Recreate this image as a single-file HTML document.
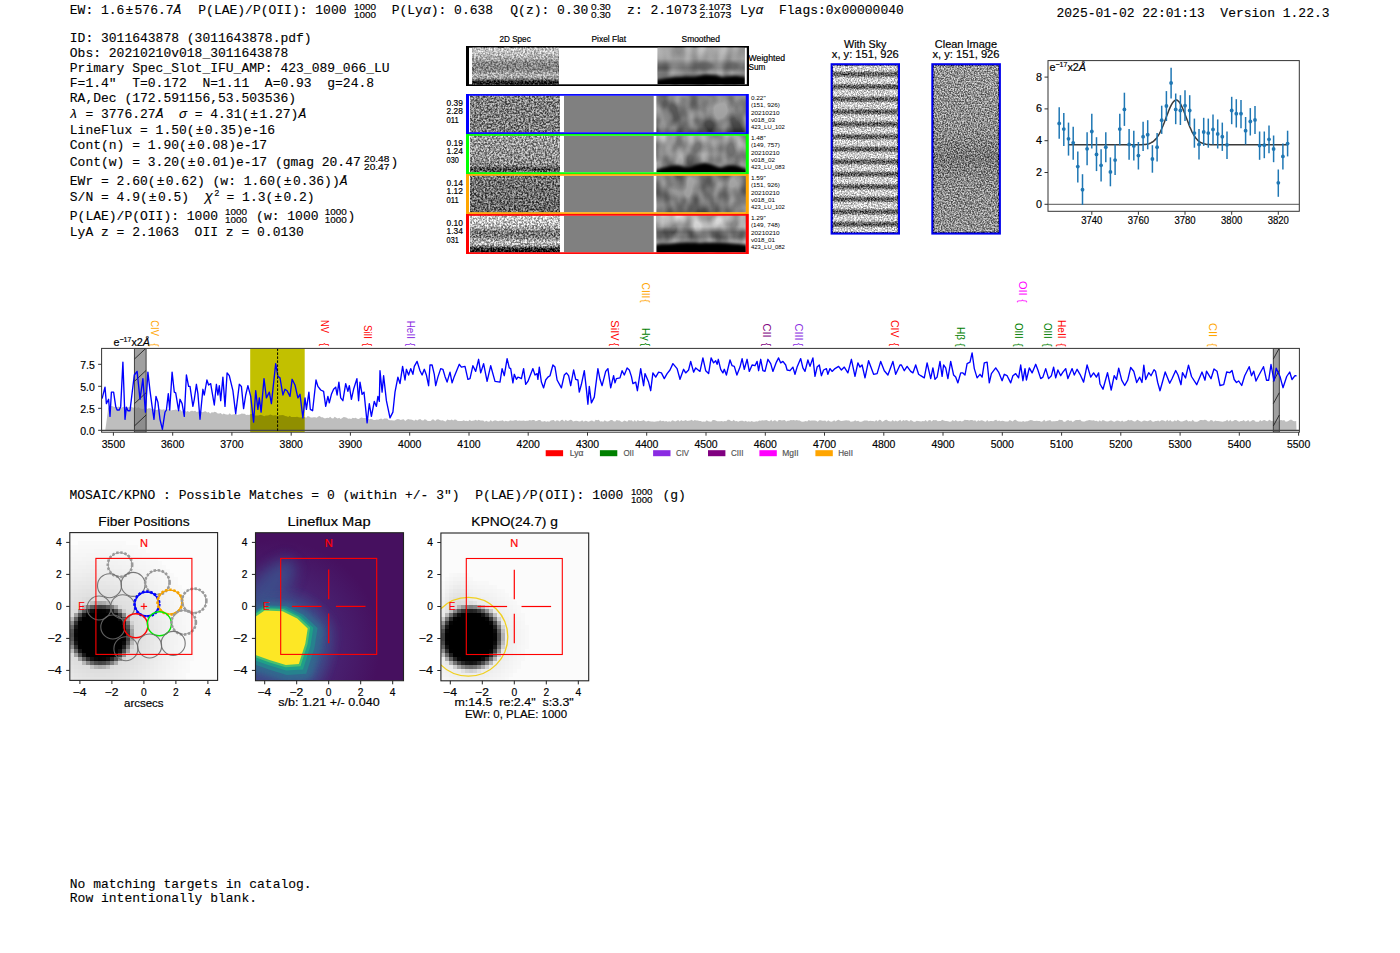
<!DOCTYPE html>
<html><head><meta charset="utf-8"><style>
html,body{margin:0;padding:0;background:#fff;}
body{width:1400px;height:953px;overflow:hidden;position:relative;}
svg{position:absolute;left:0;top:0;}
text{font-family:'Liberation Sans',sans-serif;white-space:pre;}
.m{font-family:'Liberation Mono',monospace;stroke:#000;stroke-width:0.12px;}
</style></head><body>
<svg width="1400" height="953" viewBox="0 0 1400 953">
<text x="69.80" y="14.00" font-size="13" class="m">EW: 1.6<tspan dx="1">±</tspan><tspan dx="1.3">5</tspan>76.7<tspan font-style="italic">Å</tspan></text>
<text x="198.30" y="14.00" font-size="13" class="m">P(LAE)/P(OII): 1000</text>
<text x="354.00" y="9.60" font-size="9.8" stroke="#000" stroke-width="0.18" textLength="22.00" lengthAdjust="spacingAndGlyphs">1000</text>
<text x="354.00" y="17.60" font-size="9.8" stroke="#000" stroke-width="0.18" textLength="22.00" lengthAdjust="spacingAndGlyphs">1000</text>
<text x="391.70" y="14.00" font-size="13" class="m">P(Ly<tspan font-style="italic">α</tspan>): 0.638</text>
<text x="510.30" y="14.00" font-size="13" class="m">Q(z): 0.30</text>
<text x="591.00" y="9.60" font-size="9.8" stroke="#000" stroke-width="0.18" textLength="19.70" lengthAdjust="spacingAndGlyphs">0.30</text>
<text x="591.00" y="17.60" font-size="9.8" stroke="#000" stroke-width="0.18" textLength="19.70" lengthAdjust="spacingAndGlyphs">0.30</text>
<text x="627.10" y="14.00" font-size="13" class="m">z: 2.1073</text>
<text x="699.50" y="9.60" font-size="9.8" stroke="#000" stroke-width="0.18" textLength="31.90" lengthAdjust="spacingAndGlyphs">2.1073</text>
<text x="699.50" y="17.60" font-size="9.8" stroke="#000" stroke-width="0.18" textLength="31.90" lengthAdjust="spacingAndGlyphs">2.1073</text>
<text x="740.00" y="14.00" font-size="13" class="m">Ly<tspan font-style="italic">α</tspan></text>
<text x="779.00" y="14.00" font-size="13" class="m">Flags:0x00000040</text>
<text x="1056.50" y="17.00" font-size="13" class="m">2025-01-02 22:01:13  Version 1.22.3</text>
<text x="69.80" y="42.40" font-size="13" class="m">ID: 3011643878 (3011643878.pdf)</text>
<text x="69.80" y="57.10" font-size="13" class="m">Obs: 20210210v018_3011643878</text>
<text x="69.80" y="72.10" font-size="13" class="m">Primary Spec_Slot_IFU_AMP: 423_089_066_LU</text>
<text x="69.80" y="87.10" font-size="13" class="m">F=1.4"  T=0.172  N=1.11  A=0.93  g=24.8</text>
<text x="69.80" y="102.10" font-size="13" class="m">RA,Dec (172.591156,53.503536)</text>
<text x="69.80" y="133.60" font-size="13" class="m">LineFlux = 1.50(<tspan dx="1">±</tspan><tspan dx="1.3">0</tspan>.35)e-16</text>
<text x="69.80" y="148.60" font-size="13" class="m">Cont(n) = 1.90(<tspan dx="1">±</tspan><tspan dx="1.3">0</tspan>.08)e-17</text>
<text x="69.80" y="184.60" font-size="13" class="m">EWr = 2.60(<tspan dx="1">±</tspan><tspan dx="1.3">0</tspan>.62) (w: 1.60(<tspan dx="1">±</tspan><tspan dx="1.3">0</tspan>.36))<tspan font-style="italic">Å</tspan></text>
<text x="69.80" y="236.40" font-size="13" class="m">LyA z = 2.1063  OII z = 0.0130</text>
<text x="69.80" y="118.30" font-size="13" class="m"><tspan font-style="italic">λ</tspan> = 3776.27<tspan font-style="italic">Å</tspan>  <tspan font-style="italic">σ</tspan> = 4.31(<tspan dx="1">±</tspan><tspan dx="1.3">1</tspan>.27)<tspan font-style="italic">Å</tspan></text>
<text x="69.80" y="166.40" font-size="13" class="m">Cont(w) = 3.20(<tspan dx="1">±</tspan><tspan dx="1.3">0</tspan>.01)e-17 (gmag 20.47</text>
<text x="364.00" y="162.00" font-size="9.8" stroke="#000" stroke-width="0.18" textLength="25.40" lengthAdjust="spacingAndGlyphs">20.48</text>
<text x="364.00" y="170.00" font-size="9.8" stroke="#000" stroke-width="0.18" textLength="25.40" lengthAdjust="spacingAndGlyphs">20.47</text>
<text x="390.50" y="166.40" font-size="13" class="m">)</text>
<text x="69.80" y="201.40" font-size="13" class="m">S/N = 4.9(<tspan dx="1">±</tspan><tspan dx="1.3">0</tspan>.5)</text>
<text x="204.50" y="201.40" font-size="14" class="m"><tspan font-style="italic">χ</tspan></text>
<text x="214.60" y="196.00" font-size="8.5" stroke="#000" stroke-width="0.18">2</text>
<text x="226.50" y="201.40" font-size="13" class="m">= 1.3(<tspan dx="1">±</tspan><tspan dx="1.3">0</tspan>.2)</text>
<text x="69.80" y="219.70" font-size="13" class="m">P(LAE)/P(OII): 1000</text>
<text x="225.00" y="215.30" font-size="9.8" stroke="#000" stroke-width="0.18" textLength="22.00" lengthAdjust="spacingAndGlyphs">1000</text>
<text x="225.00" y="223.30" font-size="9.8" stroke="#000" stroke-width="0.18" textLength="22.00" lengthAdjust="spacingAndGlyphs">1000</text>
<text x="256.10" y="219.70" font-size="13" class="m">(w: 1000</text>
<text x="324.70" y="215.30" font-size="9.8" stroke="#000" stroke-width="0.18" textLength="22.00" lengthAdjust="spacingAndGlyphs">1000</text>
<text x="324.70" y="223.30" font-size="9.8" stroke="#000" stroke-width="0.18" textLength="22.00" lengthAdjust="spacingAndGlyphs">1000</text>
<text x="347.50" y="219.70" font-size="13" class="m">)</text>
<text x="69.50" y="498.90" font-size="13" class="m">MOSAIC/KPNO : Possible Matches = 0 (within +/- 3")  P(LAE)/P(OII): 1000</text>
<text x="631.00" y="494.50" font-size="9.8" stroke="#000" stroke-width="0.18" textLength="21.50" lengthAdjust="spacingAndGlyphs">1000</text>
<text x="631.00" y="502.50" font-size="9.8" stroke="#000" stroke-width="0.18" textLength="21.50" lengthAdjust="spacingAndGlyphs">1000</text>
<text x="662.50" y="498.90" font-size="13" class="m">(g)</text>
<text x="69.80" y="887.80" font-size="13" class="m">No matching targets in catalog.</text>
<text x="69.80" y="902.40" font-size="13" class="m">Row intentionally blank.</text>
<defs><clipPath id="spc"><rect x="101.6" y="348.4" width="1197.8000000000002" height="83.80000000000001"/></clipPath><pattern id="hatch" patternUnits="userSpaceOnUse" width="40" height="22" patternTransform="translate(0,0)"></pattern></defs>
<rect x="101.6" y="348.4" width="1197.8000000000002" height="83.80000000000001" fill="#fff"/>
<g clip-path="url(#spc)">
<rect x="250.2" y="348.4" width="54.5" height="83.80000000000001" fill="#c2c000"/>
<path d="M105.2,430.3 L105.2,430.7 L106.7,419.8 L108.2,407.7 L109.7,406.8 L111.2,405.9 L112.7,406.3 L114.2,407.1 L115.7,406.2 L117.2,407.3 L118.7,406.6 L120.2,407.5 L121.7,407.5 L123.2,406.9 L124.7,406.2 L126.2,407.7 L127.7,407.6 L129.2,406.9 L130.7,406.3 L132.2,407.2 L133.7,407.7 L135.2,406.6 L136.7,408.6 L138.2,407.0 L139.7,408.3 L141.2,408.7 L142.7,408.9 L144.2,408.6 L145.7,407.6 L147.2,409.0 L148.7,408.3 L150.2,408.3 L151.7,408.9 L153.2,408.7 L154.7,409.8 L156.2,409.9 L157.7,409.7 L159.2,408.8 L160.7,409.4 L162.2,409.8 L163.7,409.3 L165.2,409.7 L166.7,410.1 L168.2,409.1 L169.7,409.4 L171.2,410.5 L172.7,409.9 L174.2,410.1 L175.7,409.5 L177.2,409.9 L178.7,410.9 L180.2,409.5 L181.7,411.5 L183.2,410.9 L184.7,410.3 L186.2,411.7 L187.7,411.1 L189.2,412.1 L190.7,410.9 L192.2,410.8 L193.7,411.3 L195.2,410.8 L196.7,412.1 L198.2,411.4 L199.7,411.7 L201.2,411.8 L202.7,412.2 L204.2,411.4 L205.7,411.3 L207.2,412.4 L208.7,412.1 L210.2,413.5 L211.7,412.2 L213.2,412.5 L214.7,411.8 L216.2,412.3 L217.7,413.5 L219.2,413.4 L220.7,412.9 L222.2,414.4 L223.7,413.6 L225.2,414.3 L226.7,414.5 L228.2,414.7 L229.7,413.3 L231.2,414.8 L232.7,414.6 L234.2,414.3 L235.7,413.4 L237.2,415.1 L238.7,414.4 L240.2,414.2 L241.7,413.6 L243.2,413.7 L244.7,413.7 L246.2,415.0 L247.7,414.8 L249.2,414.9 L250.7,413.9 L252.2,413.8 L253.7,415.5 L255.2,415.5 L256.7,415.5 L258.2,415.5 L259.7,415.0 L261.2,414.9 L262.7,415.6 L264.2,416.2 L265.7,415.4 L267.2,415.6 L268.7,415.2 L270.2,414.4 L271.7,415.0 L273.2,415.5 L274.7,415.3 L276.2,415.2 L277.7,416.6 L279.2,414.9 L280.7,415.2 L282.2,415.0 L283.7,415.2 L285.2,416.1 L286.7,416.2 L288.2,416.9 L289.7,415.8 L291.2,417.1 L292.7,417.1 L294.2,416.9 L295.7,417.0 L297.2,416.7 L298.7,417.3 L300.2,417.5 L301.7,417.2 L303.2,417.4 L304.7,416.9 L306.2,417.7 L307.7,415.9 L309.2,416.5 L310.7,417.6 L312.2,417.4 L313.7,417.3 L315.2,417.3 L316.7,417.8 L318.2,416.4 L319.7,416.1 L321.2,417.3 L322.7,417.3 L324.2,418.2 L325.7,418.2 L327.2,417.7 L328.7,418.0 L330.2,416.8 L331.7,418.3 L333.2,418.6 L334.7,416.7 L336.2,417.7 L337.7,418.5 L339.2,417.8 L340.7,418.9 L342.2,417.9 L343.7,417.0 L345.2,417.3 L346.7,417.7 L348.2,418.7 L349.7,418.5 L351.2,419.0 L352.7,417.8 L354.2,418.3 L355.7,417.8 L357.2,418.8 L358.7,419.1 L360.2,417.9 L361.7,417.6 L363.2,418.0 L364.7,418.1 L366.2,418.1 L367.7,418.4 L369.2,419.5 L370.7,418.9 L372.2,419.3 L373.7,420.1 L375.2,420.1 L376.7,419.6 L378.2,419.7 L379.7,418.9 L381.2,418.4 L382.7,419.5 L384.2,418.5 L385.7,418.5 L387.2,418.6 L388.7,419.9 L390.2,420.3 L391.7,420.3 L393.2,420.4 L394.7,420.4 L396.2,419.6 L397.7,419.1 L399.2,419.2 L400.7,420.0 L402.2,419.6 L403.7,419.3 L405.2,420.9 L406.7,419.7 L408.2,419.1 L409.7,419.4 L411.2,419.5 L412.7,420.1 L414.2,420.7 L415.7,419.5 L417.2,420.4 L418.7,419.5 L420.2,419.1 L421.7,420.3 L423.2,420.4 L424.7,419.2 L426.2,419.7 L427.7,420.9 L429.2,421.0 L430.7,420.9 L432.2,419.4 L433.7,419.6 L435.2,421.0 L436.7,419.6 L438.2,419.3 L439.7,420.0 L441.2,420.6 L442.7,420.2 L444.2,421.1 L445.7,421.4 L447.2,419.4 L448.7,420.1 L450.2,420.3 L451.7,419.5 L453.2,420.5 L454.7,419.6 L456.2,419.7 L457.7,421.1 L459.2,421.0 L460.7,420.9 L462.2,421.0 L463.7,420.3 L465.2,421.0 L466.7,420.7 L468.2,421.3 L469.7,419.7 L471.2,420.9 L472.7,420.7 L474.2,420.4 L475.7,419.8 L477.2,420.8 L478.7,419.8 L480.2,420.6 L481.7,420.6 L483.2,420.6 L484.7,421.7 L486.2,420.8 L487.7,421.4 L489.2,421.8 L490.7,420.1 L492.2,421.4 L493.7,420.8 L495.2,420.3 L496.7,420.7 L498.2,421.2 L499.7,420.8 L501.2,420.7 L502.7,420.2 L504.2,421.6 L505.7,420.7 L507.2,421.3 L508.7,421.3 L510.2,420.2 L511.7,420.8 L513.2,420.7 L514.7,420.2 L516.2,419.9 L517.7,420.9 L519.2,420.6 L520.7,420.8 L522.2,420.8 L523.7,420.4 L525.2,420.9 L526.7,420.7 L528.2,420.8 L529.7,419.9 L531.2,420.4 L532.7,420.0 L534.2,419.9 L535.7,421.3 L537.2,420.7 L538.7,419.9 L540.2,420.1 L541.7,421.6 L543.2,421.6 L544.7,420.9 L546.2,421.7 L547.7,421.3 L549.2,421.7 L550.7,420.4 L552.2,420.2 L553.7,420.0 L555.2,421.5 L556.7,420.3 L558.2,420.5 L559.7,421.6 L561.2,420.0 L562.7,419.8 L564.2,421.4 L565.7,419.8 L567.2,421.0 L568.7,420.8 L570.2,419.8 L571.7,420.1 L573.2,421.5 L574.7,420.9 L576.2,420.8 L577.7,421.1 L579.2,421.4 L580.7,421.2 L582.2,420.3 L583.7,421.8 L585.2,420.7 L586.7,420.9 L588.2,421.8 L589.7,421.2 L591.2,420.5 L592.7,420.8 L594.2,421.7 L595.7,419.8 L597.2,420.2 L598.7,419.8 L600.2,421.6 L601.7,421.3 L603.2,421.8 L604.7,420.2 L606.2,421.3 L607.7,421.6 L609.2,421.0 L610.7,419.9 L612.2,420.1 L613.7,421.3 L615.2,421.5 L616.7,419.9 L618.2,420.6 L619.7,420.4 L621.2,421.7 L622.7,421.7 L624.2,420.4 L625.7,421.0 L627.2,421.7 L628.7,419.9 L630.2,420.5 L631.7,420.2 L633.2,421.7 L634.7,420.0 L636.2,421.7 L637.7,420.0 L639.2,420.9 L640.7,421.1 L642.2,420.7 L643.7,419.9 L645.2,421.3 L646.7,421.6 L648.2,420.7 L649.7,421.3 L651.2,421.6 L652.7,421.5 L654.2,421.7 L655.7,421.4 L657.2,421.2 L658.7,421.2 L660.2,420.2 L661.7,421.2 L663.2,420.8 L664.7,421.5 L666.2,421.1 L667.7,421.8 L669.2,421.3 L670.7,421.8 L672.2,420.3 L673.7,420.7 L675.2,421.5 L676.7,420.8 L678.2,419.9 L679.7,421.6 L681.2,420.1 L682.7,420.9 L684.2,420.8 L685.7,420.1 L687.2,421.0 L688.7,420.8 L690.2,420.4 L691.7,419.8 L693.2,421.1 L694.7,420.1 L696.2,420.4 L697.7,420.5 L699.2,421.0 L700.7,421.1 L702.2,421.7 L703.7,421.6 L705.2,421.7 L706.7,420.3 L708.2,421.3 L709.7,421.5 L711.2,421.7 L712.7,420.1 L714.2,420.0 L715.7,420.4 L717.2,421.3 L718.7,421.3 L720.2,421.2 L721.7,420.9 L723.2,421.5 L724.7,420.9 L726.2,421.3 L727.7,419.8 L729.2,419.8 L730.7,420.7 L732.2,421.3 L733.7,419.8 L735.2,421.2 L736.7,421.1 L738.2,421.8 L739.7,421.0 L741.2,420.8 L742.7,420.8 L744.2,421.4 L745.7,420.8 L747.2,421.8 L748.7,421.3 L750.2,421.7 L751.7,421.0 L753.2,421.8 L754.7,421.8 L756.2,421.2 L757.7,421.4 L759.2,420.6 L760.7,420.7 L762.2,420.3 L763.7,420.5 L765.2,420.3 L766.7,420.0 L768.2,421.0 L769.7,421.2 L771.2,419.8 L772.7,421.5 L774.2,420.3 L775.7,420.5 L777.2,421.8 L778.7,420.1 L780.2,420.0 L781.7,420.5 L783.2,420.3 L784.7,420.1 L786.2,421.6 L787.7,420.7 L789.2,420.8 L790.7,420.1 L792.2,420.2 L793.7,420.1 L795.2,420.6 L796.7,420.0 L798.2,420.4 L799.7,420.4 L801.2,421.4 L802.7,421.8 L804.2,421.6 L805.7,421.1 L807.2,421.6 L808.7,420.1 L810.2,420.7 L811.7,420.5 L813.2,420.5 L814.7,420.4 L816.2,420.8 L817.7,421.8 L819.2,420.2 L820.7,420.3 L822.2,420.8 L823.7,420.7 L825.2,420.5 L826.7,421.7 L828.2,420.3 L829.7,421.3 L831.2,421.7 L832.7,421.3 L834.2,420.3 L835.7,421.4 L837.2,420.3 L838.7,419.8 L840.2,420.8 L841.7,421.0 L843.2,420.8 L844.7,420.4 L846.2,420.2 L847.7,420.5 L849.2,420.5 L850.7,421.7 L852.2,421.5 L853.7,421.3 L855.2,420.3 L856.7,421.2 L858.2,420.7 L859.7,421.8 L861.2,421.7 L862.7,421.3 L864.2,420.4 L865.7,420.4 L867.2,420.4 L868.7,421.2 L870.2,420.8 L871.7,420.9 L873.2,420.9 L874.7,421.6 L876.2,420.0 L877.7,421.4 L879.2,419.8 L880.7,419.9 L882.2,421.8 L883.7,420.9 L885.2,420.1 L886.7,419.8 L888.2,420.9 L889.7,421.3 L891.2,421.4 L892.7,419.9 L894.2,421.4 L895.7,420.6 L897.2,421.6 L898.7,420.7 L900.2,419.8 L901.7,421.6 L903.2,420.1 L904.7,420.8 L906.2,420.0 L907.7,420.4 L909.2,421.4 L910.7,420.0 L912.2,420.8 L913.7,421.8 L915.2,421.8 L916.7,420.8 L918.2,420.9 L919.7,421.2 L921.2,421.6 L922.7,421.1 L924.2,421.2 L925.7,420.1 L927.2,421.8 L928.7,420.3 L930.2,420.1 L931.7,421.6 L933.2,419.9 L934.7,420.3 L936.2,419.9 L937.7,421.2 L939.2,421.1 L940.7,421.0 L942.2,419.7 L943.7,420.6 L945.2,421.1 L946.7,420.9 L948.2,421.3 L949.7,421.8 L951.2,421.6 L952.7,420.1 L954.2,421.2 L955.7,419.9 L957.2,421.3 L958.7,421.3 L960.2,420.8 L961.7,421.5 L963.2,421.1 L964.7,419.8 L966.2,420.0 L967.7,420.1 L969.2,420.5 L970.7,419.9 L972.2,419.9 L973.7,420.7 L975.2,420.3 L976.7,421.7 L978.2,420.3 L979.7,420.9 L981.2,420.3 L982.7,420.5 L984.2,421.2 L985.7,421.7 L987.2,419.9 L988.7,421.6 L990.2,420.9 L991.7,421.1 L993.2,421.2 L994.7,420.3 L996.2,419.8 L997.7,421.3 L999.2,420.5 L1000.7,421.2 L1002.2,420.7 L1003.7,421.0 L1005.2,421.5 L1006.7,421.5 L1008.2,421.4 L1009.7,419.9 L1011.2,420.8 L1012.7,421.4 L1014.2,419.9 L1015.7,419.7 L1017.2,420.9 L1018.7,421.6 L1020.2,421.4 L1021.7,421.7 L1023.2,421.1 L1024.7,421.7 L1026.2,421.3 L1027.7,421.3 L1029.2,420.6 L1030.7,420.0 L1032.2,420.3 L1033.7,421.0 L1035.2,421.0 L1036.7,420.7 L1038.2,421.1 L1039.7,421.1 L1041.2,421.7 L1042.7,421.3 L1044.2,419.8 L1045.7,421.6 L1047.2,420.8 L1048.7,420.5 L1050.2,420.0 L1051.7,421.4 L1053.2,421.3 L1054.7,421.3 L1056.2,421.0 L1057.7,420.9 L1059.2,419.8 L1060.7,420.1 L1062.2,420.0 L1063.7,421.8 L1065.2,421.8 L1066.7,420.4 L1068.2,420.0 L1069.7,420.9 L1071.2,420.6 L1072.7,421.9 L1074.2,421.0 L1075.7,419.9 L1077.2,420.1 L1078.7,420.0 L1080.2,419.8 L1081.7,421.3 L1083.2,421.6 L1084.7,421.5 L1086.2,420.7 L1087.7,420.4 L1089.2,419.9 L1090.7,420.3 L1092.2,420.5 L1093.7,420.2 L1095.2,420.9 L1096.7,420.7 L1098.2,421.8 L1099.7,420.2 L1101.2,421.4 L1102.7,419.9 L1104.2,420.5 L1105.7,421.2 L1107.2,421.6 L1108.7,421.3 L1110.2,420.5 L1111.7,420.4 L1113.2,421.6 L1114.7,421.7 L1116.2,420.7 L1117.7,420.6 L1119.2,421.0 L1120.7,421.4 L1122.2,420.6 L1123.7,421.8 L1125.2,421.2 L1126.7,420.9 L1128.2,419.8 L1129.7,420.5 L1131.2,420.0 L1132.7,420.8 L1134.2,421.4 L1135.7,421.3 L1137.2,419.8 L1138.7,420.4 L1140.2,421.2 L1141.7,421.8 L1143.2,420.8 L1144.7,420.4 L1146.2,421.0 L1147.7,421.3 L1149.2,420.4 L1150.7,419.9 L1152.2,421.4 L1153.7,421.8 L1155.2,421.1 L1156.7,421.0 L1158.2,420.4 L1159.7,421.4 L1161.2,420.2 L1162.7,420.3 L1164.2,420.8 L1165.7,421.4 L1167.2,419.8 L1168.7,421.2 L1170.2,420.1 L1171.7,421.4 L1173.2,421.4 L1174.7,420.2 L1176.2,421.2 L1177.7,419.8 L1179.2,420.8 L1180.7,421.5 L1182.2,421.4 L1183.7,421.0 L1185.2,420.4 L1186.7,419.8 L1188.2,421.5 L1189.7,421.0 L1191.2,421.4 L1192.7,419.8 L1194.2,421.6 L1195.7,421.7 L1197.2,421.7 L1198.7,421.0 L1200.2,420.0 L1201.7,420.0 L1203.2,420.3 L1204.7,419.7 L1206.2,419.9 L1207.7,421.2 L1209.2,421.5 L1210.7,419.9 L1212.2,420.3 L1213.7,421.8 L1215.2,420.4 L1216.7,421.1 L1218.2,421.1 L1219.7,421.2 L1221.2,421.5 L1222.7,421.8 L1224.2,421.3 L1225.7,421.1 L1227.2,419.8 L1228.7,421.6 L1230.2,419.8 L1231.7,421.4 L1233.2,421.1 L1234.7,420.1 L1236.2,420.1 L1237.7,420.9 L1239.2,421.7 L1240.7,420.9 L1242.2,421.1 L1243.7,419.9 L1245.2,421.4 L1246.7,421.1 L1248.2,420.0 L1249.7,421.8 L1251.2,421.0 L1252.7,420.1 L1254.2,420.2 L1255.7,421.8 L1257.2,421.8 L1258.7,421.7 L1260.2,419.9 L1261.7,421.3 L1263.2,420.3 L1264.7,420.0 L1266.2,421.1 L1267.7,421.3 L1269.2,419.8 L1270.7,420.5 L1272.2,421.3 L1273.7,420.3 L1275.2,421.2 L1276.7,421.3 L1278.2,421.8 L1279.7,420.3 L1281.2,419.9 L1282.7,420.5 L1284.2,419.9 L1285.7,421.8 L1287.2,421.4 L1288.7,420.8 L1290.2,419.8 L1291.7,419.8 L1293.2,421.0 L1294.7,421.3 L1296.2,420.9 L1296.5,430.3 Z" fill="#000" fill-opacity="0.255"/>
<rect x="134.4" y="348.4" width="11.7" height="83.80000000000001" fill="#777" fill-opacity="0.7" stroke="#333" stroke-width="0.9"/>
<line x1="134.4" y1="336.8" x2="146.1" y2="325.8" stroke="#222" stroke-width="0.9"/>
<line x1="134.4" y1="359.1" x2="146.1" y2="348.1" stroke="#222" stroke-width="0.9"/>
<line x1="134.4" y1="381.4" x2="146.1" y2="370.4" stroke="#222" stroke-width="0.9"/>
<line x1="134.4" y1="403.7" x2="146.1" y2="392.7" stroke="#222" stroke-width="0.9"/>
<line x1="134.4" y1="426.0" x2="146.1" y2="415.0" stroke="#222" stroke-width="0.9"/>
<line x1="134.4" y1="448.3" x2="146.1" y2="437.3" stroke="#222" stroke-width="0.9"/>
<line x1="134.4" y1="470.6" x2="146.1" y2="459.6" stroke="#222" stroke-width="0.9"/>
<line x1="134.4" y1="492.9" x2="146.1" y2="481.9" stroke="#222" stroke-width="0.9"/>
<rect x="1273.3" y="348.4" width="6.0" height="83.80000000000001" fill="#777" fill-opacity="0.7" stroke="#333" stroke-width="0.9"/>
<line x1="1273.3" y1="336.8" x2="1279.3" y2="325.8" stroke="#222" stroke-width="0.9"/>
<line x1="1273.3" y1="359.1" x2="1279.3" y2="348.1" stroke="#222" stroke-width="0.9"/>
<line x1="1273.3" y1="381.4" x2="1279.3" y2="370.4" stroke="#222" stroke-width="0.9"/>
<line x1="1273.3" y1="403.7" x2="1279.3" y2="392.7" stroke="#222" stroke-width="0.9"/>
<line x1="1273.3" y1="426.0" x2="1279.3" y2="415.0" stroke="#222" stroke-width="0.9"/>
<line x1="1273.3" y1="448.3" x2="1279.3" y2="437.3" stroke="#222" stroke-width="0.9"/>
<line x1="1273.3" y1="470.6" x2="1279.3" y2="459.6" stroke="#222" stroke-width="0.9"/>
<line x1="1273.3" y1="492.9" x2="1279.3" y2="481.9" stroke="#222" stroke-width="0.9"/>
<line x1="101.6" y1="430.3" x2="1299.4" y2="430.3" stroke="#444" stroke-width="1.2"/>
<path d="M102.1,398.6 L105.0,387.1 L106.4,403.6 L108.6,399.3 L110.0,416.4 L111.4,392.1 L113.6,392.1 L115.7,406.4 L117.1,410.0 L119.3,410.0 L120.7,406.4 L122.9,362.1 L125.0,419.3 L126.4,407.1 L127.9,410.7 L130.0,410.7 L134.3,375.0 L137.1,371.4 L140.0,399.3 L142.9,378.6 L145.4,412.1 L147.9,372.1 L150.0,390.7 L152.1,406.4 L154.0,419.3 L156.0,396.4 L157.9,402.1 L160.0,419.3 L162.4,429.3 L165.0,412.1 L166.4,410.0 L168.3,393.6 L169.7,410.0 L172.1,372.1 L174.3,392.1 L175.7,392.9 L178.6,410.7 L180.0,399.3 L182.1,403.6 L184.3,416.4 L186.4,375.0 L188.6,386.4 L190.0,386.4 L192.9,406.4 L194.3,399.3 L196.4,384.3 L197.9,393.6 L200.0,419.3 L202.9,389.3 L204.3,395.0 L206.9,380.0 L208.6,385.0 L210.7,383.6 L212.1,392.1 L214.3,405.0 L216.4,384.3 L217.9,395.0 L219.3,385.7 L220.7,400.7 L222.9,377.1 L225.0,406.4 L227.1,372.9 L229.3,375.7 L232.9,390.7 L235.7,413.6 L239.3,384.3 L241.4,386.4 L243.6,408.6 L245.7,395.0 L247.9,385.7 L250.7,396.4 L253.6,422.1 L255.7,390.7 L257.9,409.3 L259.3,397.9 L261.1,412.1 L264.0,378.6 L266.4,397.9 L269.3,392.1 L271.4,403.6 L275.7,363.6 L277.9,376.4 L280.0,377.9 L282.9,395.0 L285.0,389.3 L287.1,390.7 L290.0,396.4 L292.1,379.3 L295.0,385.0 L297.9,397.9 L300.0,394.3 L302.9,417.9 L305.0,397.9 L306.4,409.3 L308.9,392.1 L310.3,409.3 L312.6,410.7 L316.0,380.0 L317.9,386.4 L320.7,390.0 L323.6,391.4 L325.7,406.4 L327.9,396.4 L329.3,402.9 L331.4,394.3 L333.6,389.3 L335.7,387.1 L337.1,395.0 L338.9,382.1 L340.7,397.9 L342.9,400.7 L345.7,383.6 L347.9,391.4 L349.3,385.7 L351.4,399.3 L353.6,389.3 L356.9,378.6 L358.6,400.7 L360.0,382.1 L362.1,394.3 L364.0,392.1 L367.1,422.9 L369.3,403.6 L371.4,416.4 L374.3,401.4 L376.4,406.4 L377.9,396.4 L379.3,401.4 L380.0,370.7 L382.1,392.1 L383.6,375.7 L386.4,400.7 L390.0,417.9 L392.9,412.1 L395.0,392.1 L397.9,377.1 L400.0,383.6 L402.6,366.4 L405.0,380.0 L406.4,369.3 L408.6,375.0 L410.7,368.6 L412.9,374.3 L414.3,366.4 L417.1,361.4 L420.0,370.7 L422.1,375.0 L424.3,369.3 L426.4,375.0 L428.6,385.7 L430.0,365.0 L432.1,365.0 L434.3,374.3 L435.7,385.7 L437.9,377.1 L440.7,368.6 L442.9,369.3 L445.0,376.4 L447.1,382.1 L450.0,372.1 L452.1,382.9 L454.3,376.4 L459.3,364.3 L461.4,367.1 L465.0,366.4 L467.9,379.3 L470.0,378.6 L472.9,365.7 L475.7,371.4 L478.6,359.3 L480.7,372.9 L483.6,363.6 L487.1,381.4 L490.7,365.7 L495.0,381.4 L500.0,382.1 L502.1,368.6 L504.3,375.7 L507.1,358.6 L509.3,367.9 L510.7,368.6 L512.9,382.9 L514.3,374.3 L516.4,379.3 L517.9,377.1 L520.0,377.9 L521.4,378.6 L523.6,368.6 L525.7,384.3 L527.9,381.4 L532.9,368.6 L535.0,375.0 L537.1,373.6 L537.9,379.3 L539.3,367.1 L541.4,382.1 L543.6,387.9 L545.7,380.0 L547.9,377.1 L550.0,375.7 L552.9,365.0 L555.0,367.1 L557.1,380.0 L561.4,387.9 L564.3,375.0 L566.4,372.9 L568.6,375.7 L570.7,385.7 L573.6,370.0 L575.7,379.3 L577.9,380.0 L579.3,392.1 L581.4,384.3 L584.3,370.7 L586.4,389.3 L587.9,404.3 L589.3,386.4 L591.4,402.9 L594.3,397.1 L597.9,368.6 L600.0,379.3 L602.1,385.7 L605.7,371.4 L607.9,368.6 L610.7,387.9 L613.6,375.7 L615.0,382.9 L616.4,378.6 L620.0,377.9 L622.1,370.7 L624.3,375.0 L627.1,367.9 L629.3,370.0 L631.4,376.4 L632.9,383.6 L635.7,382.1 L637.4,390.7 L640.7,368.6 L643.6,385.7 L645.0,373.6 L648.6,382.1 L650.7,390.7 L652.9,372.9 L655.7,377.1 L658.6,372.1 L661.4,372.9 L664.3,378.6 L667.1,373.6 L670.0,370.0 L672.9,363.6 L677.1,368.6 L680.0,379.3 L683.6,369.3 L685.7,372.9 L688.6,370.0 L690.7,361.4 L693.6,372.1 L695.7,367.9 L700.0,371.4 L702.9,357.9 L705.7,370.7 L708.6,373.6 L711.1,357.9 L713.6,362.9 L715.7,360.7 L717.1,364.3 L718.3,359.3 L720.7,369.3 L722.9,372.9 L724.3,369.3 L726.4,375.0 L730.0,360.0 L732.1,365.7 L734.3,366.4 L736.9,375.0 L740.0,367.1 L742.1,358.6 L744.3,369.3 L747.1,359.3 L749.3,371.4 L752.1,365.0 L755.0,365.7 L757.1,361.4 L758.6,370.7 L760.7,359.3 L762.9,370.7 L765.0,371.4 L767.9,359.3 L770.7,363.6 L772.9,371.4 L776.4,362.1 L778.6,357.9 L780.7,362.9 L782.9,361.4 L785.7,365.0 L787.1,370.0 L790.0,370.7 L792.9,367.1 L795.0,374.3 L797.1,367.1 L800.7,358.6 L802.9,367.9 L805.0,371.4 L807.9,360.0 L810.0,366.4 L812.9,357.9 L815.0,376.4 L817.1,367.1 L819.3,365.0 L821.4,375.7 L823.6,370.0 L826.4,368.6 L827.9,374.3 L830.0,368.6 L832.1,371.4 L835.0,368.6 L838.6,366.4 L841.4,370.0 L844.3,367.1 L847.9,372.9 L851.4,359.3 L855.0,376.4 L857.9,362.9 L860.0,367.1 L862.1,365.0 L865.0,377.9 L868.6,360.7 L870.7,366.4 L873.6,374.3 L877.1,373.6 L880.7,361.4 L884.3,370.7 L887.9,375.0 L892.9,361.4 L895.7,374.3 L900.0,365.0 L901.4,365.0 L904.3,370.7 L907.1,366.4 L910.7,371.4 L912.9,372.9 L915.7,365.0 L918.6,374.3 L920.7,375.7 L924.3,377.9 L927.1,362.9 L930.7,378.6 L932.9,367.9 L935.0,379.3 L937.1,377.1 L940.0,361.4 L942.1,376.4 L943.6,365.0 L945.7,367.9 L947.9,378.6 L950.7,361.4 L953.6,375.0 L955.7,377.1 L957.9,382.9 L960.7,372.9 L962.9,372.9 L965.0,375.0 L967.1,363.6 L970.0,362.1 L972.1,352.9 L974.3,368.6 L977.1,377.9 L980.0,374.3 L982.1,377.1 L984.3,362.9 L987.1,362.1 L989.3,382.9 L991.4,373.6 L995.7,367.9 L998.6,372.1 L1002.1,380.7 L1004.3,374.3 L1007.1,375.7 L1010.7,382.9 L1012.9,375.7 L1015.7,373.6 L1018.6,377.9 L1020.7,365.0 L1022.9,380.7 L1025.0,368.6 L1026.4,380.0 L1029.3,367.9 L1032.1,372.9 L1035.7,364.3 L1037.9,370.0 L1040.7,378.6 L1042.9,377.1 L1045.7,368.6 L1048.6,378.6 L1051.4,375.7 L1053.6,367.1 L1055.7,377.9 L1057.9,370.0 L1060.7,375.7 L1062.9,372.1 L1065.7,368.6 L1067.9,378.6 L1072.1,368.6 L1074.3,375.0 L1077.1,369.3 L1080.0,374.3 L1083.6,382.1 L1087.1,365.0 L1090.7,377.1 L1093.6,372.9 L1096.4,377.1 L1098.6,372.9 L1100.0,384.0 L1103.0,389.2 L1107.5,372.7 L1111.2,390.0 L1114.2,375.7 L1116.5,379.5 L1118.7,368.2 L1121.7,380.2 L1124.7,385.5 L1127.7,380.2 L1130.7,367.5 L1133.7,371.2 L1136.7,382.5 L1139.7,377.2 L1142.0,382.5 L1143.8,365.2 L1145.7,379.5 L1148.7,372.7 L1151.0,375.7 L1154.0,369.7 L1155.5,371.2 L1157.7,382.5 L1160.0,390.7 L1165.2,372.0 L1169.7,383.2 L1172.0,378.7 L1175.7,370.5 L1178.0,375.0 L1181.0,384.7 L1182.5,372.7 L1185.5,378.0 L1188.5,365.2 L1191.5,376.5 L1196.7,384.7 L1202.0,372.0 L1205.0,380.2 L1206.5,371.2 L1211.0,378.7 L1214.0,369.0 L1217.0,371.2 L1220.0,385.5 L1223.7,384.7 L1226.7,372.0 L1229.7,372.7 L1232.0,370.5 L1234.2,379.5 L1236.5,382.5 L1238.7,381.0 L1241.7,385.5 L1244.7,375.7 L1249.2,366.7 L1251.5,375.7 L1253.7,371.2 L1256.0,381.0 L1259.0,375.0 L1263.5,366.7 L1266.5,380.2 L1268.7,380.2 L1271.0,364.5 L1274.0,381.0 L1276.2,368.2 L1280.0,376.5 L1283.0,387.7 L1286.7,376.5 L1289.7,372.0 L1292.0,379.5 L1295.0,375.7 L1296.5,375.7" fill="none" stroke="#0000ff" stroke-width="1.35" stroke-linejoin="round"/>
<line x1="277.6" y1="348.4" x2="277.6" y2="432.2" stroke="#000" stroke-width="1" stroke-dasharray="2.5,1.5"/>
</g>
<rect x="101.6" y="348.4" width="1197.8" height="83.8" fill="none" stroke="#333" stroke-width="1"/>
<line x1="98.1" y1="430.3" x2="101.6" y2="430.3" stroke="#333" stroke-width="1"/>
<text x="94.80" y="434.70" font-size="10.8" text-anchor="end" stroke="#000" stroke-width="0.18" textLength="14.60" lengthAdjust="spacingAndGlyphs">0.0</text>
<line x1="98.1" y1="408.3" x2="101.6" y2="408.3" stroke="#333" stroke-width="1"/>
<text x="94.80" y="412.70" font-size="10.8" text-anchor="end" stroke="#000" stroke-width="0.18" textLength="14.60" lengthAdjust="spacingAndGlyphs">2.5</text>
<line x1="98.1" y1="386.3" x2="101.6" y2="386.3" stroke="#333" stroke-width="1"/>
<text x="94.80" y="390.70" font-size="10.8" text-anchor="end" stroke="#000" stroke-width="0.18" textLength="14.60" lengthAdjust="spacingAndGlyphs">5.0</text>
<line x1="98.1" y1="364.3" x2="101.6" y2="364.3" stroke="#333" stroke-width="1"/>
<text x="94.80" y="368.70" font-size="10.8" text-anchor="end" stroke="#000" stroke-width="0.18" textLength="14.60" lengthAdjust="spacingAndGlyphs">7.5</text>
<line x1="113.4" y1="432.2" x2="113.4" y2="435.7" stroke="#333" stroke-width="1"/>
<text x="113.40" y="448.10" font-size="10.8" text-anchor="middle" stroke="#000" stroke-width="0.18" textLength="23.20" lengthAdjust="spacingAndGlyphs">3500</text>
<line x1="172.7" y1="432.2" x2="172.7" y2="435.7" stroke="#333" stroke-width="1"/>
<text x="172.66" y="448.10" font-size="10.8" text-anchor="middle" stroke="#000" stroke-width="0.18" textLength="23.20" lengthAdjust="spacingAndGlyphs">3600</text>
<line x1="231.9" y1="432.2" x2="231.9" y2="435.7" stroke="#333" stroke-width="1"/>
<text x="231.92" y="448.10" font-size="10.8" text-anchor="middle" stroke="#000" stroke-width="0.18" textLength="23.20" lengthAdjust="spacingAndGlyphs">3700</text>
<line x1="291.2" y1="432.2" x2="291.2" y2="435.7" stroke="#333" stroke-width="1"/>
<text x="291.18" y="448.10" font-size="10.8" text-anchor="middle" stroke="#000" stroke-width="0.18" textLength="23.20" lengthAdjust="spacingAndGlyphs">3800</text>
<line x1="350.4" y1="432.2" x2="350.4" y2="435.7" stroke="#333" stroke-width="1"/>
<text x="350.44" y="448.10" font-size="10.8" text-anchor="middle" stroke="#000" stroke-width="0.18" textLength="23.20" lengthAdjust="spacingAndGlyphs">3900</text>
<line x1="409.7" y1="432.2" x2="409.7" y2="435.7" stroke="#333" stroke-width="1"/>
<text x="409.70" y="448.10" font-size="10.8" text-anchor="middle" stroke="#000" stroke-width="0.18" textLength="23.20" lengthAdjust="spacingAndGlyphs">4000</text>
<line x1="469.0" y1="432.2" x2="469.0" y2="435.7" stroke="#333" stroke-width="1"/>
<text x="468.96" y="448.10" font-size="10.8" text-anchor="middle" stroke="#000" stroke-width="0.18" textLength="23.20" lengthAdjust="spacingAndGlyphs">4100</text>
<line x1="528.2" y1="432.2" x2="528.2" y2="435.7" stroke="#333" stroke-width="1"/>
<text x="528.22" y="448.10" font-size="10.8" text-anchor="middle" stroke="#000" stroke-width="0.18" textLength="23.20" lengthAdjust="spacingAndGlyphs">4200</text>
<line x1="587.5" y1="432.2" x2="587.5" y2="435.7" stroke="#333" stroke-width="1"/>
<text x="587.48" y="448.10" font-size="10.8" text-anchor="middle" stroke="#000" stroke-width="0.18" textLength="23.20" lengthAdjust="spacingAndGlyphs">4300</text>
<line x1="646.7" y1="432.2" x2="646.7" y2="435.7" stroke="#333" stroke-width="1"/>
<text x="646.74" y="448.10" font-size="10.8" text-anchor="middle" stroke="#000" stroke-width="0.18" textLength="23.20" lengthAdjust="spacingAndGlyphs">4400</text>
<line x1="706.0" y1="432.2" x2="706.0" y2="435.7" stroke="#333" stroke-width="1"/>
<text x="706.00" y="448.10" font-size="10.8" text-anchor="middle" stroke="#000" stroke-width="0.18" textLength="23.20" lengthAdjust="spacingAndGlyphs">4500</text>
<line x1="765.3" y1="432.2" x2="765.3" y2="435.7" stroke="#333" stroke-width="1"/>
<text x="765.26" y="448.10" font-size="10.8" text-anchor="middle" stroke="#000" stroke-width="0.18" textLength="23.20" lengthAdjust="spacingAndGlyphs">4600</text>
<line x1="824.5" y1="432.2" x2="824.5" y2="435.7" stroke="#333" stroke-width="1"/>
<text x="824.52" y="448.10" font-size="10.8" text-anchor="middle" stroke="#000" stroke-width="0.18" textLength="23.20" lengthAdjust="spacingAndGlyphs">4700</text>
<line x1="883.8" y1="432.2" x2="883.8" y2="435.7" stroke="#333" stroke-width="1"/>
<text x="883.78" y="448.10" font-size="10.8" text-anchor="middle" stroke="#000" stroke-width="0.18" textLength="23.20" lengthAdjust="spacingAndGlyphs">4800</text>
<line x1="943.0" y1="432.2" x2="943.0" y2="435.7" stroke="#333" stroke-width="1"/>
<text x="943.04" y="448.10" font-size="10.8" text-anchor="middle" stroke="#000" stroke-width="0.18" textLength="23.20" lengthAdjust="spacingAndGlyphs">4900</text>
<line x1="1002.3" y1="432.2" x2="1002.3" y2="435.7" stroke="#333" stroke-width="1"/>
<text x="1002.30" y="448.10" font-size="10.8" text-anchor="middle" stroke="#000" stroke-width="0.18" textLength="23.20" lengthAdjust="spacingAndGlyphs">5000</text>
<line x1="1061.6" y1="432.2" x2="1061.6" y2="435.7" stroke="#333" stroke-width="1"/>
<text x="1061.56" y="448.10" font-size="10.8" text-anchor="middle" stroke="#000" stroke-width="0.18" textLength="23.20" lengthAdjust="spacingAndGlyphs">5100</text>
<line x1="1120.8" y1="432.2" x2="1120.8" y2="435.7" stroke="#333" stroke-width="1"/>
<text x="1120.82" y="448.10" font-size="10.8" text-anchor="middle" stroke="#000" stroke-width="0.18" textLength="23.20" lengthAdjust="spacingAndGlyphs">5200</text>
<line x1="1180.1" y1="432.2" x2="1180.1" y2="435.7" stroke="#333" stroke-width="1"/>
<text x="1180.08" y="448.10" font-size="10.8" text-anchor="middle" stroke="#000" stroke-width="0.18" textLength="23.20" lengthAdjust="spacingAndGlyphs">5300</text>
<line x1="1239.3" y1="432.2" x2="1239.3" y2="435.7" stroke="#333" stroke-width="1"/>
<text x="1239.34" y="448.10" font-size="10.8" text-anchor="middle" stroke="#000" stroke-width="0.18" textLength="23.20" lengthAdjust="spacingAndGlyphs">5400</text>
<line x1="1298.6" y1="432.2" x2="1298.6" y2="435.7" stroke="#333" stroke-width="1"/>
<text x="1298.60" y="448.10" font-size="10.8" text-anchor="middle" stroke="#000" stroke-width="0.18" textLength="23.20" lengthAdjust="spacingAndGlyphs">5500</text>
<text x="113.50" y="346.40" font-size="10.8" stroke="#000" stroke-width="0.18">e<tspan dy="-4" font-size="7">−17</tspan><tspan dy="4">x2<tspan font-style="italic">Å</tspan></tspan></text>
<text transform="translate(150.8,320.3) rotate(90)" font-size="10.5" fill="#ffa500" textLength="15.7" lengthAdjust="spacingAndGlyphs">CIV</text>
<text transform="translate(150.8,343.2) rotate(90)" font-size="10" fill="#ffa500">{</text>
<text transform="translate(321.1,320.0) rotate(90)" font-size="10.5" fill="#ff0000" textLength="13.1" lengthAdjust="spacingAndGlyphs">NV</text>
<text transform="translate(321.1,342.7) rotate(90)" font-size="10" fill="#ff0000">{</text>
<text transform="translate(363.5,325.0) rotate(90)" font-size="10.5" fill="#ff0000" textLength="14.0" lengthAdjust="spacingAndGlyphs">SiII</text>
<text transform="translate(363.5,342.7) rotate(90)" font-size="10" fill="#ff0000">{</text>
<text transform="translate(406.7,320.7) rotate(90)" font-size="10.5" fill="#8a2be2" textLength="18.2" lengthAdjust="spacingAndGlyphs">HeII</text>
<text transform="translate(406.7,342.7) rotate(90)" font-size="10" fill="#8a2be2">{</text>
<text transform="translate(611.2,320.3) rotate(90)" font-size="10.5" fill="#ff0000" textLength="20.4" lengthAdjust="spacingAndGlyphs">SiIV</text>
<text transform="translate(611.2,342.7) rotate(90)" font-size="10" fill="#ff0000">{</text>
<text transform="translate(641.5,282.6) rotate(90)" font-size="10.5" fill="#ffa500" textLength="15.7" lengthAdjust="spacingAndGlyphs">CIII</text>
<text transform="translate(641.5,299.2) rotate(90)" font-size="10" fill="#ffa500">{</text>
<text transform="translate(642.3,328.0) rotate(90)" font-size="10.5" fill="#008000" textLength="12.7" lengthAdjust="spacingAndGlyphs">Hγ</text>
<text transform="translate(642.3,342.7) rotate(90)" font-size="10" fill="#008000">{</text>
<text transform="translate(763.3,323.5) rotate(90)" font-size="10.5" fill="#800080" textLength="14.1" lengthAdjust="spacingAndGlyphs">CII</text>
<text transform="translate(763.3,342.7) rotate(90)" font-size="10" fill="#800080">{</text>
<text transform="translate(795.0,323.5) rotate(90)" font-size="10.5" fill="#8a2be2" textLength="17.2" lengthAdjust="spacingAndGlyphs">CIII</text>
<text transform="translate(795.0,342.7) rotate(90)" font-size="10" fill="#8a2be2">{</text>
<text transform="translate(891.0,320.0) rotate(90)" font-size="10.5" fill="#ff0000" textLength="17.6" lengthAdjust="spacingAndGlyphs">CIV</text>
<text transform="translate(891.0,342.7) rotate(90)" font-size="10" fill="#ff0000">{</text>
<text transform="translate(956.5,327.0) rotate(90)" font-size="10.5" fill="#008000" textLength="13.0" lengthAdjust="spacingAndGlyphs">Hβ</text>
<text transform="translate(956.5,343.2) rotate(90)" font-size="10" fill="#008000">{</text>
<text transform="translate(1019.3,280.9) rotate(90)" font-size="10.5" fill="#ff00ff" textLength="14.8" lengthAdjust="spacingAndGlyphs">OII</text>
<text transform="translate(1019.3,299.2) rotate(90)" font-size="10" fill="#ff00ff">{</text>
<text transform="translate(1015.1,322.9) rotate(90)" font-size="10.5" fill="#008000" textLength="15.7" lengthAdjust="spacingAndGlyphs">OIII</text>
<text transform="translate(1015.1,343.2) rotate(90)" font-size="10" fill="#008000">{</text>
<text transform="translate(1043.5,323.0) rotate(90)" font-size="10.5" fill="#008000" textLength="15.6" lengthAdjust="spacingAndGlyphs">OIII</text>
<text transform="translate(1043.5,343.2) rotate(90)" font-size="10" fill="#008000">{</text>
<text transform="translate(1058.0,320.0) rotate(90)" font-size="10.5" fill="#ff0000" textLength="18.6" lengthAdjust="spacingAndGlyphs">HeII</text>
<text transform="translate(1058.0,343.2) rotate(90)" font-size="10" fill="#ff0000">{</text>
<text transform="translate(1209.3,322.9) rotate(90)" font-size="10.5" fill="#ffa500" textLength="14.2" lengthAdjust="spacingAndGlyphs">CII</text>
<text transform="translate(1209.3,343.2) rotate(90)" font-size="10" fill="#ffa500">{</text>
<rect x="545.7" y="450.2" width="17.4" height="6" fill="#ff0000"/>
<text x="569.70" y="456.30" font-size="8.5" fill="#555" stroke="#555" stroke-width="0.18" textLength="13.70" lengthAdjust="spacingAndGlyphs">Lyα</text>
<rect x="599.9" y="450.2" width="17.4" height="6" fill="#008000"/>
<text x="623.40" y="456.30" font-size="8.5" fill="#555" stroke="#555" stroke-width="0.18" textLength="10.60" lengthAdjust="spacingAndGlyphs">OII</text>
<rect x="653.1" y="450.2" width="17.4" height="6" fill="#8a2be2"/>
<text x="676.00" y="456.30" font-size="8.5" fill="#555" stroke="#555" stroke-width="0.18" textLength="13.00" lengthAdjust="spacingAndGlyphs">CIV</text>
<rect x="708" y="450.2" width="17.4" height="6" fill="#800080"/>
<text x="730.90" y="456.30" font-size="8.5" fill="#555" stroke="#555" stroke-width="0.18" textLength="12.50" lengthAdjust="spacingAndGlyphs">CIII</text>
<rect x="759.4" y="450.2" width="17.4" height="6" fill="#ff00ff"/>
<text x="782.30" y="456.30" font-size="8.5" fill="#555" stroke="#555" stroke-width="0.18" textLength="16.40" lengthAdjust="spacingAndGlyphs">MgII</text>
<rect x="815.4" y="450.2" width="17.4" height="6" fill="#ffa500"/>
<text x="838.30" y="456.30" font-size="8.5" fill="#555" stroke="#555" stroke-width="0.18" textLength="14.80" lengthAdjust="spacingAndGlyphs">HeII</text>
<rect x="1048" y="60.6" width="251.3" height="150.7" fill="#fff" stroke="#333" stroke-width="1"/>
<line x1="1048" y1="204.3" x2="1299.3" y2="204.3" stroke="#555" stroke-width="1"/>
<path d="M1068.5,144.8 L1069.7,144.8 L1070.8,144.8 L1072.0,144.8 L1073.2,144.8 L1074.3,144.8 L1075.5,144.8 L1076.6,144.8 L1077.8,144.8 L1079.0,144.8 L1080.1,144.8 L1081.3,144.8 L1082.5,144.8 L1083.6,144.8 L1084.8,144.8 L1086.0,144.8 L1087.1,144.8 L1088.3,144.8 L1089.5,144.8 L1090.6,144.8 L1091.8,144.8 L1093.0,144.8 L1094.1,144.8 L1095.3,144.8 L1096.5,144.8 L1097.6,144.8 L1098.8,144.8 L1100.0,144.8 L1101.1,144.8 L1102.3,144.8 L1103.5,144.8 L1104.6,144.8 L1105.8,144.8 L1107.0,144.8 L1108.1,144.8 L1109.3,144.8 L1110.4,144.8 L1111.6,144.8 L1112.8,144.8 L1113.9,144.8 L1115.1,144.8 L1116.3,144.8 L1117.4,144.8 L1118.6,144.8 L1119.8,144.8 L1120.9,144.8 L1122.1,144.8 L1123.3,144.8 L1124.4,144.8 L1125.6,144.8 L1126.8,144.8 L1127.9,144.8 L1129.1,144.8 L1130.3,144.8 L1131.4,144.8 L1132.6,144.8 L1133.8,144.8 L1134.9,144.8 L1136.1,144.8 L1137.3,144.8 L1138.4,144.8 L1139.6,144.8 L1140.8,144.7 L1141.9,144.7 L1143.1,144.6 L1144.2,144.5 L1145.4,144.4 L1146.6,144.2 L1147.7,144.0 L1148.9,143.7 L1150.1,143.3 L1151.2,142.7 L1152.4,142.0 L1153.6,141.2 L1154.7,140.1 L1155.9,138.9 L1157.1,137.4 L1158.2,135.6 L1159.4,133.6 L1160.6,131.3 L1161.7,128.7 L1162.9,126.0 L1164.1,123.0 L1165.2,120.0 L1166.4,116.8 L1167.6,113.7 L1168.7,110.7 L1169.9,107.9 L1171.1,105.4 L1172.2,103.3 L1173.4,101.7 L1174.6,100.6 L1175.7,100.0 L1176.9,100.1 L1178.0,100.8 L1179.2,102.0 L1180.4,103.7 L1181.5,105.9 L1182.7,108.5 L1183.9,111.3 L1185.0,114.3 L1186.2,117.4 L1187.4,120.6 L1188.5,123.6 L1189.7,126.6 L1190.9,129.3 L1192.0,131.8 L1193.2,134.0 L1194.4,136.0 L1195.5,137.7 L1196.7,139.1 L1197.9,140.4 L1199.0,141.4 L1200.2,142.2 L1201.4,142.8 L1202.5,143.3 L1203.7,143.7 L1204.9,144.0 L1206.0,144.3 L1207.2,144.4 L1208.3,144.6 L1209.5,144.6 L1210.7,144.7 L1211.8,144.7 L1213.0,144.8 L1214.2,144.8 L1215.3,144.8 L1216.5,144.8 L1217.7,144.8 L1218.8,144.8 L1220.0,144.8 L1221.2,144.8 L1222.3,144.8 L1223.5,144.8 L1224.7,144.8 L1225.8,144.8 L1227.0,144.8 L1228.2,144.8 L1229.3,144.8 L1230.5,144.8 L1231.7,144.8 L1232.8,144.8 L1234.0,144.8 L1235.2,144.8 L1236.3,144.8 L1237.5,144.8 L1238.7,144.8 L1239.8,144.8 L1241.0,144.8 L1242.1,144.8 L1243.3,144.8 L1244.5,144.8 L1245.6,144.8 L1246.8,144.8 L1248.0,144.8 L1249.1,144.8 L1250.3,144.8 L1251.5,144.8 L1252.6,144.8 L1253.8,144.8 L1255.0,144.8 L1256.1,144.8 L1257.3,144.8 L1258.5,144.8 L1259.6,144.8 L1260.8,144.8 L1262.0,144.8 L1263.1,144.8 L1264.3,144.8 L1265.5,144.8 L1266.6,144.8 L1267.8,144.8 L1269.0,144.8 L1270.1,144.8 L1271.3,144.8 L1272.5,144.8 L1273.6,144.8 L1274.8,144.8 L1275.9,144.8 L1277.1,144.8 L1278.3,144.8 L1279.4,144.8 L1280.6,144.8 L1281.8,144.8 L1282.9,144.8 L1284.1,144.8 L1285.3,144.8 L1286.4,144.8 L1287.6,144.8" fill="none" stroke="#3a3a3a" stroke-width="1.5"/>
<line x1="1059.2" y1="107.3" x2="1059.2" y2="138.8" stroke="#1f77b4" stroke-width="1.5"/>
<circle cx="1059.2" cy="123.4" r="1.9" fill="#1f77b4"/>
<line x1="1063.8" y1="112.9" x2="1063.8" y2="145.9" stroke="#1f77b4" stroke-width="1.5"/>
<circle cx="1063.8" cy="129.1" r="1.9" fill="#1f77b4"/>
<line x1="1068.5" y1="122.6" x2="1068.5" y2="155.6" stroke="#1f77b4" stroke-width="1.5"/>
<circle cx="1068.5" cy="138.8" r="1.9" fill="#1f77b4"/>
<line x1="1073.2" y1="126.7" x2="1073.2" y2="159.8" stroke="#1f77b4" stroke-width="1.5"/>
<circle cx="1073.2" cy="142.8" r="1.9" fill="#1f77b4"/>
<line x1="1077.8" y1="151.4" x2="1077.8" y2="182.4" stroke="#1f77b4" stroke-width="1.5"/>
<circle cx="1077.8" cy="166.6" r="1.9" fill="#1f77b4"/>
<line x1="1082.5" y1="174.2" x2="1082.5" y2="204.9" stroke="#1f77b4" stroke-width="1.5"/>
<circle cx="1082.5" cy="189.7" r="1.9" fill="#1f77b4"/>
<line x1="1087.1" y1="132.3" x2="1087.1" y2="165.3" stroke="#1f77b4" stroke-width="1.5"/>
<circle cx="1087.1" cy="148.8" r="1.9" fill="#1f77b4"/>
<line x1="1091.8" y1="113.7" x2="1091.8" y2="148.5" stroke="#1f77b4" stroke-width="1.5"/>
<circle cx="1091.8" cy="131.5" r="1.9" fill="#1f77b4"/>
<line x1="1096.5" y1="137.2" x2="1096.5" y2="171.1" stroke="#1f77b4" stroke-width="1.5"/>
<circle cx="1096.5" cy="154.4" r="1.9" fill="#1f77b4"/>
<line x1="1101.1" y1="149.3" x2="1101.1" y2="181.6" stroke="#1f77b4" stroke-width="1.5"/>
<circle cx="1101.1" cy="165.3" r="1.9" fill="#1f77b4"/>
<line x1="1105.8" y1="132.3" x2="1105.8" y2="162.2" stroke="#1f77b4" stroke-width="1.5"/>
<circle cx="1105.8" cy="147.2" r="1.9" fill="#1f77b4"/>
<line x1="1110.4" y1="157.4" x2="1110.4" y2="186.3" stroke="#1f77b4" stroke-width="1.5"/>
<circle cx="1110.4" cy="171.9" r="1.9" fill="#1f77b4"/>
<line x1="1115.1" y1="144.4" x2="1115.1" y2="175.0" stroke="#1f77b4" stroke-width="1.5"/>
<circle cx="1115.1" cy="160.1" r="1.9" fill="#1f77b4"/>
<line x1="1119.8" y1="113.7" x2="1119.8" y2="145.2" stroke="#1f77b4" stroke-width="1.5"/>
<circle cx="1119.8" cy="129.1" r="1.9" fill="#1f77b4"/>
<line x1="1124.4" y1="92.7" x2="1124.4" y2="125.9" stroke="#1f77b4" stroke-width="1.5"/>
<circle cx="1124.4" cy="109.4" r="1.9" fill="#1f77b4"/>
<line x1="1129.1" y1="129.1" x2="1129.1" y2="159.8" stroke="#1f77b4" stroke-width="1.5"/>
<circle cx="1129.1" cy="144.4" r="1.9" fill="#1f77b4"/>
<line x1="1133.8" y1="130.7" x2="1133.8" y2="160.6" stroke="#1f77b4" stroke-width="1.5"/>
<circle cx="1133.8" cy="145.9" r="1.9" fill="#1f77b4"/>
<line x1="1138.4" y1="142.0" x2="1138.4" y2="169.5" stroke="#1f77b4" stroke-width="1.5"/>
<circle cx="1138.4" cy="155.6" r="1.9" fill="#1f77b4"/>
<line x1="1143.1" y1="121.8" x2="1143.1" y2="150.9" stroke="#1f77b4" stroke-width="1.5"/>
<circle cx="1143.1" cy="136.7" r="1.9" fill="#1f77b4"/>
<line x1="1147.7" y1="120.2" x2="1147.7" y2="149.3" stroke="#1f77b4" stroke-width="1.5"/>
<circle cx="1147.7" cy="134.7" r="1.9" fill="#1f77b4"/>
<line x1="1152.4" y1="145.2" x2="1152.4" y2="172.7" stroke="#1f77b4" stroke-width="1.5"/>
<circle cx="1152.4" cy="159.0" r="1.9" fill="#1f77b4"/>
<line x1="1157.1" y1="133.1" x2="1157.1" y2="161.4" stroke="#1f77b4" stroke-width="1.5"/>
<circle cx="1157.1" cy="147.2" r="1.9" fill="#1f77b4"/>
<line x1="1161.7" y1="105.7" x2="1161.7" y2="133.9" stroke="#1f77b4" stroke-width="1.5"/>
<circle cx="1161.7" cy="120.2" r="1.9" fill="#1f77b4"/>
<line x1="1166.4" y1="91.1" x2="1166.4" y2="121.0" stroke="#1f77b4" stroke-width="1.5"/>
<circle cx="1166.4" cy="106.0" r="1.9" fill="#1f77b4"/>
<line x1="1171.1" y1="67.7" x2="1171.1" y2="98.4" stroke="#1f77b4" stroke-width="1.5"/>
<circle cx="1171.1" cy="83.0" r="1.9" fill="#1f77b4"/>
<line x1="1175.7" y1="93.5" x2="1175.7" y2="124.2" stroke="#1f77b4" stroke-width="1.5"/>
<circle cx="1175.7" cy="109.4" r="1.9" fill="#1f77b4"/>
<line x1="1180.4" y1="95.2" x2="1180.4" y2="125.0" stroke="#1f77b4" stroke-width="1.5"/>
<circle cx="1180.4" cy="110.5" r="1.9" fill="#1f77b4"/>
<line x1="1185.0" y1="90.3" x2="1185.0" y2="121.0" stroke="#1f77b4" stroke-width="1.5"/>
<circle cx="1185.0" cy="105.7" r="1.9" fill="#1f77b4"/>
<line x1="1189.7" y1="95.2" x2="1189.7" y2="125.9" stroke="#1f77b4" stroke-width="1.5"/>
<circle cx="1189.7" cy="110.5" r="1.9" fill="#1f77b4"/>
<line x1="1194.4" y1="118.6" x2="1194.4" y2="147.7" stroke="#1f77b4" stroke-width="1.5"/>
<circle cx="1194.4" cy="133.1" r="1.9" fill="#1f77b4"/>
<line x1="1199.0" y1="129.1" x2="1199.0" y2="159.5" stroke="#1f77b4" stroke-width="1.5"/>
<circle cx="1199.0" cy="144.4" r="1.9" fill="#1f77b4"/>
<line x1="1203.7" y1="117.8" x2="1203.7" y2="145.9" stroke="#1f77b4" stroke-width="1.5"/>
<circle cx="1203.7" cy="132.0" r="1.9" fill="#1f77b4"/>
<line x1="1208.3" y1="118.6" x2="1208.3" y2="147.7" stroke="#1f77b4" stroke-width="1.5"/>
<circle cx="1208.3" cy="133.1" r="1.9" fill="#1f77b4"/>
<line x1="1213.0" y1="114.5" x2="1213.0" y2="144.4" stroke="#1f77b4" stroke-width="1.5"/>
<circle cx="1213.0" cy="129.4" r="1.9" fill="#1f77b4"/>
<line x1="1217.7" y1="119.4" x2="1217.7" y2="148.5" stroke="#1f77b4" stroke-width="1.5"/>
<circle cx="1217.7" cy="133.9" r="1.9" fill="#1f77b4"/>
<line x1="1222.3" y1="122.6" x2="1222.3" y2="150.9" stroke="#1f77b4" stroke-width="1.5"/>
<circle cx="1222.3" cy="136.7" r="1.9" fill="#1f77b4"/>
<line x1="1227.0" y1="131.5" x2="1227.0" y2="159.0" stroke="#1f77b4" stroke-width="1.5"/>
<circle cx="1227.0" cy="144.8" r="1.9" fill="#1f77b4"/>
<line x1="1231.7" y1="96.8" x2="1231.7" y2="124.2" stroke="#1f77b4" stroke-width="1.5"/>
<circle cx="1231.7" cy="110.5" r="1.9" fill="#1f77b4"/>
<line x1="1236.3" y1="99.2" x2="1236.3" y2="127.5" stroke="#1f77b4" stroke-width="1.5"/>
<circle cx="1236.3" cy="113.7" r="1.9" fill="#1f77b4"/>
<line x1="1241.0" y1="100.0" x2="1241.0" y2="128.3" stroke="#1f77b4" stroke-width="1.5"/>
<circle cx="1241.0" cy="113.7" r="1.9" fill="#1f77b4"/>
<line x1="1245.6" y1="117.0" x2="1245.6" y2="144.4" stroke="#1f77b4" stroke-width="1.5"/>
<circle cx="1245.6" cy="130.7" r="1.9" fill="#1f77b4"/>
<line x1="1250.3" y1="108.1" x2="1250.3" y2="135.5" stroke="#1f77b4" stroke-width="1.5"/>
<circle cx="1250.3" cy="121.5" r="1.9" fill="#1f77b4"/>
<line x1="1255.0" y1="106.0" x2="1255.0" y2="133.9" stroke="#1f77b4" stroke-width="1.5"/>
<circle cx="1255.0" cy="119.9" r="1.9" fill="#1f77b4"/>
<line x1="1259.6" y1="131.5" x2="1259.6" y2="159.8" stroke="#1f77b4" stroke-width="1.5"/>
<circle cx="1259.6" cy="145.6" r="1.9" fill="#1f77b4"/>
<line x1="1264.3" y1="131.5" x2="1264.3" y2="158.2" stroke="#1f77b4" stroke-width="1.5"/>
<circle cx="1264.3" cy="145.2" r="1.9" fill="#1f77b4"/>
<line x1="1269.0" y1="125.4" x2="1269.0" y2="153.3" stroke="#1f77b4" stroke-width="1.5"/>
<circle cx="1269.0" cy="139.3" r="1.9" fill="#1f77b4"/>
<line x1="1273.6" y1="135.5" x2="1273.6" y2="162.2" stroke="#1f77b4" stroke-width="1.5"/>
<circle cx="1273.6" cy="149.0" r="1.9" fill="#1f77b4"/>
<line x1="1278.3" y1="169.5" x2="1278.3" y2="196.8" stroke="#1f77b4" stroke-width="1.5"/>
<circle cx="1278.3" cy="182.8" r="1.9" fill="#1f77b4"/>
<line x1="1282.9" y1="143.6" x2="1282.9" y2="169.5" stroke="#1f77b4" stroke-width="1.5"/>
<circle cx="1282.9" cy="156.4" r="1.9" fill="#1f77b4"/>
<line x1="1287.6" y1="130.7" x2="1287.6" y2="156.4" stroke="#1f77b4" stroke-width="1.5"/>
<circle cx="1287.6" cy="143.6" r="1.9" fill="#1f77b4"/>
<line x1="1044.5" y1="204.3" x2="1048" y2="204.3" stroke="#333" stroke-width="1"/>
<text x="1042.00" y="207.80" font-size="10.8" text-anchor="end" stroke="#000" stroke-width="0.18">0</text>
<line x1="1044.5" y1="172.5" x2="1048" y2="172.5" stroke="#333" stroke-width="1"/>
<text x="1042.00" y="176.00" font-size="10.8" text-anchor="end" stroke="#000" stroke-width="0.18">2</text>
<line x1="1044.5" y1="140.7" x2="1048" y2="140.7" stroke="#333" stroke-width="1"/>
<text x="1042.00" y="144.20" font-size="10.8" text-anchor="end" stroke="#000" stroke-width="0.18">4</text>
<line x1="1044.5" y1="108.9" x2="1048" y2="108.9" stroke="#333" stroke-width="1"/>
<text x="1042.00" y="112.40" font-size="10.8" text-anchor="end" stroke="#000" stroke-width="0.18">6</text>
<line x1="1044.5" y1="77.1" x2="1048" y2="77.1" stroke="#333" stroke-width="1"/>
<text x="1042.00" y="80.60" font-size="10.8" text-anchor="end" stroke="#000" stroke-width="0.18">8</text>
<line x1="1091.8" y1="211.3" x2="1091.8" y2="214.8" stroke="#333" stroke-width="1"/>
<text x="1091.80" y="224.30" font-size="10.8" text-anchor="middle" stroke="#000" stroke-width="0.18" textLength="21.20" lengthAdjust="spacingAndGlyphs">3740</text>
<line x1="1138.4" y1="211.3" x2="1138.4" y2="214.8" stroke="#333" stroke-width="1"/>
<text x="1138.42" y="224.30" font-size="10.8" text-anchor="middle" stroke="#000" stroke-width="0.18" textLength="21.20" lengthAdjust="spacingAndGlyphs">3760</text>
<line x1="1185.0" y1="211.3" x2="1185.0" y2="214.8" stroke="#333" stroke-width="1"/>
<text x="1185.04" y="224.30" font-size="10.8" text-anchor="middle" stroke="#000" stroke-width="0.18" textLength="21.20" lengthAdjust="spacingAndGlyphs">3780</text>
<line x1="1231.7" y1="211.3" x2="1231.7" y2="214.8" stroke="#333" stroke-width="1"/>
<text x="1231.66" y="224.30" font-size="10.8" text-anchor="middle" stroke="#000" stroke-width="0.18" textLength="21.20" lengthAdjust="spacingAndGlyphs">3800</text>
<line x1="1278.3" y1="211.3" x2="1278.3" y2="214.8" stroke="#333" stroke-width="1"/>
<text x="1278.28" y="224.30" font-size="10.8" text-anchor="middle" stroke="#000" stroke-width="0.18" textLength="21.20" lengthAdjust="spacingAndGlyphs">3820</text>
<text x="1049.50" y="71.20" font-size="10.8" stroke="#000" stroke-width="0.18">e<tspan dy="-4" font-size="7">−17</tspan><tspan dy="4">x2<tspan font-style="italic">Å</tspan></tspan></text>
<text x="499.50" y="41.80" font-size="8.2" stroke="#000" stroke-width="0.18" textLength="31.20" lengthAdjust="spacingAndGlyphs">2D Spec</text>
<text x="591.50" y="41.70" font-size="8.2" stroke="#000" stroke-width="0.18" textLength="34.50" lengthAdjust="spacingAndGlyphs">Pixel Flat</text>
<text x="681.50" y="42.00" font-size="8.2" stroke="#000" stroke-width="0.18" textLength="38.50" lengthAdjust="spacingAndGlyphs">Smoothed</text>
<text x="748.60" y="61.10" font-size="8.2" stroke="#000" stroke-width="0.18" textLength="36.50" lengthAdjust="spacingAndGlyphs">Weighted</text>
<text x="748.60" y="69.80" font-size="8.2" stroke="#000" stroke-width="0.18" textLength="16.80" lengthAdjust="spacingAndGlyphs">Sum</text>
<rect x="466" y="46" width="283" height="40" fill="#000"/>
<rect x="469" y="47.7" width="277.8" height="36.6" fill="#fff"/>
<rect x="472.0" y="47.7" width="86.6" height="36.6" fill="url(#g1)" filter="url(#f2)"/>
<rect x="657.7" y="47.7" width="86.9" height="36.6" fill="url(#g3)" filter="url(#f4)"/>
<g clip-path="url(#wsc)"><path d="M655,80 C670,77 685,76 695,76.5 C705,74 715,74 722,77 C730,76 738,75 748,78 L748,90 L655,90 Z" fill="#000" filter="url(#sblur)"/><ellipse cx="705" cy="66" rx="9" ry="4" fill="#555" filter="url(#sblur)" opacity="0.6"/><ellipse cx="733" cy="66" rx="6" ry="4" fill="#555" filter="url(#sblur)" opacity="0.6"/></g>
<rect x="466" y="94" width="283" height="40" fill="#fff"/>
<rect x="470.0" y="95.8" width="90.0" height="36.4" fill="url(#g5)" filter="url(#f6)"/>
<rect x="564" y="95.8" width="89.7" height="36.4" fill="#808080"/>
<rect x="656.6" y="95.8" width="89.1" height="36.4" fill="url(#g7)" filter="url(#f8)"/>
<text x="446.60" y="105.70" font-size="8.2" stroke="#000" stroke-width="0.18" textLength="16.30" lengthAdjust="spacingAndGlyphs">0.39</text>
<text x="446.60" y="114.35" font-size="8.2" stroke="#000" stroke-width="0.18" textLength="16.30" lengthAdjust="spacingAndGlyphs">2.28</text>
<text x="446.60" y="123.00" font-size="8.2" stroke="#000" stroke-width="0.18" textLength="12.20" lengthAdjust="spacingAndGlyphs">011</text>
<text x="750.90" y="99.70" font-size="6.0" textLength="14.80" lengthAdjust="spacingAndGlyphs">0.22"</text>
<text x="750.90" y="106.90" font-size="6.0" textLength="29.10" lengthAdjust="spacingAndGlyphs">(151, 926)</text>
<text x="750.90" y="115.20" font-size="6.0" textLength="28.80" lengthAdjust="spacingAndGlyphs">20210210</text>
<text x="750.90" y="121.70" font-size="6.0" textLength="24.00" lengthAdjust="spacingAndGlyphs">v018_03</text>
<text x="750.90" y="128.60" font-size="6.0" textLength="34.00" lengthAdjust="spacingAndGlyphs">423_LU_102</text>
<rect x="466" y="134" width="283" height="40" fill="#fff"/>
<rect x="470.0" y="135.8" width="90.0" height="36.4" fill="url(#g9)" filter="url(#f10)"/>
<rect x="564" y="135.8" width="89.7" height="36.4" fill="#808080"/>
<rect x="656.6" y="135.8" width="89.1" height="36.4" fill="url(#g11)" filter="url(#f12)"/>
<g clip-path="url(#rsc1)"><path d="M655,170 C668,167 675,163 684,167 C692,169 696,162 706,163 C714,164 718,169 724,167 C730,164 736,165 748,170 L748,179 L655,179 Z" fill="#000" filter="url(#sblur)"/></g>
<text x="446.60" y="145.70" font-size="8.2" stroke="#000" stroke-width="0.18" textLength="16.30" lengthAdjust="spacingAndGlyphs">0.19</text>
<text x="446.60" y="154.35" font-size="8.2" stroke="#000" stroke-width="0.18" textLength="16.30" lengthAdjust="spacingAndGlyphs">1.24</text>
<text x="446.60" y="163.00" font-size="8.2" stroke="#000" stroke-width="0.18" textLength="12.20" lengthAdjust="spacingAndGlyphs">030</text>
<text x="750.90" y="139.70" font-size="6.0" textLength="14.80" lengthAdjust="spacingAndGlyphs">1.48"</text>
<text x="750.90" y="146.90" font-size="6.0" textLength="29.10" lengthAdjust="spacingAndGlyphs">(149, 757)</text>
<text x="750.90" y="155.20" font-size="6.0" textLength="28.80" lengthAdjust="spacingAndGlyphs">20210210</text>
<text x="750.90" y="161.70" font-size="6.0" textLength="24.00" lengthAdjust="spacingAndGlyphs">v018_02</text>
<text x="750.90" y="168.60" font-size="6.0" textLength="34.00" lengthAdjust="spacingAndGlyphs">423_LU_083</text>
<rect x="466" y="174" width="283" height="40" fill="#fff"/>
<rect x="470.0" y="175.8" width="90.0" height="36.4" fill="url(#g13)" filter="url(#f14)"/>
<rect x="564" y="175.8" width="89.7" height="36.4" fill="#808080"/>
<rect x="656.6" y="175.8" width="89.1" height="36.4" fill="url(#g15)" filter="url(#f16)"/>
<text x="446.60" y="185.70" font-size="8.2" stroke="#000" stroke-width="0.18" textLength="16.30" lengthAdjust="spacingAndGlyphs">0.14</text>
<text x="446.60" y="194.35" font-size="8.2" stroke="#000" stroke-width="0.18" textLength="16.30" lengthAdjust="spacingAndGlyphs">1.12</text>
<text x="446.60" y="203.00" font-size="8.2" stroke="#000" stroke-width="0.18" textLength="12.20" lengthAdjust="spacingAndGlyphs">011</text>
<text x="750.90" y="179.70" font-size="6.0" textLength="14.80" lengthAdjust="spacingAndGlyphs">1.59"</text>
<text x="750.90" y="186.90" font-size="6.0" textLength="29.10" lengthAdjust="spacingAndGlyphs">(151, 926)</text>
<text x="750.90" y="195.20" font-size="6.0" textLength="28.80" lengthAdjust="spacingAndGlyphs">20210210</text>
<text x="750.90" y="201.70" font-size="6.0" textLength="24.00" lengthAdjust="spacingAndGlyphs">v018_01</text>
<text x="750.90" y="208.60" font-size="6.0" textLength="34.00" lengthAdjust="spacingAndGlyphs">423_LU_102</text>
<rect x="466" y="214" width="283" height="40" fill="#fff"/>
<rect x="470.0" y="215.8" width="90.0" height="36.4" fill="url(#g17)" filter="url(#f18)"/>
<rect x="564" y="215.8" width="89.7" height="36.4" fill="#808080"/>
<rect x="656.6" y="215.8" width="89.1" height="36.4" fill="url(#g19)" filter="url(#f20)"/>
<g clip-path="url(#rsc3)"><path d="M655,245 C675,243 690,242 700,243 C715,242 730,243 748,245 L748,259 L655,259 Z" fill="#000" filter="url(#sblur)"/></g>
<text x="446.60" y="225.70" font-size="8.2" stroke="#000" stroke-width="0.18" textLength="16.30" lengthAdjust="spacingAndGlyphs">0.10</text>
<text x="446.60" y="234.35" font-size="8.2" stroke="#000" stroke-width="0.18" textLength="16.30" lengthAdjust="spacingAndGlyphs">1.34</text>
<text x="446.60" y="243.00" font-size="8.2" stroke="#000" stroke-width="0.18" textLength="12.20" lengthAdjust="spacingAndGlyphs">031</text>
<text x="750.90" y="219.70" font-size="6.0" textLength="14.80" lengthAdjust="spacingAndGlyphs">1.29"</text>
<text x="750.90" y="226.90" font-size="6.0" textLength="29.10" lengthAdjust="spacingAndGlyphs">(149, 748)</text>
<text x="750.90" y="235.20" font-size="6.0" textLength="28.80" lengthAdjust="spacingAndGlyphs">20210210</text>
<text x="750.90" y="241.70" font-size="6.0" textLength="24.00" lengthAdjust="spacingAndGlyphs">v018_01</text>
<text x="750.90" y="248.60" font-size="6.0" textLength="34.00" lengthAdjust="spacingAndGlyphs">423_LU_082</text>
<rect x="467.5" y="94.9" width="279.8" height="38.2" fill="none" stroke="#0000ff" stroke-width="1.7"/>
<rect x="466" y="94" width="3" height="40" fill="#0000ff"/>
<rect x="745.8" y="94" width="3" height="40" fill="#0000ff"/>
<rect x="467.5" y="134.9" width="279.8" height="38.2" fill="none" stroke="#00ff00" stroke-width="1.7"/>
<rect x="466" y="134" width="3" height="40" fill="#00ff00"/>
<rect x="745.8" y="134" width="3" height="40" fill="#00ff00"/>
<rect x="467.5" y="174.9" width="279.8" height="38.2" fill="none" stroke="#ffa500" stroke-width="1.7"/>
<rect x="466" y="174" width="3" height="40" fill="#ffa500"/>
<rect x="745.8" y="174" width="3" height="40" fill="#ffa500"/>
<rect x="467.5" y="214.9" width="279.8" height="38.2" fill="none" stroke="#ff0000" stroke-width="1.7"/>
<rect x="466" y="214" width="3" height="40" fill="#ff0000"/>
<rect x="745.8" y="214" width="3" height="40" fill="#ff0000"/>
<text x="844.00" y="47.60" font-size="10.6" stroke="#000" stroke-width="0.18" textLength="42.50" lengthAdjust="spacingAndGlyphs">With Sky</text>
<text x="831.80" y="58.40" font-size="10.6" stroke="#000" stroke-width="0.18" textLength="67.00" lengthAdjust="spacingAndGlyphs">x, y: 151, 926</text>
<text x="934.80" y="47.60" font-size="10.6" stroke="#000" stroke-width="0.18" textLength="62.20" lengthAdjust="spacingAndGlyphs">Clean Image</text>
<text x="932.50" y="58.40" font-size="10.6" stroke="#000" stroke-width="0.18" textLength="67.00" lengthAdjust="spacingAndGlyphs">x, y: 151, 926</text>
<rect x="830.6" y="63.2" width="69.4" height="171.4" fill="#0000ee"/>
<rect x="832.9" y="65.5" width="64.8" height="166.8" fill="url(#skyg)" filter="url(#f21)"/>
<rect x="931.3" y="63.2" width="69.6" height="171.4" fill="#0000ee"/>
<rect x="933.6" y="65.5" width="65.0" height="166.8" fill="url(#g22)" filter="url(#f23)"/>
<text x="98.30" y="526.20" font-size="13.2" stroke="#000" stroke-width="0.18" textLength="91.40" lengthAdjust="spacingAndGlyphs">Fiber Positions</text>
<defs><clipPath id="fclip"><rect x="69.8" y="532.6" width="147.8" height="147.8"/></clipPath></defs>
<rect x="69.8" y="532.6" width="147.8" height="147.8" fill="rgb(252,252,252)"/>
<g clip-path="url(#fclip)" shape-rendering="crispEdges">
<rect x="77.8" y="540.6" width="4" height="4" fill="rgb(249,249,249)"/>
<rect x="81.8" y="540.6" width="4" height="4" fill="rgb(249,249,249)"/>
<rect x="85.8" y="540.6" width="4" height="4" fill="rgb(249,249,249)"/>
<rect x="89.8" y="540.6" width="4" height="4" fill="rgb(249,249,249)"/>
<rect x="93.8" y="540.6" width="4" height="4" fill="rgb(249,249,249)"/>
<rect x="97.8" y="540.6" width="4" height="4" fill="rgb(249,249,249)"/>
<rect x="101.8" y="540.6" width="4" height="4" fill="rgb(249,249,249)"/>
<rect x="105.8" y="540.6" width="4" height="4" fill="rgb(249,249,249)"/>
<rect x="109.8" y="540.6" width="4" height="4" fill="rgb(249,249,249)"/>
<rect x="113.8" y="540.6" width="4" height="4" fill="rgb(249,249,249)"/>
<rect x="117.8" y="540.6" width="4" height="4" fill="rgb(249,249,249)"/>
<rect x="121.8" y="540.6" width="4" height="4" fill="rgb(249,249,249)"/>
<rect x="69.8" y="544.6" width="4" height="4" fill="rgb(249,249,249)"/>
<rect x="73.8" y="544.6" width="4" height="4" fill="rgb(249,249,249)"/>
<rect x="77.8" y="544.6" width="4" height="4" fill="rgb(248,248,248)"/>
<rect x="81.8" y="544.6" width="4" height="4" fill="rgb(248,248,248)"/>
<rect x="85.8" y="544.6" width="4" height="4" fill="rgb(248,248,248)"/>
<rect x="89.8" y="544.6" width="4" height="4" fill="rgb(248,248,248)"/>
<rect x="93.8" y="544.6" width="4" height="4" fill="rgb(248,248,248)"/>
<rect x="97.8" y="544.6" width="4" height="4" fill="rgb(248,248,248)"/>
<rect x="101.8" y="544.6" width="4" height="4" fill="rgb(248,248,248)"/>
<rect x="105.8" y="544.6" width="4" height="4" fill="rgb(248,248,248)"/>
<rect x="109.8" y="544.6" width="4" height="4" fill="rgb(248,248,248)"/>
<rect x="113.8" y="544.6" width="4" height="4" fill="rgb(248,248,248)"/>
<rect x="117.8" y="544.6" width="4" height="4" fill="rgb(248,248,248)"/>
<rect x="121.8" y="544.6" width="4" height="4" fill="rgb(249,249,249)"/>
<rect x="125.8" y="544.6" width="4" height="4" fill="rgb(249,249,249)"/>
<rect x="129.8" y="544.6" width="4" height="4" fill="rgb(249,249,249)"/>
<rect x="133.8" y="544.6" width="4" height="4" fill="rgb(249,249,249)"/>
<rect x="69.8" y="548.6" width="4" height="4" fill="rgb(248,248,248)"/>
<rect x="73.8" y="548.6" width="4" height="4" fill="rgb(248,248,248)"/>
<rect x="77.8" y="548.6" width="4" height="4" fill="rgb(247,247,247)"/>
<rect x="81.8" y="548.6" width="4" height="4" fill="rgb(247,247,247)"/>
<rect x="85.8" y="548.6" width="4" height="4" fill="rgb(247,247,247)"/>
<rect x="89.8" y="548.6" width="4" height="4" fill="rgb(247,247,247)"/>
<rect x="93.8" y="548.6" width="4" height="4" fill="rgb(246,246,246)"/>
<rect x="97.8" y="548.6" width="4" height="4" fill="rgb(246,246,246)"/>
<rect x="101.8" y="548.6" width="4" height="4" fill="rgb(246,246,246)"/>
<rect x="105.8" y="548.6" width="4" height="4" fill="rgb(247,247,247)"/>
<rect x="109.8" y="548.6" width="4" height="4" fill="rgb(247,247,247)"/>
<rect x="113.8" y="548.6" width="4" height="4" fill="rgb(247,247,247)"/>
<rect x="117.8" y="548.6" width="4" height="4" fill="rgb(247,247,247)"/>
<rect x="121.8" y="548.6" width="4" height="4" fill="rgb(247,247,247)"/>
<rect x="125.8" y="548.6" width="4" height="4" fill="rgb(248,248,248)"/>
<rect x="129.8" y="548.6" width="4" height="4" fill="rgb(248,248,248)"/>
<rect x="133.8" y="548.6" width="4" height="4" fill="rgb(249,249,249)"/>
<rect x="137.8" y="548.6" width="4" height="4" fill="rgb(249,249,249)"/>
<rect x="141.8" y="548.6" width="4" height="4" fill="rgb(249,249,249)"/>
<rect x="69.8" y="552.6" width="4" height="4" fill="rgb(247,247,247)"/>
<rect x="73.8" y="552.6" width="4" height="4" fill="rgb(246,246,246)"/>
<rect x="77.8" y="552.6" width="4" height="4" fill="rgb(246,246,246)"/>
<rect x="81.8" y="552.6" width="4" height="4" fill="rgb(246,246,246)"/>
<rect x="85.8" y="552.6" width="4" height="4" fill="rgb(245,245,245)"/>
<rect x="89.8" y="552.6" width="4" height="4" fill="rgb(245,245,245)"/>
<rect x="93.8" y="552.6" width="4" height="4" fill="rgb(245,245,245)"/>
<rect x="97.8" y="552.6" width="4" height="4" fill="rgb(245,245,245)"/>
<rect x="101.8" y="552.6" width="4" height="4" fill="rgb(245,245,245)"/>
<rect x="105.8" y="552.6" width="4" height="4" fill="rgb(245,245,245)"/>
<rect x="109.8" y="552.6" width="4" height="4" fill="rgb(245,245,245)"/>
<rect x="113.8" y="552.6" width="4" height="4" fill="rgb(246,246,246)"/>
<rect x="117.8" y="552.6" width="4" height="4" fill="rgb(246,246,246)"/>
<rect x="121.8" y="552.6" width="4" height="4" fill="rgb(246,246,246)"/>
<rect x="125.8" y="552.6" width="4" height="4" fill="rgb(247,247,247)"/>
<rect x="129.8" y="552.6" width="4" height="4" fill="rgb(247,247,247)"/>
<rect x="133.8" y="552.6" width="4" height="4" fill="rgb(248,248,248)"/>
<rect x="137.8" y="552.6" width="4" height="4" fill="rgb(248,248,248)"/>
<rect x="141.8" y="552.6" width="4" height="4" fill="rgb(249,249,249)"/>
<rect x="145.8" y="552.6" width="4" height="4" fill="rgb(249,249,249)"/>
<rect x="69.8" y="556.6" width="4" height="4" fill="rgb(245,245,245)"/>
<rect x="73.8" y="556.6" width="4" height="4" fill="rgb(245,245,245)"/>
<rect x="77.8" y="556.6" width="4" height="4" fill="rgb(245,245,245)"/>
<rect x="81.8" y="556.6" width="4" height="4" fill="rgb(244,244,244)"/>
<rect x="85.8" y="556.6" width="4" height="4" fill="rgb(244,244,244)"/>
<rect x="89.8" y="556.6" width="4" height="4" fill="rgb(244,244,244)"/>
<rect x="93.8" y="556.6" width="4" height="4" fill="rgb(244,244,244)"/>
<rect x="97.8" y="556.6" width="4" height="4" fill="rgb(243,243,243)"/>
<rect x="101.8" y="556.6" width="4" height="4" fill="rgb(244,244,244)"/>
<rect x="105.8" y="556.6" width="4" height="4" fill="rgb(244,244,244)"/>
<rect x="109.8" y="556.6" width="4" height="4" fill="rgb(244,244,244)"/>
<rect x="113.8" y="556.6" width="4" height="4" fill="rgb(244,244,244)"/>
<rect x="117.8" y="556.6" width="4" height="4" fill="rgb(244,244,244)"/>
<rect x="121.8" y="556.6" width="4" height="4" fill="rgb(245,245,245)"/>
<rect x="125.8" y="556.6" width="4" height="4" fill="rgb(245,245,245)"/>
<rect x="129.8" y="556.6" width="4" height="4" fill="rgb(246,246,246)"/>
<rect x="133.8" y="556.6" width="4" height="4" fill="rgb(246,246,246)"/>
<rect x="137.8" y="556.6" width="4" height="4" fill="rgb(247,247,247)"/>
<rect x="141.8" y="556.6" width="4" height="4" fill="rgb(248,248,248)"/>
<rect x="145.8" y="556.6" width="4" height="4" fill="rgb(248,248,248)"/>
<rect x="149.8" y="556.6" width="4" height="4" fill="rgb(249,249,249)"/>
<rect x="153.8" y="556.6" width="4" height="4" fill="rgb(249,249,249)"/>
<rect x="69.8" y="560.6" width="4" height="4" fill="rgb(244,244,244)"/>
<rect x="73.8" y="560.6" width="4" height="4" fill="rgb(243,243,243)"/>
<rect x="77.8" y="560.6" width="4" height="4" fill="rgb(243,243,243)"/>
<rect x="81.8" y="560.6" width="4" height="4" fill="rgb(243,243,243)"/>
<rect x="85.8" y="560.6" width="4" height="4" fill="rgb(242,242,242)"/>
<rect x="89.8" y="560.6" width="4" height="4" fill="rgb(242,242,242)"/>
<rect x="93.8" y="560.6" width="4" height="4" fill="rgb(242,242,242)"/>
<rect x="97.8" y="560.6" width="4" height="4" fill="rgb(242,242,242)"/>
<rect x="101.8" y="560.6" width="4" height="4" fill="rgb(242,242,242)"/>
<rect x="105.8" y="560.6" width="4" height="4" fill="rgb(242,242,242)"/>
<rect x="109.8" y="560.6" width="4" height="4" fill="rgb(242,242,242)"/>
<rect x="113.8" y="560.6" width="4" height="4" fill="rgb(242,242,242)"/>
<rect x="117.8" y="560.6" width="4" height="4" fill="rgb(243,243,243)"/>
<rect x="121.8" y="560.6" width="4" height="4" fill="rgb(243,243,243)"/>
<rect x="125.8" y="560.6" width="4" height="4" fill="rgb(244,244,244)"/>
<rect x="129.8" y="560.6" width="4" height="4" fill="rgb(245,245,245)"/>
<rect x="133.8" y="560.6" width="4" height="4" fill="rgb(245,245,245)"/>
<rect x="137.8" y="560.6" width="4" height="4" fill="rgb(246,246,246)"/>
<rect x="141.8" y="560.6" width="4" height="4" fill="rgb(246,246,246)"/>
<rect x="145.8" y="560.6" width="4" height="4" fill="rgb(247,247,247)"/>
<rect x="149.8" y="560.6" width="4" height="4" fill="rgb(248,248,248)"/>
<rect x="153.8" y="560.6" width="4" height="4" fill="rgb(248,248,248)"/>
<rect x="157.8" y="560.6" width="4" height="4" fill="rgb(249,249,249)"/>
<rect x="69.8" y="564.6" width="4" height="4" fill="rgb(243,243,243)"/>
<rect x="73.8" y="564.6" width="4" height="4" fill="rgb(242,242,242)"/>
<rect x="77.8" y="564.6" width="4" height="4" fill="rgb(241,241,241)"/>
<rect x="81.8" y="564.6" width="4" height="4" fill="rgb(241,241,241)"/>
<rect x="85.8" y="564.6" width="4" height="4" fill="rgb(240,240,240)"/>
<rect x="89.8" y="564.6" width="4" height="4" fill="rgb(240,240,240)"/>
<rect x="93.8" y="564.6" width="4" height="4" fill="rgb(240,240,240)"/>
<rect x="97.8" y="564.6" width="4" height="4" fill="rgb(240,240,240)"/>
<rect x="101.8" y="564.6" width="4" height="4" fill="rgb(240,240,240)"/>
<rect x="105.8" y="564.6" width="4" height="4" fill="rgb(240,240,240)"/>
<rect x="109.8" y="564.6" width="4" height="4" fill="rgb(240,240,240)"/>
<rect x="113.8" y="564.6" width="4" height="4" fill="rgb(241,241,241)"/>
<rect x="117.8" y="564.6" width="4" height="4" fill="rgb(241,241,241)"/>
<rect x="121.8" y="564.6" width="4" height="4" fill="rgb(242,242,242)"/>
<rect x="125.8" y="564.6" width="4" height="4" fill="rgb(242,242,242)"/>
<rect x="129.8" y="564.6" width="4" height="4" fill="rgb(243,243,243)"/>
<rect x="133.8" y="564.6" width="4" height="4" fill="rgb(244,244,244)"/>
<rect x="137.8" y="564.6" width="4" height="4" fill="rgb(245,245,245)"/>
<rect x="141.8" y="564.6" width="4" height="4" fill="rgb(245,245,245)"/>
<rect x="145.8" y="564.6" width="4" height="4" fill="rgb(246,246,246)"/>
<rect x="149.8" y="564.6" width="4" height="4" fill="rgb(247,247,247)"/>
<rect x="153.8" y="564.6" width="4" height="4" fill="rgb(248,248,248)"/>
<rect x="157.8" y="564.6" width="4" height="4" fill="rgb(248,248,248)"/>
<rect x="161.8" y="564.6" width="4" height="4" fill="rgb(249,249,249)"/>
<rect x="69.8" y="568.6" width="4" height="4" fill="rgb(241,241,241)"/>
<rect x="73.8" y="568.6" width="4" height="4" fill="rgb(240,240,240)"/>
<rect x="77.8" y="568.6" width="4" height="4" fill="rgb(240,240,240)"/>
<rect x="81.8" y="568.6" width="4" height="4" fill="rgb(239,239,239)"/>
<rect x="85.8" y="568.6" width="4" height="4" fill="rgb(239,239,239)"/>
<rect x="89.8" y="568.6" width="4" height="4" fill="rgb(238,238,238)"/>
<rect x="93.8" y="568.6" width="4" height="4" fill="rgb(238,238,238)"/>
<rect x="97.8" y="568.6" width="4" height="4" fill="rgb(238,238,238)"/>
<rect x="101.8" y="568.6" width="4" height="4" fill="rgb(238,238,238)"/>
<rect x="105.8" y="568.6" width="4" height="4" fill="rgb(238,238,238)"/>
<rect x="109.8" y="568.6" width="4" height="4" fill="rgb(238,238,238)"/>
<rect x="113.8" y="568.6" width="4" height="4" fill="rgb(239,239,239)"/>
<rect x="117.8" y="568.6" width="4" height="4" fill="rgb(239,239,239)"/>
<rect x="121.8" y="568.6" width="4" height="4" fill="rgb(240,240,240)"/>
<rect x="125.8" y="568.6" width="4" height="4" fill="rgb(241,241,241)"/>
<rect x="129.8" y="568.6" width="4" height="4" fill="rgb(241,241,241)"/>
<rect x="133.8" y="568.6" width="4" height="4" fill="rgb(242,242,242)"/>
<rect x="137.8" y="568.6" width="4" height="4" fill="rgb(243,243,243)"/>
<rect x="141.8" y="568.6" width="4" height="4" fill="rgb(244,244,244)"/>
<rect x="145.8" y="568.6" width="4" height="4" fill="rgb(245,245,245)"/>
<rect x="149.8" y="568.6" width="4" height="4" fill="rgb(246,246,246)"/>
<rect x="153.8" y="568.6" width="4" height="4" fill="rgb(247,247,247)"/>
<rect x="157.8" y="568.6" width="4" height="4" fill="rgb(248,248,248)"/>
<rect x="161.8" y="568.6" width="4" height="4" fill="rgb(248,248,248)"/>
<rect x="165.8" y="568.6" width="4" height="4" fill="rgb(249,249,249)"/>
<rect x="69.8" y="572.6" width="4" height="4" fill="rgb(239,239,239)"/>
<rect x="73.8" y="572.6" width="4" height="4" fill="rgb(238,238,238)"/>
<rect x="77.8" y="572.6" width="4" height="4" fill="rgb(238,238,238)"/>
<rect x="81.8" y="572.6" width="4" height="4" fill="rgb(237,237,237)"/>
<rect x="85.8" y="572.6" width="4" height="4" fill="rgb(236,236,236)"/>
<rect x="89.8" y="572.6" width="4" height="4" fill="rgb(236,236,236)"/>
<rect x="93.8" y="572.6" width="4" height="4" fill="rgb(236,236,236)"/>
<rect x="97.8" y="572.6" width="4" height="4" fill="rgb(236,236,236)"/>
<rect x="101.8" y="572.6" width="4" height="4" fill="rgb(236,236,236)"/>
<rect x="105.8" y="572.6" width="4" height="4" fill="rgb(236,236,236)"/>
<rect x="109.8" y="572.6" width="4" height="4" fill="rgb(236,236,236)"/>
<rect x="113.8" y="572.6" width="4" height="4" fill="rgb(237,237,237)"/>
<rect x="117.8" y="572.6" width="4" height="4" fill="rgb(237,237,237)"/>
<rect x="121.8" y="572.6" width="4" height="4" fill="rgb(238,238,238)"/>
<rect x="125.8" y="572.6" width="4" height="4" fill="rgb(239,239,239)"/>
<rect x="129.8" y="572.6" width="4" height="4" fill="rgb(240,240,240)"/>
<rect x="133.8" y="572.6" width="4" height="4" fill="rgb(241,241,241)"/>
<rect x="137.8" y="572.6" width="4" height="4" fill="rgb(242,242,242)"/>
<rect x="141.8" y="572.6" width="4" height="4" fill="rgb(243,243,243)"/>
<rect x="145.8" y="572.6" width="4" height="4" fill="rgb(244,244,244)"/>
<rect x="149.8" y="572.6" width="4" height="4" fill="rgb(245,245,245)"/>
<rect x="153.8" y="572.6" width="4" height="4" fill="rgb(246,246,246)"/>
<rect x="157.8" y="572.6" width="4" height="4" fill="rgb(247,247,247)"/>
<rect x="161.8" y="572.6" width="4" height="4" fill="rgb(247,247,247)"/>
<rect x="165.8" y="572.6" width="4" height="4" fill="rgb(248,248,248)"/>
<rect x="169.8" y="572.6" width="4" height="4" fill="rgb(249,249,249)"/>
<rect x="69.8" y="576.6" width="4" height="4" fill="rgb(237,237,237)"/>
<rect x="73.8" y="576.6" width="4" height="4" fill="rgb(236,236,236)"/>
<rect x="77.8" y="576.6" width="4" height="4" fill="rgb(236,236,236)"/>
<rect x="81.8" y="576.6" width="4" height="4" fill="rgb(235,235,235)"/>
<rect x="85.8" y="576.6" width="4" height="4" fill="rgb(234,234,234)"/>
<rect x="89.8" y="576.6" width="4" height="4" fill="rgb(234,234,234)"/>
<rect x="93.8" y="576.6" width="4" height="4" fill="rgb(234,234,234)"/>
<rect x="97.8" y="576.6" width="4" height="4" fill="rgb(234,234,234)"/>
<rect x="101.8" y="576.6" width="4" height="4" fill="rgb(234,234,234)"/>
<rect x="105.8" y="576.6" width="4" height="4" fill="rgb(234,234,234)"/>
<rect x="109.8" y="576.6" width="4" height="4" fill="rgb(234,234,234)"/>
<rect x="113.8" y="576.6" width="4" height="4" fill="rgb(235,235,235)"/>
<rect x="117.8" y="576.6" width="4" height="4" fill="rgb(235,235,235)"/>
<rect x="121.8" y="576.6" width="4" height="4" fill="rgb(236,236,236)"/>
<rect x="125.8" y="576.6" width="4" height="4" fill="rgb(237,237,237)"/>
<rect x="129.8" y="576.6" width="4" height="4" fill="rgb(238,238,238)"/>
<rect x="133.8" y="576.6" width="4" height="4" fill="rgb(239,239,239)"/>
<rect x="137.8" y="576.6" width="4" height="4" fill="rgb(240,240,240)"/>
<rect x="141.8" y="576.6" width="4" height="4" fill="rgb(241,241,241)"/>
<rect x="145.8" y="576.6" width="4" height="4" fill="rgb(242,242,242)"/>
<rect x="149.8" y="576.6" width="4" height="4" fill="rgb(244,244,244)"/>
<rect x="153.8" y="576.6" width="4" height="4" fill="rgb(245,245,245)"/>
<rect x="157.8" y="576.6" width="4" height="4" fill="rgb(246,246,246)"/>
<rect x="161.8" y="576.6" width="4" height="4" fill="rgb(247,247,247)"/>
<rect x="165.8" y="576.6" width="4" height="4" fill="rgb(248,248,248)"/>
<rect x="169.8" y="576.6" width="4" height="4" fill="rgb(248,248,248)"/>
<rect x="173.8" y="576.6" width="4" height="4" fill="rgb(249,249,249)"/>
<rect x="69.8" y="580.6" width="4" height="4" fill="rgb(235,235,235)"/>
<rect x="73.8" y="580.6" width="4" height="4" fill="rgb(234,234,234)"/>
<rect x="77.8" y="580.6" width="4" height="4" fill="rgb(233,233,233)"/>
<rect x="81.8" y="580.6" width="4" height="4" fill="rgb(233,233,233)"/>
<rect x="85.8" y="580.6" width="4" height="4" fill="rgb(232,232,232)"/>
<rect x="89.8" y="580.6" width="4" height="4" fill="rgb(232,232,232)"/>
<rect x="93.8" y="580.6" width="4" height="4" fill="rgb(231,231,231)"/>
<rect x="97.8" y="580.6" width="4" height="4" fill="rgb(231,231,231)"/>
<rect x="101.8" y="580.6" width="4" height="4" fill="rgb(231,231,231)"/>
<rect x="105.8" y="580.6" width="4" height="4" fill="rgb(232,232,232)"/>
<rect x="109.8" y="580.6" width="4" height="4" fill="rgb(232,232,232)"/>
<rect x="113.8" y="580.6" width="4" height="4" fill="rgb(233,233,233)"/>
<rect x="117.8" y="580.6" width="4" height="4" fill="rgb(233,233,233)"/>
<rect x="121.8" y="580.6" width="4" height="4" fill="rgb(234,234,234)"/>
<rect x="125.8" y="580.6" width="4" height="4" fill="rgb(235,235,235)"/>
<rect x="129.8" y="580.6" width="4" height="4" fill="rgb(236,236,236)"/>
<rect x="133.8" y="580.6" width="4" height="4" fill="rgb(237,237,237)"/>
<rect x="137.8" y="580.6" width="4" height="4" fill="rgb(239,239,239)"/>
<rect x="141.8" y="580.6" width="4" height="4" fill="rgb(240,240,240)"/>
<rect x="145.8" y="580.6" width="4" height="4" fill="rgb(241,241,241)"/>
<rect x="149.8" y="580.6" width="4" height="4" fill="rgb(242,242,242)"/>
<rect x="153.8" y="580.6" width="4" height="4" fill="rgb(244,244,244)"/>
<rect x="157.8" y="580.6" width="4" height="4" fill="rgb(245,245,245)"/>
<rect x="161.8" y="580.6" width="4" height="4" fill="rgb(246,246,246)"/>
<rect x="165.8" y="580.6" width="4" height="4" fill="rgb(247,247,247)"/>
<rect x="169.8" y="580.6" width="4" height="4" fill="rgb(248,248,248)"/>
<rect x="173.8" y="580.6" width="4" height="4" fill="rgb(249,249,249)"/>
<rect x="69.8" y="584.6" width="4" height="4" fill="rgb(233,233,233)"/>
<rect x="73.8" y="584.6" width="4" height="4" fill="rgb(232,232,232)"/>
<rect x="77.8" y="584.6" width="4" height="4" fill="rgb(231,231,231)"/>
<rect x="81.8" y="584.6" width="4" height="4" fill="rgb(230,230,230)"/>
<rect x="85.8" y="584.6" width="4" height="4" fill="rgb(230,230,230)"/>
<rect x="89.8" y="584.6" width="4" height="4" fill="rgb(229,229,229)"/>
<rect x="93.8" y="584.6" width="4" height="4" fill="rgb(229,229,229)"/>
<rect x="97.8" y="584.6" width="4" height="4" fill="rgb(229,229,229)"/>
<rect x="101.8" y="584.6" width="4" height="4" fill="rgb(229,229,229)"/>
<rect x="105.8" y="584.6" width="4" height="4" fill="rgb(229,229,229)"/>
<rect x="109.8" y="584.6" width="4" height="4" fill="rgb(230,230,230)"/>
<rect x="113.8" y="584.6" width="4" height="4" fill="rgb(230,230,230)"/>
<rect x="117.8" y="584.6" width="4" height="4" fill="rgb(231,231,231)"/>
<rect x="121.8" y="584.6" width="4" height="4" fill="rgb(232,232,232)"/>
<rect x="125.8" y="584.6" width="4" height="4" fill="rgb(233,233,233)"/>
<rect x="129.8" y="584.6" width="4" height="4" fill="rgb(234,234,234)"/>
<rect x="133.8" y="584.6" width="4" height="4" fill="rgb(236,236,236)"/>
<rect x="137.8" y="584.6" width="4" height="4" fill="rgb(237,237,237)"/>
<rect x="141.8" y="584.6" width="4" height="4" fill="rgb(238,238,238)"/>
<rect x="145.8" y="584.6" width="4" height="4" fill="rgb(240,240,240)"/>
<rect x="149.8" y="584.6" width="4" height="4" fill="rgb(241,241,241)"/>
<rect x="153.8" y="584.6" width="4" height="4" fill="rgb(242,242,242)"/>
<rect x="157.8" y="584.6" width="4" height="4" fill="rgb(244,244,244)"/>
<rect x="161.8" y="584.6" width="4" height="4" fill="rgb(245,245,245)"/>
<rect x="165.8" y="584.6" width="4" height="4" fill="rgb(246,246,246)"/>
<rect x="169.8" y="584.6" width="4" height="4" fill="rgb(247,247,247)"/>
<rect x="173.8" y="584.6" width="4" height="4" fill="rgb(248,248,248)"/>
<rect x="177.8" y="584.6" width="4" height="4" fill="rgb(249,249,249)"/>
<rect x="69.8" y="588.6" width="4" height="4" fill="rgb(231,231,231)"/>
<rect x="73.8" y="588.6" width="4" height="4" fill="rgb(230,230,230)"/>
<rect x="77.8" y="588.6" width="4" height="4" fill="rgb(229,229,229)"/>
<rect x="81.8" y="588.6" width="4" height="4" fill="rgb(228,228,228)"/>
<rect x="85.8" y="588.6" width="4" height="4" fill="rgb(227,227,227)"/>
<rect x="89.8" y="588.6" width="4" height="4" fill="rgb(227,227,227)"/>
<rect x="93.8" y="588.6" width="4" height="4" fill="rgb(227,227,227)"/>
<rect x="97.8" y="588.6" width="4" height="4" fill="rgb(226,226,226)"/>
<rect x="101.8" y="588.6" width="4" height="4" fill="rgb(226,226,226)"/>
<rect x="105.8" y="588.6" width="4" height="4" fill="rgb(227,227,227)"/>
<rect x="109.8" y="588.6" width="4" height="4" fill="rgb(227,227,227)"/>
<rect x="113.8" y="588.6" width="4" height="4" fill="rgb(228,228,228)"/>
<rect x="117.8" y="588.6" width="4" height="4" fill="rgb(229,229,229)"/>
<rect x="121.8" y="588.6" width="4" height="4" fill="rgb(230,230,230)"/>
<rect x="125.8" y="588.6" width="4" height="4" fill="rgb(231,231,231)"/>
<rect x="129.8" y="588.6" width="4" height="4" fill="rgb(232,232,232)"/>
<rect x="133.8" y="588.6" width="4" height="4" fill="rgb(234,234,234)"/>
<rect x="137.8" y="588.6" width="4" height="4" fill="rgb(235,235,235)"/>
<rect x="141.8" y="588.6" width="4" height="4" fill="rgb(237,237,237)"/>
<rect x="145.8" y="588.6" width="4" height="4" fill="rgb(238,238,238)"/>
<rect x="149.8" y="588.6" width="4" height="4" fill="rgb(240,240,240)"/>
<rect x="153.8" y="588.6" width="4" height="4" fill="rgb(241,241,241)"/>
<rect x="157.8" y="588.6" width="4" height="4" fill="rgb(243,243,243)"/>
<rect x="161.8" y="588.6" width="4" height="4" fill="rgb(244,244,244)"/>
<rect x="165.8" y="588.6" width="4" height="4" fill="rgb(245,245,245)"/>
<rect x="169.8" y="588.6" width="4" height="4" fill="rgb(246,246,246)"/>
<rect x="173.8" y="588.6" width="4" height="4" fill="rgb(248,248,248)"/>
<rect x="177.8" y="588.6" width="4" height="4" fill="rgb(248,248,248)"/>
<rect x="181.8" y="588.6" width="4" height="4" fill="rgb(249,249,249)"/>
<rect x="69.8" y="592.6" width="4" height="4" fill="rgb(229,229,229)"/>
<rect x="73.8" y="592.6" width="4" height="4" fill="rgb(228,228,228)"/>
<rect x="77.8" y="592.6" width="4" height="4" fill="rgb(227,227,227)"/>
<rect x="81.8" y="592.6" width="4" height="4" fill="rgb(226,226,226)"/>
<rect x="85.8" y="592.6" width="4" height="4" fill="rgb(225,225,225)"/>
<rect x="89.8" y="592.6" width="4" height="4" fill="rgb(225,225,225)"/>
<rect x="93.8" y="592.6" width="4" height="4" fill="rgb(224,224,224)"/>
<rect x="97.8" y="592.6" width="4" height="4" fill="rgb(224,224,224)"/>
<rect x="101.8" y="592.6" width="4" height="4" fill="rgb(224,224,224)"/>
<rect x="105.8" y="592.6" width="4" height="4" fill="rgb(224,224,224)"/>
<rect x="109.8" y="592.6" width="4" height="4" fill="rgb(225,225,225)"/>
<rect x="113.8" y="592.6" width="4" height="4" fill="rgb(226,226,226)"/>
<rect x="117.8" y="592.6" width="4" height="4" fill="rgb(227,227,227)"/>
<rect x="121.8" y="592.6" width="4" height="4" fill="rgb(228,228,228)"/>
<rect x="125.8" y="592.6" width="4" height="4" fill="rgb(229,229,229)"/>
<rect x="129.8" y="592.6" width="4" height="4" fill="rgb(231,231,231)"/>
<rect x="133.8" y="592.6" width="4" height="4" fill="rgb(232,232,232)"/>
<rect x="137.8" y="592.6" width="4" height="4" fill="rgb(234,234,234)"/>
<rect x="141.8" y="592.6" width="4" height="4" fill="rgb(235,235,235)"/>
<rect x="145.8" y="592.6" width="4" height="4" fill="rgb(237,237,237)"/>
<rect x="149.8" y="592.6" width="4" height="4" fill="rgb(239,239,239)"/>
<rect x="153.8" y="592.6" width="4" height="4" fill="rgb(240,240,240)"/>
<rect x="157.8" y="592.6" width="4" height="4" fill="rgb(242,242,242)"/>
<rect x="161.8" y="592.6" width="4" height="4" fill="rgb(243,243,243)"/>
<rect x="165.8" y="592.6" width="4" height="4" fill="rgb(244,244,244)"/>
<rect x="169.8" y="592.6" width="4" height="4" fill="rgb(246,246,246)"/>
<rect x="173.8" y="592.6" width="4" height="4" fill="rgb(247,247,247)"/>
<rect x="177.8" y="592.6" width="4" height="4" fill="rgb(248,248,248)"/>
<rect x="181.8" y="592.6" width="4" height="4" fill="rgb(249,249,249)"/>
<rect x="69.8" y="596.6" width="4" height="4" fill="rgb(228,228,228)"/>
<rect x="73.8" y="596.6" width="4" height="4" fill="rgb(226,226,226)"/>
<rect x="77.8" y="596.6" width="4" height="4" fill="rgb(225,225,225)"/>
<rect x="81.8" y="596.6" width="4" height="4" fill="rgb(222,222,222)"/>
<rect x="85.8" y="596.6" width="4" height="4" fill="rgb(220,220,220)"/>
<rect x="89.8" y="596.6" width="4" height="4" fill="rgb(221,221,221)"/>
<rect x="93.8" y="596.6" width="4" height="4" fill="rgb(222,222,222)"/>
<rect x="97.8" y="596.6" width="4" height="4" fill="rgb(222,222,222)"/>
<rect x="101.8" y="596.6" width="4" height="4" fill="rgb(222,222,222)"/>
<rect x="105.8" y="596.6" width="4" height="4" fill="rgb(222,222,222)"/>
<rect x="109.8" y="596.6" width="4" height="4" fill="rgb(223,223,223)"/>
<rect x="113.8" y="596.6" width="4" height="4" fill="rgb(224,224,224)"/>
<rect x="117.8" y="596.6" width="4" height="4" fill="rgb(225,225,225)"/>
<rect x="121.8" y="596.6" width="4" height="4" fill="rgb(226,226,226)"/>
<rect x="125.8" y="596.6" width="4" height="4" fill="rgb(227,227,227)"/>
<rect x="129.8" y="596.6" width="4" height="4" fill="rgb(229,229,229)"/>
<rect x="133.8" y="596.6" width="4" height="4" fill="rgb(230,230,230)"/>
<rect x="137.8" y="596.6" width="4" height="4" fill="rgb(232,232,232)"/>
<rect x="141.8" y="596.6" width="4" height="4" fill="rgb(234,234,234)"/>
<rect x="145.8" y="596.6" width="4" height="4" fill="rgb(236,236,236)"/>
<rect x="149.8" y="596.6" width="4" height="4" fill="rgb(237,237,237)"/>
<rect x="153.8" y="596.6" width="4" height="4" fill="rgb(239,239,239)"/>
<rect x="157.8" y="596.6" width="4" height="4" fill="rgb(241,241,241)"/>
<rect x="161.8" y="596.6" width="4" height="4" fill="rgb(242,242,242)"/>
<rect x="165.8" y="596.6" width="4" height="4" fill="rgb(244,244,244)"/>
<rect x="169.8" y="596.6" width="4" height="4" fill="rgb(245,245,245)"/>
<rect x="173.8" y="596.6" width="4" height="4" fill="rgb(246,246,246)"/>
<rect x="177.8" y="596.6" width="4" height="4" fill="rgb(247,247,247)"/>
<rect x="181.8" y="596.6" width="4" height="4" fill="rgb(249,249,249)"/>
<rect x="185.8" y="596.6" width="4" height="4" fill="rgb(249,249,249)"/>
<rect x="69.8" y="600.6" width="4" height="4" fill="rgb(226,226,226)"/>
<rect x="73.8" y="600.6" width="4" height="4" fill="rgb(224,224,224)"/>
<rect x="77.8" y="600.6" width="4" height="4" fill="rgb(223,223,223)"/>
<rect x="81.8" y="600.6" width="4" height="4" fill="rgb(218,218,218)"/>
<rect x="85.8" y="600.6" width="4" height="4" fill="rgb(216,216,216)"/>
<rect x="89.8" y="600.6" width="4" height="4" fill="rgb(193,193,193)"/>
<rect x="93.8" y="600.6" width="4" height="4" fill="rgb(174,174,174)"/>
<rect x="97.8" y="600.6" width="4" height="4" fill="rgb(166,166,166)"/>
<rect x="101.8" y="600.6" width="4" height="4" fill="rgb(171,171,171)"/>
<rect x="105.8" y="600.6" width="4" height="4" fill="rgb(188,188,188)"/>
<rect x="109.8" y="600.6" width="4" height="4" fill="rgb(213,213,213)"/>
<rect x="113.8" y="600.6" width="4" height="4" fill="rgb(221,221,221)"/>
<rect x="117.8" y="600.6" width="4" height="4" fill="rgb(223,223,223)"/>
<rect x="121.8" y="600.6" width="4" height="4" fill="rgb(224,224,224)"/>
<rect x="125.8" y="600.6" width="4" height="4" fill="rgb(225,225,225)"/>
<rect x="129.8" y="600.6" width="4" height="4" fill="rgb(227,227,227)"/>
<rect x="133.8" y="600.6" width="4" height="4" fill="rgb(229,229,229)"/>
<rect x="137.8" y="600.6" width="4" height="4" fill="rgb(231,231,231)"/>
<rect x="141.8" y="600.6" width="4" height="4" fill="rgb(232,232,232)"/>
<rect x="145.8" y="600.6" width="4" height="4" fill="rgb(234,234,234)"/>
<rect x="149.8" y="600.6" width="4" height="4" fill="rgb(236,236,236)"/>
<rect x="153.8" y="600.6" width="4" height="4" fill="rgb(238,238,238)"/>
<rect x="157.8" y="600.6" width="4" height="4" fill="rgb(240,240,240)"/>
<rect x="161.8" y="600.6" width="4" height="4" fill="rgb(241,241,241)"/>
<rect x="165.8" y="600.6" width="4" height="4" fill="rgb(243,243,243)"/>
<rect x="169.8" y="600.6" width="4" height="4" fill="rgb(244,244,244)"/>
<rect x="173.8" y="600.6" width="4" height="4" fill="rgb(246,246,246)"/>
<rect x="177.8" y="600.6" width="4" height="4" fill="rgb(247,247,247)"/>
<rect x="181.8" y="600.6" width="4" height="4" fill="rgb(248,248,248)"/>
<rect x="185.8" y="600.6" width="4" height="4" fill="rgb(249,249,249)"/>
<rect x="69.8" y="604.6" width="4" height="4" fill="rgb(224,224,224)"/>
<rect x="73.8" y="604.6" width="4" height="4" fill="rgb(222,222,222)"/>
<rect x="77.8" y="604.6" width="4" height="4" fill="rgb(221,221,221)"/>
<rect x="81.8" y="604.6" width="4" height="4" fill="rgb(179,179,179)"/>
<rect x="85.8" y="604.6" width="4" height="4" fill="rgb(132,132,132)"/>
<rect x="89.8" y="604.6" width="4" height="4" fill="rgb(95,95,95)"/>
<rect x="93.8" y="604.6" width="4" height="4" fill="rgb(72,72,72)"/>
<rect x="97.8" y="604.6" width="4" height="4" fill="rgb(63,63,63)"/>
<rect x="101.8" y="604.6" width="4" height="4" fill="rgb(68,68,68)"/>
<rect x="105.8" y="604.6" width="4" height="4" fill="rgb(87,87,87)"/>
<rect x="109.8" y="604.6" width="4" height="4" fill="rgb(121,121,121)"/>
<rect x="113.8" y="604.6" width="4" height="4" fill="rgb(167,167,167)"/>
<rect x="117.8" y="604.6" width="4" height="4" fill="rgb(215,215,215)"/>
<rect x="121.8" y="604.6" width="4" height="4" fill="rgb(222,222,222)"/>
<rect x="125.8" y="604.6" width="4" height="4" fill="rgb(224,224,224)"/>
<rect x="129.8" y="604.6" width="4" height="4" fill="rgb(225,225,225)"/>
<rect x="133.8" y="604.6" width="4" height="4" fill="rgb(227,227,227)"/>
<rect x="137.8" y="604.6" width="4" height="4" fill="rgb(229,229,229)"/>
<rect x="141.8" y="604.6" width="4" height="4" fill="rgb(231,231,231)"/>
<rect x="145.8" y="604.6" width="4" height="4" fill="rgb(233,233,233)"/>
<rect x="149.8" y="604.6" width="4" height="4" fill="rgb(235,235,235)"/>
<rect x="153.8" y="604.6" width="4" height="4" fill="rgb(237,237,237)"/>
<rect x="157.8" y="604.6" width="4" height="4" fill="rgb(239,239,239)"/>
<rect x="161.8" y="604.6" width="4" height="4" fill="rgb(241,241,241)"/>
<rect x="165.8" y="604.6" width="4" height="4" fill="rgb(242,242,242)"/>
<rect x="169.8" y="604.6" width="4" height="4" fill="rgb(244,244,244)"/>
<rect x="173.8" y="604.6" width="4" height="4" fill="rgb(245,245,245)"/>
<rect x="177.8" y="604.6" width="4" height="4" fill="rgb(247,247,247)"/>
<rect x="181.8" y="604.6" width="4" height="4" fill="rgb(248,248,248)"/>
<rect x="185.8" y="604.6" width="4" height="4" fill="rgb(249,249,249)"/>
<rect x="69.8" y="608.6" width="4" height="4" fill="rgb(222,222,222)"/>
<rect x="73.8" y="608.6" width="4" height="4" fill="rgb(219,219,219)"/>
<rect x="77.8" y="608.6" width="4" height="4" fill="rgb(156,156,156)"/>
<rect x="81.8" y="608.6" width="4" height="4" fill="rgb(91,91,91)"/>
<rect x="85.8" y="608.6" width="4" height="4" fill="rgb(43,43,43)"/>
<rect x="89.8" y="608.6" width="4" height="4" fill="rgb(15,15,15)"/>
<rect x="93.8" y="608.6" width="4" height="4" fill="rgb(4,4,4)"/>
<rect x="97.8" y="608.6" width="4" height="4" fill="rgb(1,1,1)"/>
<rect x="101.8" y="608.6" width="4" height="4" fill="rgb(3,3,3)"/>
<rect x="105.8" y="608.6" width="4" height="4" fill="rgb(11,11,11)"/>
<rect x="109.8" y="608.6" width="4" height="4" fill="rgb(34,34,34)"/>
<rect x="113.8" y="608.6" width="4" height="4" fill="rgb(77,77,77)"/>
<rect x="117.8" y="608.6" width="4" height="4" fill="rgb(139,139,139)"/>
<rect x="121.8" y="608.6" width="4" height="4" fill="rgb(205,205,205)"/>
<rect x="125.8" y="608.6" width="4" height="4" fill="rgb(222,222,222)"/>
<rect x="129.8" y="608.6" width="4" height="4" fill="rgb(224,224,224)"/>
<rect x="133.8" y="608.6" width="4" height="4" fill="rgb(226,226,226)"/>
<rect x="137.8" y="608.6" width="4" height="4" fill="rgb(228,228,228)"/>
<rect x="141.8" y="608.6" width="4" height="4" fill="rgb(230,230,230)"/>
<rect x="145.8" y="608.6" width="4" height="4" fill="rgb(232,232,232)"/>
<rect x="149.8" y="608.6" width="4" height="4" fill="rgb(234,234,234)"/>
<rect x="153.8" y="608.6" width="4" height="4" fill="rgb(236,236,236)"/>
<rect x="157.8" y="608.6" width="4" height="4" fill="rgb(238,238,238)"/>
<rect x="161.8" y="608.6" width="4" height="4" fill="rgb(240,240,240)"/>
<rect x="165.8" y="608.6" width="4" height="4" fill="rgb(242,242,242)"/>
<rect x="169.8" y="608.6" width="4" height="4" fill="rgb(243,243,243)"/>
<rect x="173.8" y="608.6" width="4" height="4" fill="rgb(245,245,245)"/>
<rect x="177.8" y="608.6" width="4" height="4" fill="rgb(246,246,246)"/>
<rect x="181.8" y="608.6" width="4" height="4" fill="rgb(247,247,247)"/>
<rect x="185.8" y="608.6" width="4" height="4" fill="rgb(248,248,248)"/>
<rect x="189.8" y="608.6" width="4" height="4" fill="rgb(249,249,249)"/>
<rect x="69.8" y="612.6" width="4" height="4" fill="rgb(221,221,221)"/>
<rect x="73.8" y="612.6" width="4" height="4" fill="rgb(158,158,158)"/>
<rect x="77.8" y="612.6" width="4" height="4" fill="rgb(79,79,79)"/>
<rect x="81.8" y="612.6" width="4" height="4" fill="rgb(22,22,22)"/>
<rect x="85.8" y="612.6" width="4" height="4" fill="rgb(0,0,0)"/>
<rect x="89.8" y="612.6" width="4" height="4" fill="rgb(0,0,0)"/>
<rect x="93.8" y="612.6" width="4" height="4" fill="rgb(0,0,0)"/>
<rect x="97.8" y="612.6" width="4" height="4" fill="rgb(0,0,0)"/>
<rect x="101.8" y="612.6" width="4" height="4" fill="rgb(0,0,0)"/>
<rect x="105.8" y="612.6" width="4" height="4" fill="rgb(0,0,0)"/>
<rect x="109.8" y="612.6" width="4" height="4" fill="rgb(0,0,0)"/>
<rect x="113.8" y="612.6" width="4" height="4" fill="rgb(13,13,13)"/>
<rect x="117.8" y="612.6" width="4" height="4" fill="rgb(62,62,62)"/>
<rect x="121.8" y="612.6" width="4" height="4" fill="rgb(137,137,137)"/>
<rect x="125.8" y="612.6" width="4" height="4" fill="rgb(214,214,214)"/>
<rect x="129.8" y="612.6" width="4" height="4" fill="rgb(222,222,222)"/>
<rect x="133.8" y="612.6" width="4" height="4" fill="rgb(224,224,224)"/>
<rect x="137.8" y="612.6" width="4" height="4" fill="rgb(227,227,227)"/>
<rect x="141.8" y="612.6" width="4" height="4" fill="rgb(229,229,229)"/>
<rect x="145.8" y="612.6" width="4" height="4" fill="rgb(231,231,231)"/>
<rect x="149.8" y="612.6" width="4" height="4" fill="rgb(233,233,233)"/>
<rect x="153.8" y="612.6" width="4" height="4" fill="rgb(235,235,235)"/>
<rect x="157.8" y="612.6" width="4" height="4" fill="rgb(237,237,237)"/>
<rect x="161.8" y="612.6" width="4" height="4" fill="rgb(239,239,239)"/>
<rect x="165.8" y="612.6" width="4" height="4" fill="rgb(241,241,241)"/>
<rect x="169.8" y="612.6" width="4" height="4" fill="rgb(243,243,243)"/>
<rect x="173.8" y="612.6" width="4" height="4" fill="rgb(244,244,244)"/>
<rect x="177.8" y="612.6" width="4" height="4" fill="rgb(246,246,246)"/>
<rect x="181.8" y="612.6" width="4" height="4" fill="rgb(247,247,247)"/>
<rect x="185.8" y="612.6" width="4" height="4" fill="rgb(248,248,248)"/>
<rect x="189.8" y="612.6" width="4" height="4" fill="rgb(249,249,249)"/>
<rect x="69.8" y="616.6" width="4" height="4" fill="rgb(184,184,184)"/>
<rect x="73.8" y="616.6" width="4" height="4" fill="rgb(96,96,96)"/>
<rect x="77.8" y="616.6" width="4" height="4" fill="rgb(24,24,24)"/>
<rect x="81.8" y="616.6" width="4" height="4" fill="rgb(0,0,0)"/>
<rect x="85.8" y="616.6" width="4" height="4" fill="rgb(0,0,0)"/>
<rect x="89.8" y="616.6" width="4" height="4" fill="rgb(0,0,0)"/>
<rect x="93.8" y="616.6" width="4" height="4" fill="rgb(0,0,0)"/>
<rect x="97.8" y="616.6" width="4" height="4" fill="rgb(0,0,0)"/>
<rect x="101.8" y="616.6" width="4" height="4" fill="rgb(0,0,0)"/>
<rect x="105.8" y="616.6" width="4" height="4" fill="rgb(0,0,0)"/>
<rect x="109.8" y="616.6" width="4" height="4" fill="rgb(0,0,0)"/>
<rect x="113.8" y="616.6" width="4" height="4" fill="rgb(0,0,0)"/>
<rect x="117.8" y="616.6" width="4" height="4" fill="rgb(12,12,12)"/>
<rect x="121.8" y="616.6" width="4" height="4" fill="rgb(75,75,75)"/>
<rect x="125.8" y="616.6" width="4" height="4" fill="rgb(163,163,163)"/>
<rect x="129.8" y="616.6" width="4" height="4" fill="rgb(221,221,221)"/>
<rect x="133.8" y="616.6" width="4" height="4" fill="rgb(223,223,223)"/>
<rect x="137.8" y="616.6" width="4" height="4" fill="rgb(226,226,226)"/>
<rect x="141.8" y="616.6" width="4" height="4" fill="rgb(228,228,228)"/>
<rect x="145.8" y="616.6" width="4" height="4" fill="rgb(230,230,230)"/>
<rect x="149.8" y="616.6" width="4" height="4" fill="rgb(232,232,232)"/>
<rect x="153.8" y="616.6" width="4" height="4" fill="rgb(235,235,235)"/>
<rect x="157.8" y="616.6" width="4" height="4" fill="rgb(237,237,237)"/>
<rect x="161.8" y="616.6" width="4" height="4" fill="rgb(239,239,239)"/>
<rect x="165.8" y="616.6" width="4" height="4" fill="rgb(241,241,241)"/>
<rect x="169.8" y="616.6" width="4" height="4" fill="rgb(242,242,242)"/>
<rect x="173.8" y="616.6" width="4" height="4" fill="rgb(244,244,244)"/>
<rect x="177.8" y="616.6" width="4" height="4" fill="rgb(245,245,245)"/>
<rect x="181.8" y="616.6" width="4" height="4" fill="rgb(247,247,247)"/>
<rect x="185.8" y="616.6" width="4" height="4" fill="rgb(248,248,248)"/>
<rect x="189.8" y="616.6" width="4" height="4" fill="rgb(249,249,249)"/>
<rect x="69.8" y="620.6" width="4" height="4" fill="rgb(140,140,140)"/>
<rect x="73.8" y="620.6" width="4" height="4" fill="rgb(48,48,48)"/>
<rect x="77.8" y="620.6" width="4" height="4" fill="rgb(0,0,0)"/>
<rect x="81.8" y="620.6" width="4" height="4" fill="rgb(0,0,0)"/>
<rect x="85.8" y="620.6" width="4" height="4" fill="rgb(0,0,0)"/>
<rect x="89.8" y="620.6" width="4" height="4" fill="rgb(0,0,0)"/>
<rect x="93.8" y="620.6" width="4" height="4" fill="rgb(0,0,0)"/>
<rect x="97.8" y="620.6" width="4" height="4" fill="rgb(0,0,0)"/>
<rect x="101.8" y="620.6" width="4" height="4" fill="rgb(0,0,0)"/>
<rect x="105.8" y="620.6" width="4" height="4" fill="rgb(0,0,0)"/>
<rect x="109.8" y="620.6" width="4" height="4" fill="rgb(0,0,0)"/>
<rect x="113.8" y="620.6" width="4" height="4" fill="rgb(0,0,0)"/>
<rect x="117.8" y="620.6" width="4" height="4" fill="rgb(0,0,0)"/>
<rect x="121.8" y="620.6" width="4" height="4" fill="rgb(31,31,31)"/>
<rect x="125.8" y="620.6" width="4" height="4" fill="rgb(115,115,115)"/>
<rect x="129.8" y="620.6" width="4" height="4" fill="rgb(208,208,208)"/>
<rect x="133.8" y="620.6" width="4" height="4" fill="rgb(223,223,223)"/>
<rect x="137.8" y="620.6" width="4" height="4" fill="rgb(225,225,225)"/>
<rect x="141.8" y="620.6" width="4" height="4" fill="rgb(227,227,227)"/>
<rect x="145.8" y="620.6" width="4" height="4" fill="rgb(229,229,229)"/>
<rect x="149.8" y="620.6" width="4" height="4" fill="rgb(232,232,232)"/>
<rect x="153.8" y="620.6" width="4" height="4" fill="rgb(234,234,234)"/>
<rect x="157.8" y="620.6" width="4" height="4" fill="rgb(236,236,236)"/>
<rect x="161.8" y="620.6" width="4" height="4" fill="rgb(238,238,238)"/>
<rect x="165.8" y="620.6" width="4" height="4" fill="rgb(240,240,240)"/>
<rect x="169.8" y="620.6" width="4" height="4" fill="rgb(242,242,242)"/>
<rect x="173.8" y="620.6" width="4" height="4" fill="rgb(244,244,244)"/>
<rect x="177.8" y="620.6" width="4" height="4" fill="rgb(245,245,245)"/>
<rect x="181.8" y="620.6" width="4" height="4" fill="rgb(247,247,247)"/>
<rect x="185.8" y="620.6" width="4" height="4" fill="rgb(248,248,248)"/>
<rect x="189.8" y="620.6" width="4" height="4" fill="rgb(249,249,249)"/>
<rect x="69.8" y="624.6" width="4" height="4" fill="rgb(105,105,105)"/>
<rect x="73.8" y="624.6" width="4" height="4" fill="rgb(21,21,21)"/>
<rect x="77.8" y="624.6" width="4" height="4" fill="rgb(0,0,0)"/>
<rect x="81.8" y="624.6" width="4" height="4" fill="rgb(0,0,0)"/>
<rect x="85.8" y="624.6" width="4" height="4" fill="rgb(0,0,0)"/>
<rect x="89.8" y="624.6" width="4" height="4" fill="rgb(0,0,0)"/>
<rect x="93.8" y="624.6" width="4" height="4" fill="rgb(0,0,0)"/>
<rect x="97.8" y="624.6" width="4" height="4" fill="rgb(0,0,0)"/>
<rect x="101.8" y="624.6" width="4" height="4" fill="rgb(0,0,0)"/>
<rect x="105.8" y="624.6" width="4" height="4" fill="rgb(0,0,0)"/>
<rect x="109.8" y="624.6" width="4" height="4" fill="rgb(0,0,0)"/>
<rect x="113.8" y="624.6" width="4" height="4" fill="rgb(0,0,0)"/>
<rect x="117.8" y="624.6" width="4" height="4" fill="rgb(0,0,0)"/>
<rect x="121.8" y="624.6" width="4" height="4" fill="rgb(8,8,8)"/>
<rect x="125.8" y="624.6" width="4" height="4" fill="rgb(80,80,80)"/>
<rect x="129.8" y="624.6" width="4" height="4" fill="rgb(181,181,181)"/>
<rect x="133.8" y="624.6" width="4" height="4" fill="rgb(222,222,222)"/>
<rect x="137.8" y="624.6" width="4" height="4" fill="rgb(224,224,224)"/>
<rect x="141.8" y="624.6" width="4" height="4" fill="rgb(227,227,227)"/>
<rect x="145.8" y="624.6" width="4" height="4" fill="rgb(229,229,229)"/>
<rect x="149.8" y="624.6" width="4" height="4" fill="rgb(231,231,231)"/>
<rect x="153.8" y="624.6" width="4" height="4" fill="rgb(234,234,234)"/>
<rect x="157.8" y="624.6" width="4" height="4" fill="rgb(236,236,236)"/>
<rect x="161.8" y="624.6" width="4" height="4" fill="rgb(238,238,238)"/>
<rect x="165.8" y="624.6" width="4" height="4" fill="rgb(240,240,240)"/>
<rect x="169.8" y="624.6" width="4" height="4" fill="rgb(242,242,242)"/>
<rect x="173.8" y="624.6" width="4" height="4" fill="rgb(243,243,243)"/>
<rect x="177.8" y="624.6" width="4" height="4" fill="rgb(245,245,245)"/>
<rect x="181.8" y="624.6" width="4" height="4" fill="rgb(246,246,246)"/>
<rect x="185.8" y="624.6" width="4" height="4" fill="rgb(248,248,248)"/>
<rect x="189.8" y="624.6" width="4" height="4" fill="rgb(249,249,249)"/>
<rect x="69.8" y="628.6" width="4" height="4" fill="rgb(84,84,84)"/>
<rect x="73.8" y="628.6" width="4" height="4" fill="rgb(8,8,8)"/>
<rect x="77.8" y="628.6" width="4" height="4" fill="rgb(0,0,0)"/>
<rect x="81.8" y="628.6" width="4" height="4" fill="rgb(0,0,0)"/>
<rect x="85.8" y="628.6" width="4" height="4" fill="rgb(0,0,0)"/>
<rect x="89.8" y="628.6" width="4" height="4" fill="rgb(0,0,0)"/>
<rect x="93.8" y="628.6" width="4" height="4" fill="rgb(0,0,0)"/>
<rect x="97.8" y="628.6" width="4" height="4" fill="rgb(0,0,0)"/>
<rect x="101.8" y="628.6" width="4" height="4" fill="rgb(0,0,0)"/>
<rect x="105.8" y="628.6" width="4" height="4" fill="rgb(0,0,0)"/>
<rect x="109.8" y="628.6" width="4" height="4" fill="rgb(0,0,0)"/>
<rect x="113.8" y="628.6" width="4" height="4" fill="rgb(0,0,0)"/>
<rect x="117.8" y="628.6" width="4" height="4" fill="rgb(0,0,0)"/>
<rect x="121.8" y="628.6" width="4" height="4" fill="rgb(1,1,1)"/>
<rect x="125.8" y="628.6" width="4" height="4" fill="rgb(60,60,60)"/>
<rect x="129.8" y="628.6" width="4" height="4" fill="rgb(162,162,162)"/>
<rect x="133.8" y="628.6" width="4" height="4" fill="rgb(222,222,222)"/>
<rect x="137.8" y="628.6" width="4" height="4" fill="rgb(224,224,224)"/>
<rect x="141.8" y="628.6" width="4" height="4" fill="rgb(226,226,226)"/>
<rect x="145.8" y="628.6" width="4" height="4" fill="rgb(229,229,229)"/>
<rect x="149.8" y="628.6" width="4" height="4" fill="rgb(231,231,231)"/>
<rect x="153.8" y="628.6" width="4" height="4" fill="rgb(233,233,233)"/>
<rect x="157.8" y="628.6" width="4" height="4" fill="rgb(236,236,236)"/>
<rect x="161.8" y="628.6" width="4" height="4" fill="rgb(238,238,238)"/>
<rect x="165.8" y="628.6" width="4" height="4" fill="rgb(240,240,240)"/>
<rect x="169.8" y="628.6" width="4" height="4" fill="rgb(242,242,242)"/>
<rect x="173.8" y="628.6" width="4" height="4" fill="rgb(243,243,243)"/>
<rect x="177.8" y="628.6" width="4" height="4" fill="rgb(245,245,245)"/>
<rect x="181.8" y="628.6" width="4" height="4" fill="rgb(246,246,246)"/>
<rect x="185.8" y="628.6" width="4" height="4" fill="rgb(248,248,248)"/>
<rect x="189.8" y="628.6" width="4" height="4" fill="rgb(249,249,249)"/>
<rect x="69.8" y="632.6" width="4" height="4" fill="rgb(78,78,78)"/>
<rect x="73.8" y="632.6" width="4" height="4" fill="rgb(5,5,5)"/>
<rect x="77.8" y="632.6" width="4" height="4" fill="rgb(0,0,0)"/>
<rect x="81.8" y="632.6" width="4" height="4" fill="rgb(0,0,0)"/>
<rect x="85.8" y="632.6" width="4" height="4" fill="rgb(0,0,0)"/>
<rect x="89.8" y="632.6" width="4" height="4" fill="rgb(0,0,0)"/>
<rect x="93.8" y="632.6" width="4" height="4" fill="rgb(0,0,0)"/>
<rect x="97.8" y="632.6" width="4" height="4" fill="rgb(0,0,0)"/>
<rect x="101.8" y="632.6" width="4" height="4" fill="rgb(0,0,0)"/>
<rect x="105.8" y="632.6" width="4" height="4" fill="rgb(0,0,0)"/>
<rect x="109.8" y="632.6" width="4" height="4" fill="rgb(0,0,0)"/>
<rect x="113.8" y="632.6" width="4" height="4" fill="rgb(0,0,0)"/>
<rect x="117.8" y="632.6" width="4" height="4" fill="rgb(0,0,0)"/>
<rect x="121.8" y="632.6" width="4" height="4" fill="rgb(0,0,0)"/>
<rect x="125.8" y="632.6" width="4" height="4" fill="rgb(54,54,54)"/>
<rect x="129.8" y="632.6" width="4" height="4" fill="rgb(156,156,156)"/>
<rect x="133.8" y="632.6" width="4" height="4" fill="rgb(221,221,221)"/>
<rect x="137.8" y="632.6" width="4" height="4" fill="rgb(224,224,224)"/>
<rect x="141.8" y="632.6" width="4" height="4" fill="rgb(226,226,226)"/>
<rect x="145.8" y="632.6" width="4" height="4" fill="rgb(229,229,229)"/>
<rect x="149.8" y="632.6" width="4" height="4" fill="rgb(231,231,231)"/>
<rect x="153.8" y="632.6" width="4" height="4" fill="rgb(233,233,233)"/>
<rect x="157.8" y="632.6" width="4" height="4" fill="rgb(236,236,236)"/>
<rect x="161.8" y="632.6" width="4" height="4" fill="rgb(238,238,238)"/>
<rect x="165.8" y="632.6" width="4" height="4" fill="rgb(240,240,240)"/>
<rect x="169.8" y="632.6" width="4" height="4" fill="rgb(242,242,242)"/>
<rect x="173.8" y="632.6" width="4" height="4" fill="rgb(243,243,243)"/>
<rect x="177.8" y="632.6" width="4" height="4" fill="rgb(245,245,245)"/>
<rect x="181.8" y="632.6" width="4" height="4" fill="rgb(246,246,246)"/>
<rect x="185.8" y="632.6" width="4" height="4" fill="rgb(248,248,248)"/>
<rect x="189.8" y="632.6" width="4" height="4" fill="rgb(249,249,249)"/>
<rect x="69.8" y="636.6" width="4" height="4" fill="rgb(85,85,85)"/>
<rect x="73.8" y="636.6" width="4" height="4" fill="rgb(9,9,9)"/>
<rect x="77.8" y="636.6" width="4" height="4" fill="rgb(0,0,0)"/>
<rect x="81.8" y="636.6" width="4" height="4" fill="rgb(0,0,0)"/>
<rect x="85.8" y="636.6" width="4" height="4" fill="rgb(0,0,0)"/>
<rect x="89.8" y="636.6" width="4" height="4" fill="rgb(0,0,0)"/>
<rect x="93.8" y="636.6" width="4" height="4" fill="rgb(0,0,0)"/>
<rect x="97.8" y="636.6" width="4" height="4" fill="rgb(0,0,0)"/>
<rect x="101.8" y="636.6" width="4" height="4" fill="rgb(0,0,0)"/>
<rect x="105.8" y="636.6" width="4" height="4" fill="rgb(0,0,0)"/>
<rect x="109.8" y="636.6" width="4" height="4" fill="rgb(0,0,0)"/>
<rect x="113.8" y="636.6" width="4" height="4" fill="rgb(0,0,0)"/>
<rect x="117.8" y="636.6" width="4" height="4" fill="rgb(0,0,0)"/>
<rect x="121.8" y="636.6" width="4" height="4" fill="rgb(1,1,1)"/>
<rect x="125.8" y="636.6" width="4" height="4" fill="rgb(61,61,61)"/>
<rect x="129.8" y="636.6" width="4" height="4" fill="rgb(163,163,163)"/>
<rect x="133.8" y="636.6" width="4" height="4" fill="rgb(222,222,222)"/>
<rect x="137.8" y="636.6" width="4" height="4" fill="rgb(224,224,224)"/>
<rect x="141.8" y="636.6" width="4" height="4" fill="rgb(226,226,226)"/>
<rect x="145.8" y="636.6" width="4" height="4" fill="rgb(229,229,229)"/>
<rect x="149.8" y="636.6" width="4" height="4" fill="rgb(231,231,231)"/>
<rect x="153.8" y="636.6" width="4" height="4" fill="rgb(233,233,233)"/>
<rect x="157.8" y="636.6" width="4" height="4" fill="rgb(236,236,236)"/>
<rect x="161.8" y="636.6" width="4" height="4" fill="rgb(238,238,238)"/>
<rect x="165.8" y="636.6" width="4" height="4" fill="rgb(240,240,240)"/>
<rect x="169.8" y="636.6" width="4" height="4" fill="rgb(242,242,242)"/>
<rect x="173.8" y="636.6" width="4" height="4" fill="rgb(243,243,243)"/>
<rect x="177.8" y="636.6" width="4" height="4" fill="rgb(245,245,245)"/>
<rect x="181.8" y="636.6" width="4" height="4" fill="rgb(246,246,246)"/>
<rect x="185.8" y="636.6" width="4" height="4" fill="rgb(248,248,248)"/>
<rect x="189.8" y="636.6" width="4" height="4" fill="rgb(249,249,249)"/>
<rect x="69.8" y="640.6" width="4" height="4" fill="rgb(107,107,107)"/>
<rect x="73.8" y="640.6" width="4" height="4" fill="rgb(22,22,22)"/>
<rect x="77.8" y="640.6" width="4" height="4" fill="rgb(0,0,0)"/>
<rect x="81.8" y="640.6" width="4" height="4" fill="rgb(0,0,0)"/>
<rect x="85.8" y="640.6" width="4" height="4" fill="rgb(0,0,0)"/>
<rect x="89.8" y="640.6" width="4" height="4" fill="rgb(0,0,0)"/>
<rect x="93.8" y="640.6" width="4" height="4" fill="rgb(0,0,0)"/>
<rect x="97.8" y="640.6" width="4" height="4" fill="rgb(0,0,0)"/>
<rect x="101.8" y="640.6" width="4" height="4" fill="rgb(0,0,0)"/>
<rect x="105.8" y="640.6" width="4" height="4" fill="rgb(0,0,0)"/>
<rect x="109.8" y="640.6" width="4" height="4" fill="rgb(0,0,0)"/>
<rect x="113.8" y="640.6" width="4" height="4" fill="rgb(0,0,0)"/>
<rect x="117.8" y="640.6" width="4" height="4" fill="rgb(0,0,0)"/>
<rect x="121.8" y="640.6" width="4" height="4" fill="rgb(9,9,9)"/>
<rect x="125.8" y="640.6" width="4" height="4" fill="rgb(82,82,82)"/>
<rect x="129.8" y="640.6" width="4" height="4" fill="rgb(182,182,182)"/>
<rect x="133.8" y="640.6" width="4" height="4" fill="rgb(222,222,222)"/>
<rect x="137.8" y="640.6" width="4" height="4" fill="rgb(224,224,224)"/>
<rect x="141.8" y="640.6" width="4" height="4" fill="rgb(227,227,227)"/>
<rect x="145.8" y="640.6" width="4" height="4" fill="rgb(229,229,229)"/>
<rect x="149.8" y="640.6" width="4" height="4" fill="rgb(231,231,231)"/>
<rect x="153.8" y="640.6" width="4" height="4" fill="rgb(234,234,234)"/>
<rect x="157.8" y="640.6" width="4" height="4" fill="rgb(236,236,236)"/>
<rect x="161.8" y="640.6" width="4" height="4" fill="rgb(238,238,238)"/>
<rect x="165.8" y="640.6" width="4" height="4" fill="rgb(240,240,240)"/>
<rect x="169.8" y="640.6" width="4" height="4" fill="rgb(242,242,242)"/>
<rect x="173.8" y="640.6" width="4" height="4" fill="rgb(243,243,243)"/>
<rect x="177.8" y="640.6" width="4" height="4" fill="rgb(245,245,245)"/>
<rect x="181.8" y="640.6" width="4" height="4" fill="rgb(246,246,246)"/>
<rect x="185.8" y="640.6" width="4" height="4" fill="rgb(248,248,248)"/>
<rect x="189.8" y="640.6" width="4" height="4" fill="rgb(249,249,249)"/>
<rect x="69.8" y="644.6" width="4" height="4" fill="rgb(142,142,142)"/>
<rect x="73.8" y="644.6" width="4" height="4" fill="rgb(50,50,50)"/>
<rect x="77.8" y="644.6" width="4" height="4" fill="rgb(1,1,1)"/>
<rect x="81.8" y="644.6" width="4" height="4" fill="rgb(0,0,0)"/>
<rect x="85.8" y="644.6" width="4" height="4" fill="rgb(0,0,0)"/>
<rect x="89.8" y="644.6" width="4" height="4" fill="rgb(0,0,0)"/>
<rect x="93.8" y="644.6" width="4" height="4" fill="rgb(0,0,0)"/>
<rect x="97.8" y="644.6" width="4" height="4" fill="rgb(0,0,0)"/>
<rect x="101.8" y="644.6" width="4" height="4" fill="rgb(0,0,0)"/>
<rect x="105.8" y="644.6" width="4" height="4" fill="rgb(0,0,0)"/>
<rect x="109.8" y="644.6" width="4" height="4" fill="rgb(0,0,0)"/>
<rect x="113.8" y="644.6" width="4" height="4" fill="rgb(0,0,0)"/>
<rect x="117.8" y="644.6" width="4" height="4" fill="rgb(0,0,0)"/>
<rect x="121.8" y="644.6" width="4" height="4" fill="rgb(32,32,32)"/>
<rect x="125.8" y="644.6" width="4" height="4" fill="rgb(118,118,118)"/>
<rect x="129.8" y="644.6" width="4" height="4" fill="rgb(209,209,209)"/>
<rect x="133.8" y="644.6" width="4" height="4" fill="rgb(223,223,223)"/>
<rect x="137.8" y="644.6" width="4" height="4" fill="rgb(225,225,225)"/>
<rect x="141.8" y="644.6" width="4" height="4" fill="rgb(227,227,227)"/>
<rect x="145.8" y="644.6" width="4" height="4" fill="rgb(229,229,229)"/>
<rect x="149.8" y="644.6" width="4" height="4" fill="rgb(232,232,232)"/>
<rect x="153.8" y="644.6" width="4" height="4" fill="rgb(234,234,234)"/>
<rect x="157.8" y="644.6" width="4" height="4" fill="rgb(236,236,236)"/>
<rect x="161.8" y="644.6" width="4" height="4" fill="rgb(238,238,238)"/>
<rect x="165.8" y="644.6" width="4" height="4" fill="rgb(240,240,240)"/>
<rect x="169.8" y="644.6" width="4" height="4" fill="rgb(242,242,242)"/>
<rect x="173.8" y="644.6" width="4" height="4" fill="rgb(244,244,244)"/>
<rect x="177.8" y="644.6" width="4" height="4" fill="rgb(245,245,245)"/>
<rect x="181.8" y="644.6" width="4" height="4" fill="rgb(247,247,247)"/>
<rect x="185.8" y="644.6" width="4" height="4" fill="rgb(248,248,248)"/>
<rect x="189.8" y="644.6" width="4" height="4" fill="rgb(249,249,249)"/>
<rect x="69.8" y="648.6" width="4" height="4" fill="rgb(187,187,187)"/>
<rect x="73.8" y="648.6" width="4" height="4" fill="rgb(98,98,98)"/>
<rect x="77.8" y="648.6" width="4" height="4" fill="rgb(26,26,26)"/>
<rect x="81.8" y="648.6" width="4" height="4" fill="rgb(0,0,0)"/>
<rect x="85.8" y="648.6" width="4" height="4" fill="rgb(0,0,0)"/>
<rect x="89.8" y="648.6" width="4" height="4" fill="rgb(0,0,0)"/>
<rect x="93.8" y="648.6" width="4" height="4" fill="rgb(0,0,0)"/>
<rect x="97.8" y="648.6" width="4" height="4" fill="rgb(0,0,0)"/>
<rect x="101.8" y="648.6" width="4" height="4" fill="rgb(0,0,0)"/>
<rect x="105.8" y="648.6" width="4" height="4" fill="rgb(0,0,0)"/>
<rect x="109.8" y="648.6" width="4" height="4" fill="rgb(0,0,0)"/>
<rect x="113.8" y="648.6" width="4" height="4" fill="rgb(0,0,0)"/>
<rect x="117.8" y="648.6" width="4" height="4" fill="rgb(14,14,14)"/>
<rect x="121.8" y="648.6" width="4" height="4" fill="rgb(77,77,77)"/>
<rect x="125.8" y="648.6" width="4" height="4" fill="rgb(165,165,165)"/>
<rect x="129.8" y="648.6" width="4" height="4" fill="rgb(221,221,221)"/>
<rect x="133.8" y="648.6" width="4" height="4" fill="rgb(223,223,223)"/>
<rect x="137.8" y="648.6" width="4" height="4" fill="rgb(226,226,226)"/>
<rect x="141.8" y="648.6" width="4" height="4" fill="rgb(228,228,228)"/>
<rect x="145.8" y="648.6" width="4" height="4" fill="rgb(230,230,230)"/>
<rect x="149.8" y="648.6" width="4" height="4" fill="rgb(232,232,232)"/>
<rect x="153.8" y="648.6" width="4" height="4" fill="rgb(235,235,235)"/>
<rect x="157.8" y="648.6" width="4" height="4" fill="rgb(237,237,237)"/>
<rect x="161.8" y="648.6" width="4" height="4" fill="rgb(239,239,239)"/>
<rect x="165.8" y="648.6" width="4" height="4" fill="rgb(241,241,241)"/>
<rect x="169.8" y="648.6" width="4" height="4" fill="rgb(242,242,242)"/>
<rect x="173.8" y="648.6" width="4" height="4" fill="rgb(244,244,244)"/>
<rect x="177.8" y="648.6" width="4" height="4" fill="rgb(245,245,245)"/>
<rect x="181.8" y="648.6" width="4" height="4" fill="rgb(247,247,247)"/>
<rect x="185.8" y="648.6" width="4" height="4" fill="rgb(248,248,248)"/>
<rect x="189.8" y="648.6" width="4" height="4" fill="rgb(249,249,249)"/>
<rect x="69.8" y="652.6" width="4" height="4" fill="rgb(221,221,221)"/>
<rect x="73.8" y="652.6" width="4" height="4" fill="rgb(161,161,161)"/>
<rect x="77.8" y="652.6" width="4" height="4" fill="rgb(83,83,83)"/>
<rect x="81.8" y="652.6" width="4" height="4" fill="rgb(25,25,25)"/>
<rect x="85.8" y="652.6" width="4" height="4" fill="rgb(0,0,0)"/>
<rect x="89.8" y="652.6" width="4" height="4" fill="rgb(0,0,0)"/>
<rect x="93.8" y="652.6" width="4" height="4" fill="rgb(0,0,0)"/>
<rect x="97.8" y="652.6" width="4" height="4" fill="rgb(0,0,0)"/>
<rect x="101.8" y="652.6" width="4" height="4" fill="rgb(0,0,0)"/>
<rect x="105.8" y="652.6" width="4" height="4" fill="rgb(0,0,0)"/>
<rect x="109.8" y="652.6" width="4" height="4" fill="rgb(0,0,0)"/>
<rect x="113.8" y="652.6" width="4" height="4" fill="rgb(15,15,15)"/>
<rect x="117.8" y="652.6" width="4" height="4" fill="rgb(66,66,66)"/>
<rect x="121.8" y="652.6" width="4" height="4" fill="rgb(141,141,141)"/>
<rect x="125.8" y="652.6" width="4" height="4" fill="rgb(216,216,216)"/>
<rect x="129.8" y="652.6" width="4" height="4" fill="rgb(222,222,222)"/>
<rect x="133.8" y="652.6" width="4" height="4" fill="rgb(225,225,225)"/>
<rect x="137.8" y="652.6" width="4" height="4" fill="rgb(227,227,227)"/>
<rect x="141.8" y="652.6" width="4" height="4" fill="rgb(229,229,229)"/>
<rect x="145.8" y="652.6" width="4" height="4" fill="rgb(231,231,231)"/>
<rect x="149.8" y="652.6" width="4" height="4" fill="rgb(233,233,233)"/>
<rect x="153.8" y="652.6" width="4" height="4" fill="rgb(235,235,235)"/>
<rect x="157.8" y="652.6" width="4" height="4" fill="rgb(237,237,237)"/>
<rect x="161.8" y="652.6" width="4" height="4" fill="rgb(239,239,239)"/>
<rect x="165.8" y="652.6" width="4" height="4" fill="rgb(241,241,241)"/>
<rect x="169.8" y="652.6" width="4" height="4" fill="rgb(243,243,243)"/>
<rect x="173.8" y="652.6" width="4" height="4" fill="rgb(244,244,244)"/>
<rect x="177.8" y="652.6" width="4" height="4" fill="rgb(246,246,246)"/>
<rect x="181.8" y="652.6" width="4" height="4" fill="rgb(247,247,247)"/>
<rect x="185.8" y="652.6" width="4" height="4" fill="rgb(248,248,248)"/>
<rect x="189.8" y="652.6" width="4" height="4" fill="rgb(249,249,249)"/>
<rect x="69.8" y="656.6" width="4" height="4" fill="rgb(222,222,222)"/>
<rect x="73.8" y="656.6" width="4" height="4" fill="rgb(221,221,221)"/>
<rect x="77.8" y="656.6" width="4" height="4" fill="rgb(160,160,160)"/>
<rect x="81.8" y="656.6" width="4" height="4" fill="rgb(96,96,96)"/>
<rect x="85.8" y="656.6" width="4" height="4" fill="rgb(47,47,47)"/>
<rect x="89.8" y="656.6" width="4" height="4" fill="rgb(18,18,18)"/>
<rect x="93.8" y="656.6" width="4" height="4" fill="rgb(6,6,6)"/>
<rect x="97.8" y="656.6" width="4" height="4" fill="rgb(2,2,2)"/>
<rect x="101.8" y="656.6" width="4" height="4" fill="rgb(4,4,4)"/>
<rect x="105.8" y="656.6" width="4" height="4" fill="rgb(13,13,13)"/>
<rect x="109.8" y="656.6" width="4" height="4" fill="rgb(37,37,37)"/>
<rect x="113.8" y="656.6" width="4" height="4" fill="rgb(82,82,82)"/>
<rect x="117.8" y="656.6" width="4" height="4" fill="rgb(143,143,143)"/>
<rect x="121.8" y="656.6" width="4" height="4" fill="rgb(208,208,208)"/>
<rect x="125.8" y="656.6" width="4" height="4" fill="rgb(222,222,222)"/>
<rect x="129.8" y="656.6" width="4" height="4" fill="rgb(224,224,224)"/>
<rect x="133.8" y="656.6" width="4" height="4" fill="rgb(226,226,226)"/>
<rect x="137.8" y="656.6" width="4" height="4" fill="rgb(228,228,228)"/>
<rect x="141.8" y="656.6" width="4" height="4" fill="rgb(230,230,230)"/>
<rect x="145.8" y="656.6" width="4" height="4" fill="rgb(232,232,232)"/>
<rect x="149.8" y="656.6" width="4" height="4" fill="rgb(234,234,234)"/>
<rect x="153.8" y="656.6" width="4" height="4" fill="rgb(236,236,236)"/>
<rect x="157.8" y="656.6" width="4" height="4" fill="rgb(238,238,238)"/>
<rect x="161.8" y="656.6" width="4" height="4" fill="rgb(240,240,240)"/>
<rect x="165.8" y="656.6" width="4" height="4" fill="rgb(242,242,242)"/>
<rect x="169.8" y="656.6" width="4" height="4" fill="rgb(243,243,243)"/>
<rect x="173.8" y="656.6" width="4" height="4" fill="rgb(245,245,245)"/>
<rect x="177.8" y="656.6" width="4" height="4" fill="rgb(246,246,246)"/>
<rect x="181.8" y="656.6" width="4" height="4" fill="rgb(247,247,247)"/>
<rect x="185.8" y="656.6" width="4" height="4" fill="rgb(248,248,248)"/>
<rect x="189.8" y="656.6" width="4" height="4" fill="rgb(249,249,249)"/>
<rect x="69.8" y="660.6" width="4" height="4" fill="rgb(224,224,224)"/>
<rect x="73.8" y="660.6" width="4" height="4" fill="rgb(222,222,222)"/>
<rect x="77.8" y="660.6" width="4" height="4" fill="rgb(221,221,221)"/>
<rect x="81.8" y="660.6" width="4" height="4" fill="rgb(183,183,183)"/>
<rect x="85.8" y="660.6" width="4" height="4" fill="rgb(136,136,136)"/>
<rect x="89.8" y="660.6" width="4" height="4" fill="rgb(100,100,100)"/>
<rect x="93.8" y="660.6" width="4" height="4" fill="rgb(77,77,77)"/>
<rect x="97.8" y="660.6" width="4" height="4" fill="rgb(68,68,68)"/>
<rect x="101.8" y="660.6" width="4" height="4" fill="rgb(73,73,73)"/>
<rect x="105.8" y="660.6" width="4" height="4" fill="rgb(92,92,92)"/>
<rect x="109.8" y="660.6" width="4" height="4" fill="rgb(126,126,126)"/>
<rect x="113.8" y="660.6" width="4" height="4" fill="rgb(171,171,171)"/>
<rect x="117.8" y="660.6" width="4" height="4" fill="rgb(219,219,219)"/>
<rect x="121.8" y="660.6" width="4" height="4" fill="rgb(222,222,222)"/>
<rect x="125.8" y="660.6" width="4" height="4" fill="rgb(224,224,224)"/>
<rect x="129.8" y="660.6" width="4" height="4" fill="rgb(225,225,225)"/>
<rect x="133.8" y="660.6" width="4" height="4" fill="rgb(227,227,227)"/>
<rect x="137.8" y="660.6" width="4" height="4" fill="rgb(229,229,229)"/>
<rect x="141.8" y="660.6" width="4" height="4" fill="rgb(231,231,231)"/>
<rect x="145.8" y="660.6" width="4" height="4" fill="rgb(233,233,233)"/>
<rect x="149.8" y="660.6" width="4" height="4" fill="rgb(235,235,235)"/>
<rect x="153.8" y="660.6" width="4" height="4" fill="rgb(237,237,237)"/>
<rect x="157.8" y="660.6" width="4" height="4" fill="rgb(239,239,239)"/>
<rect x="161.8" y="660.6" width="4" height="4" fill="rgb(241,241,241)"/>
<rect x="165.8" y="660.6" width="4" height="4" fill="rgb(242,242,242)"/>
<rect x="169.8" y="660.6" width="4" height="4" fill="rgb(244,244,244)"/>
<rect x="173.8" y="660.6" width="4" height="4" fill="rgb(245,245,245)"/>
<rect x="177.8" y="660.6" width="4" height="4" fill="rgb(247,247,247)"/>
<rect x="181.8" y="660.6" width="4" height="4" fill="rgb(248,248,248)"/>
<rect x="185.8" y="660.6" width="4" height="4" fill="rgb(249,249,249)"/>
<rect x="69.8" y="664.6" width="4" height="4" fill="rgb(226,226,226)"/>
<rect x="73.8" y="664.6" width="4" height="4" fill="rgb(224,224,224)"/>
<rect x="77.8" y="664.6" width="4" height="4" fill="rgb(223,223,223)"/>
<rect x="81.8" y="664.6" width="4" height="4" fill="rgb(222,222,222)"/>
<rect x="85.8" y="664.6" width="4" height="4" fill="rgb(221,221,221)"/>
<rect x="89.8" y="664.6" width="4" height="4" fill="rgb(198,198,198)"/>
<rect x="93.8" y="664.6" width="4" height="4" fill="rgb(179,179,179)"/>
<rect x="97.8" y="664.6" width="4" height="4" fill="rgb(171,171,171)"/>
<rect x="101.8" y="664.6" width="4" height="4" fill="rgb(176,176,176)"/>
<rect x="105.8" y="664.6" width="4" height="4" fill="rgb(192,192,192)"/>
<rect x="109.8" y="664.6" width="4" height="4" fill="rgb(217,217,217)"/>
<rect x="113.8" y="664.6" width="4" height="4" fill="rgb(222,222,222)"/>
<rect x="117.8" y="664.6" width="4" height="4" fill="rgb(223,223,223)"/>
<rect x="121.8" y="664.6" width="4" height="4" fill="rgb(224,224,224)"/>
<rect x="125.8" y="664.6" width="4" height="4" fill="rgb(225,225,225)"/>
<rect x="129.8" y="664.6" width="4" height="4" fill="rgb(227,227,227)"/>
<rect x="133.8" y="664.6" width="4" height="4" fill="rgb(229,229,229)"/>
<rect x="137.8" y="664.6" width="4" height="4" fill="rgb(231,231,231)"/>
<rect x="141.8" y="664.6" width="4" height="4" fill="rgb(232,232,232)"/>
<rect x="145.8" y="664.6" width="4" height="4" fill="rgb(234,234,234)"/>
<rect x="149.8" y="664.6" width="4" height="4" fill="rgb(236,236,236)"/>
<rect x="153.8" y="664.6" width="4" height="4" fill="rgb(238,238,238)"/>
<rect x="157.8" y="664.6" width="4" height="4" fill="rgb(240,240,240)"/>
<rect x="161.8" y="664.6" width="4" height="4" fill="rgb(241,241,241)"/>
<rect x="165.8" y="664.6" width="4" height="4" fill="rgb(243,243,243)"/>
<rect x="169.8" y="664.6" width="4" height="4" fill="rgb(244,244,244)"/>
<rect x="173.8" y="664.6" width="4" height="4" fill="rgb(246,246,246)"/>
<rect x="177.8" y="664.6" width="4" height="4" fill="rgb(247,247,247)"/>
<rect x="181.8" y="664.6" width="4" height="4" fill="rgb(248,248,248)"/>
<rect x="185.8" y="664.6" width="4" height="4" fill="rgb(249,249,249)"/>
<rect x="69.8" y="668.6" width="4" height="4" fill="rgb(228,228,228)"/>
<rect x="73.8" y="668.6" width="4" height="4" fill="rgb(226,226,226)"/>
<rect x="77.8" y="668.6" width="4" height="4" fill="rgb(225,225,225)"/>
<rect x="81.8" y="668.6" width="4" height="4" fill="rgb(224,224,224)"/>
<rect x="85.8" y="668.6" width="4" height="4" fill="rgb(223,223,223)"/>
<rect x="89.8" y="668.6" width="4" height="4" fill="rgb(222,222,222)"/>
<rect x="93.8" y="668.6" width="4" height="4" fill="rgb(222,222,222)"/>
<rect x="97.8" y="668.6" width="4" height="4" fill="rgb(222,222,222)"/>
<rect x="101.8" y="668.6" width="4" height="4" fill="rgb(222,222,222)"/>
<rect x="105.8" y="668.6" width="4" height="4" fill="rgb(222,222,222)"/>
<rect x="109.8" y="668.6" width="4" height="4" fill="rgb(223,223,223)"/>
<rect x="113.8" y="668.6" width="4" height="4" fill="rgb(224,224,224)"/>
<rect x="117.8" y="668.6" width="4" height="4" fill="rgb(225,225,225)"/>
<rect x="121.8" y="668.6" width="4" height="4" fill="rgb(226,226,226)"/>
<rect x="125.8" y="668.6" width="4" height="4" fill="rgb(227,227,227)"/>
<rect x="129.8" y="668.6" width="4" height="4" fill="rgb(229,229,229)"/>
<rect x="133.8" y="668.6" width="4" height="4" fill="rgb(230,230,230)"/>
<rect x="137.8" y="668.6" width="4" height="4" fill="rgb(232,232,232)"/>
<rect x="141.8" y="668.6" width="4" height="4" fill="rgb(234,234,234)"/>
<rect x="145.8" y="668.6" width="4" height="4" fill="rgb(236,236,236)"/>
<rect x="149.8" y="668.6" width="4" height="4" fill="rgb(237,237,237)"/>
<rect x="153.8" y="668.6" width="4" height="4" fill="rgb(239,239,239)"/>
<rect x="157.8" y="668.6" width="4" height="4" fill="rgb(241,241,241)"/>
<rect x="161.8" y="668.6" width="4" height="4" fill="rgb(242,242,242)"/>
<rect x="165.8" y="668.6" width="4" height="4" fill="rgb(244,244,244)"/>
<rect x="169.8" y="668.6" width="4" height="4" fill="rgb(245,245,245)"/>
<rect x="173.8" y="668.6" width="4" height="4" fill="rgb(246,246,246)"/>
<rect x="177.8" y="668.6" width="4" height="4" fill="rgb(248,248,248)"/>
<rect x="181.8" y="668.6" width="4" height="4" fill="rgb(249,249,249)"/>
<rect x="185.8" y="668.6" width="4" height="4" fill="rgb(249,249,249)"/>
<rect x="69.8" y="672.6" width="4" height="4" fill="rgb(230,230,230)"/>
<rect x="73.8" y="672.6" width="4" height="4" fill="rgb(228,228,228)"/>
<rect x="77.8" y="672.6" width="4" height="4" fill="rgb(227,227,227)"/>
<rect x="81.8" y="672.6" width="4" height="4" fill="rgb(226,226,226)"/>
<rect x="85.8" y="672.6" width="4" height="4" fill="rgb(225,225,225)"/>
<rect x="89.8" y="672.6" width="4" height="4" fill="rgb(225,225,225)"/>
<rect x="93.8" y="672.6" width="4" height="4" fill="rgb(224,224,224)"/>
<rect x="97.8" y="672.6" width="4" height="4" fill="rgb(224,224,224)"/>
<rect x="101.8" y="672.6" width="4" height="4" fill="rgb(224,224,224)"/>
<rect x="105.8" y="672.6" width="4" height="4" fill="rgb(225,225,225)"/>
<rect x="109.8" y="672.6" width="4" height="4" fill="rgb(225,225,225)"/>
<rect x="113.8" y="672.6" width="4" height="4" fill="rgb(226,226,226)"/>
<rect x="117.8" y="672.6" width="4" height="4" fill="rgb(227,227,227)"/>
<rect x="121.8" y="672.6" width="4" height="4" fill="rgb(228,228,228)"/>
<rect x="125.8" y="672.6" width="4" height="4" fill="rgb(229,229,229)"/>
<rect x="129.8" y="672.6" width="4" height="4" fill="rgb(231,231,231)"/>
<rect x="133.8" y="672.6" width="4" height="4" fill="rgb(232,232,232)"/>
<rect x="137.8" y="672.6" width="4" height="4" fill="rgb(234,234,234)"/>
<rect x="141.8" y="672.6" width="4" height="4" fill="rgb(235,235,235)"/>
<rect x="145.8" y="672.6" width="4" height="4" fill="rgb(237,237,237)"/>
<rect x="149.8" y="672.6" width="4" height="4" fill="rgb(239,239,239)"/>
<rect x="153.8" y="672.6" width="4" height="4" fill="rgb(240,240,240)"/>
<rect x="157.8" y="672.6" width="4" height="4" fill="rgb(242,242,242)"/>
<rect x="161.8" y="672.6" width="4" height="4" fill="rgb(243,243,243)"/>
<rect x="165.8" y="672.6" width="4" height="4" fill="rgb(245,245,245)"/>
<rect x="169.8" y="672.6" width="4" height="4" fill="rgb(246,246,246)"/>
<rect x="173.8" y="672.6" width="4" height="4" fill="rgb(247,247,247)"/>
<rect x="177.8" y="672.6" width="4" height="4" fill="rgb(248,248,248)"/>
<rect x="181.8" y="672.6" width="4" height="4" fill="rgb(249,249,249)"/>
<rect x="69.8" y="676.6" width="4" height="4" fill="rgb(232,232,232)"/>
<rect x="73.8" y="676.6" width="4" height="4" fill="rgb(230,230,230)"/>
<rect x="77.8" y="676.6" width="4" height="4" fill="rgb(229,229,229)"/>
<rect x="81.8" y="676.6" width="4" height="4" fill="rgb(228,228,228)"/>
<rect x="85.8" y="676.6" width="4" height="4" fill="rgb(228,228,228)"/>
<rect x="89.8" y="676.6" width="4" height="4" fill="rgb(227,227,227)"/>
<rect x="93.8" y="676.6" width="4" height="4" fill="rgb(227,227,227)"/>
<rect x="97.8" y="676.6" width="4" height="4" fill="rgb(227,227,227)"/>
<rect x="101.8" y="676.6" width="4" height="4" fill="rgb(227,227,227)"/>
<rect x="105.8" y="676.6" width="4" height="4" fill="rgb(227,227,227)"/>
<rect x="109.8" y="676.6" width="4" height="4" fill="rgb(227,227,227)"/>
<rect x="113.8" y="676.6" width="4" height="4" fill="rgb(228,228,228)"/>
<rect x="117.8" y="676.6" width="4" height="4" fill="rgb(229,229,229)"/>
<rect x="121.8" y="676.6" width="4" height="4" fill="rgb(230,230,230)"/>
<rect x="125.8" y="676.6" width="4" height="4" fill="rgb(231,231,231)"/>
<rect x="129.8" y="676.6" width="4" height="4" fill="rgb(233,233,233)"/>
<rect x="133.8" y="676.6" width="4" height="4" fill="rgb(234,234,234)"/>
<rect x="137.8" y="676.6" width="4" height="4" fill="rgb(235,235,235)"/>
<rect x="141.8" y="676.6" width="4" height="4" fill="rgb(237,237,237)"/>
<rect x="145.8" y="676.6" width="4" height="4" fill="rgb(238,238,238)"/>
<rect x="149.8" y="676.6" width="4" height="4" fill="rgb(240,240,240)"/>
<rect x="153.8" y="676.6" width="4" height="4" fill="rgb(241,241,241)"/>
<rect x="157.8" y="676.6" width="4" height="4" fill="rgb(243,243,243)"/>
<rect x="161.8" y="676.6" width="4" height="4" fill="rgb(244,244,244)"/>
<rect x="165.8" y="676.6" width="4" height="4" fill="rgb(245,245,245)"/>
<rect x="169.8" y="676.6" width="4" height="4" fill="rgb(246,246,246)"/>
<rect x="173.8" y="676.6" width="4" height="4" fill="rgb(248,248,248)"/>
<rect x="177.8" y="676.6" width="4" height="4" fill="rgb(249,249,249)"/>
<rect x="181.8" y="676.6" width="4" height="4" fill="rgb(249,249,249)"/>
</g>
<g>
<circle cx="120.0" cy="564.7" r="12.2" fill="none" stroke="#9a9a9a" stroke-width="2.6" stroke-dasharray="2.4,1.7"/>
<circle cx="120.0" cy="564.7" r="12" fill="none" stroke="#999" stroke-width="1"/>
<circle cx="109.5" cy="585.7" r="12" fill="none" stroke="#6a6a6a" stroke-width="1.1" stroke-opacity="0.9"/>
<circle cx="133.1" cy="584.4" r="12" fill="none" stroke="#6a6a6a" stroke-width="1.1" stroke-opacity="0.9"/>
<circle cx="157.4" cy="582.4" r="12.2" fill="none" stroke="#9a9a9a" stroke-width="2.6" stroke-dasharray="2.4,1.7"/>
<circle cx="157.4" cy="582.4" r="12" fill="none" stroke="#999" stroke-width="1"/>
<circle cx="99.0" cy="608.0" r="12" fill="none" stroke="#6a6a6a" stroke-width="1.1" stroke-opacity="0.9"/>
<circle cx="122.7" cy="606.7" r="12" fill="none" stroke="#6a6a6a" stroke-width="1.1" stroke-opacity="0.9"/>
<circle cx="146.9" cy="604.0" r="12" fill="none" stroke="#0000ff" stroke-width="1.4"/>
<circle cx="146.9" cy="604.0" r="12.4" fill="none" stroke="#0000ff" stroke-width="2.6" stroke-dasharray="2.4,1.7"/>
<circle cx="169.9" cy="602.1" r="12" fill="none" stroke="#f5a300" stroke-width="1.4"/>
<circle cx="169.9" cy="602.1" r="12.4" fill="none" stroke="#f5a300" stroke-width="2.6" stroke-dasharray="2.4,1.7"/>
<circle cx="194.2" cy="600.8" r="12.2" fill="none" stroke="#9a9a9a" stroke-width="2.6" stroke-dasharray="2.4,1.7"/>
<circle cx="194.2" cy="600.8" r="12" fill="none" stroke="#999" stroke-width="1"/>
<circle cx="112.8" cy="627.0" r="12" fill="none" stroke="#6a6a6a" stroke-width="1.1" stroke-opacity="0.9"/>
<circle cx="135.8" cy="625.7" r="12" fill="none" stroke="#ff0000" stroke-width="1.4"/>
<circle cx="159.4" cy="623.7" r="12" fill="none" stroke="#00ee00" stroke-width="1.4"/>
<circle cx="183.7" cy="622.4" r="12.2" fill="none" stroke="#9a9a9a" stroke-width="2.6" stroke-dasharray="2.4,1.7"/>
<circle cx="183.7" cy="622.4" r="12" fill="none" stroke="#999" stroke-width="1"/>
<circle cx="125.9" cy="648.7" r="12" fill="none" stroke="#6a6a6a" stroke-width="1.1" stroke-opacity="0.9"/>
<circle cx="149.6" cy="646.0" r="12" fill="none" stroke="#6a6a6a" stroke-width="1.1" stroke-opacity="0.9"/>
<circle cx="173.2" cy="643.4" r="12" fill="none" stroke="#6a6a6a" stroke-width="1.1" stroke-opacity="0.9"/>
</g>
<rect x="95.9" y="558.4" width="96" height="96" fill="none" stroke="#ff0000" stroke-width="1.1"/>
<text x="143.90" y="547.20" font-size="11" text-anchor="middle" fill="#ff0000" stroke="#ff0000" stroke-width="0.18" textLength="8.00" lengthAdjust="spacingAndGlyphs">N</text>
<text x="81.60" y="609.80" font-size="11" text-anchor="middle" fill="#ff0000" stroke="#ff0000" stroke-width="0.18" textLength="6.60" lengthAdjust="spacingAndGlyphs">E</text>
<line x1="140.7" y1="606.4" x2="147.1" y2="606.4" stroke="#ff0000" stroke-width="1.1"/>
<line x1="143.9" y1="603.2" x2="143.9" y2="609.6" stroke="#ff0000" stroke-width="1.1"/>
<line x1="66.2" y1="670.4" x2="69.8" y2="670.4" stroke="#222" stroke-width="1"/>
<text x="61.80" y="674.00" font-size="10.8" text-anchor="end" stroke="#000" stroke-width="0.18" textLength="14.20" lengthAdjust="spacingAndGlyphs">−4</text>
<line x1="79.9" y1="680.4" x2="79.9" y2="684.0" stroke="#222" stroke-width="1"/>
<text x="79.60" y="696.00" font-size="10.8" text-anchor="middle" stroke="#000" stroke-width="0.18" textLength="13.80" lengthAdjust="spacingAndGlyphs">−4</text>
<line x1="66.2" y1="638.4" x2="69.8" y2="638.4" stroke="#222" stroke-width="1"/>
<text x="61.80" y="642.00" font-size="10.8" text-anchor="end" stroke="#000" stroke-width="0.18" textLength="14.20" lengthAdjust="spacingAndGlyphs">−2</text>
<line x1="111.9" y1="680.4" x2="111.9" y2="684.0" stroke="#222" stroke-width="1"/>
<text x="111.60" y="696.00" font-size="10.8" text-anchor="middle" stroke="#000" stroke-width="0.18" textLength="13.80" lengthAdjust="spacingAndGlyphs">−2</text>
<line x1="66.2" y1="606.4" x2="69.8" y2="606.4" stroke="#222" stroke-width="1"/>
<text x="61.80" y="610.00" font-size="10.8" text-anchor="end" stroke="#000" stroke-width="0.18" textLength="5.70" lengthAdjust="spacingAndGlyphs">0</text>
<line x1="143.9" y1="680.4" x2="143.9" y2="684.0" stroke="#222" stroke-width="1"/>
<text x="143.90" y="696.00" font-size="10.8" text-anchor="middle" stroke="#000" stroke-width="0.18" textLength="5.70" lengthAdjust="spacingAndGlyphs">0</text>
<line x1="66.2" y1="574.4" x2="69.8" y2="574.4" stroke="#222" stroke-width="1"/>
<text x="61.80" y="578.00" font-size="10.8" text-anchor="end" stroke="#000" stroke-width="0.18" textLength="5.70" lengthAdjust="spacingAndGlyphs">2</text>
<line x1="175.9" y1="680.4" x2="175.9" y2="684.0" stroke="#222" stroke-width="1"/>
<text x="175.90" y="696.00" font-size="10.8" text-anchor="middle" stroke="#000" stroke-width="0.18" textLength="5.70" lengthAdjust="spacingAndGlyphs">2</text>
<line x1="66.2" y1="542.4" x2="69.8" y2="542.4" stroke="#222" stroke-width="1"/>
<text x="61.80" y="546.00" font-size="10.8" text-anchor="end" stroke="#000" stroke-width="0.18" textLength="5.70" lengthAdjust="spacingAndGlyphs">4</text>
<line x1="207.9" y1="680.4" x2="207.9" y2="684.0" stroke="#222" stroke-width="1"/>
<text x="207.90" y="696.00" font-size="10.8" text-anchor="middle" stroke="#000" stroke-width="0.18" textLength="5.70" lengthAdjust="spacingAndGlyphs">4</text>
<rect x="69.8" y="532.6" width="147.8" height="147.8" fill="none" stroke="#222" stroke-width="1.1"/>
<text x="124.00" y="707.20" font-size="10.8" stroke="#000" stroke-width="0.18" textLength="39.60" lengthAdjust="spacingAndGlyphs">arcsecs</text>
<text x="287.60" y="526.30" font-size="13.2" stroke="#000" stroke-width="0.18" textLength="83.00" lengthAdjust="spacingAndGlyphs">Lineflux Map</text>
<defs><clipPath id="lclip"><rect x="255.5" y="532.7" width="148.0" height="148.0"/></clipPath><radialGradient id="lfg" cx="275" cy="645" r="105" gradientUnits="userSpaceOnUse"><stop offset="0" stop-color="#3e4a89"/><stop offset="0.4" stop-color="#443a83"/><stop offset="0.62" stop-color="#48206f"/><stop offset="1" stop-color="#46105f"/></radialGradient><filter id="lblur" x="-50%" y="-50%" width="200%" height="200%"><feGaussianBlur stdDeviation="7"/></filter><filter id="lblur2" x="-50%" y="-50%" width="200%" height="200%"><feGaussianBlur stdDeviation="2.5"/></filter></defs>
<g clip-path="url(#lclip)">
<rect x="255.5" y="532.7" width="148.0" height="148.0" fill="url(#lfg)"/>
<ellipse cx="268" cy="590" rx="38" ry="16" transform="rotate(-50 268 590)" fill="#3e4b89" filter="url(#lblur)" opacity="0.95"/>
<g transform="translate(4,5)"><path d="M240.0,616.2 L256.2,616.2 L264.6,610.5 L282.5,611.3 L297.2,618.6 L307.7,628.4 L305.3,643.8 L298.8,664.1 L285.8,665.0 L269.5,660.1 L256.2,655.2 L240.0,655.2 Z" fill="#3b528b" stroke="#3b528b" stroke-width="36" stroke-linejoin="round" filter="url(#lblur)"/></g>
<g transform="translate(3,4)"><path d="M240.0,616.2 L256.2,616.2 L264.6,610.5 L282.5,611.3 L297.2,618.6 L307.7,628.4 L305.3,643.8 L298.8,664.1 L285.8,665.0 L269.5,660.1 L256.2,655.2 L240.0,655.2 Z" fill="#31688e" stroke="#31688e" stroke-width="24" stroke-linejoin="round" filter="url(#lblur2)"/></g>
<g transform="translate(1.8,2.4)"><path d="M240.0,616.2 L256.2,616.2 L264.6,610.5 L282.5,611.3 L297.2,618.6 L307.7,628.4 L305.3,643.8 L298.8,664.1 L285.8,665.0 L269.5,660.1 L256.2,655.2 L240.0,655.2 Z" fill="#26828e" stroke="#26828e" stroke-width="15" stroke-linejoin="miter"/></g>
<g transform="translate(0.8,1)"><path d="M240.0,616.2 L256.2,616.2 L264.6,610.5 L282.5,611.3 L297.2,618.6 L307.7,628.4 L305.3,643.8 L298.8,664.1 L285.8,665.0 L269.5,660.1 L256.2,655.2 L240.0,655.2 Z" fill="#1fa088" stroke="#1fa088" stroke-width="9" stroke-linejoin="miter"/></g>
<path d="M240.0,616.2 L256.2,616.2 L264.6,610.5 L282.5,611.3 L297.2,618.6 L307.7,628.4 L305.3,643.8 L298.8,664.1 L285.8,665.0 L269.5,660.1 L256.2,655.2 L240.0,655.2 Z" fill="#4ac16d" stroke="#4ac16d" stroke-width="4.5" stroke-linejoin="miter"/>
<path d="M240.0,616.2 L256.2,616.2 L264.6,610.5 L282.5,611.3 L297.2,618.6 L307.7,628.4 L305.3,643.8 L298.8,664.1 L285.8,665.0 L269.5,660.1 L256.2,655.2 L240.0,655.2 Z" fill="#fde725"/>
</g>
<rect x="280.7" y="558.4" width="96" height="96" fill="none" stroke="#ff0000" stroke-width="1.1"/>
<text x="328.70" y="547.20" font-size="11" text-anchor="middle" fill="#ff0000" stroke="#ff0000" stroke-width="0.18" textLength="8.00" lengthAdjust="spacingAndGlyphs">N</text>
<text x="266.40" y="609.80" font-size="11" text-anchor="middle" fill="#ff0000" stroke="#ff0000" stroke-width="0.18" textLength="6.60" lengthAdjust="spacingAndGlyphs">E</text>
<line x1="328.7" y1="599.2" x2="328.7" y2="569.6" stroke="#ff0000" stroke-width="1.2"/>
<line x1="335.9" y1="606.4" x2="365.5" y2="606.4" stroke="#ff0000" stroke-width="1.2"/>
<line x1="328.7" y1="643.2" x2="328.7" y2="613.6" stroke="#ff0000" stroke-width="1.2"/>
<line x1="291.9" y1="606.4" x2="321.5" y2="606.4" stroke="#ff0000" stroke-width="1.2"/>
<line x1="251.9" y1="670.4" x2="255.5" y2="670.4" stroke="#222" stroke-width="1"/>
<text x="247.50" y="674.00" font-size="10.8" text-anchor="end" stroke="#000" stroke-width="0.18" textLength="14.20" lengthAdjust="spacingAndGlyphs">−4</text>
<line x1="264.7" y1="680.7" x2="264.7" y2="684.3" stroke="#222" stroke-width="1"/>
<text x="264.40" y="696.00" font-size="10.8" text-anchor="middle" stroke="#000" stroke-width="0.18" textLength="13.80" lengthAdjust="spacingAndGlyphs">−4</text>
<line x1="251.9" y1="638.4" x2="255.5" y2="638.4" stroke="#222" stroke-width="1"/>
<text x="247.50" y="642.00" font-size="10.8" text-anchor="end" stroke="#000" stroke-width="0.18" textLength="14.20" lengthAdjust="spacingAndGlyphs">−2</text>
<line x1="296.7" y1="680.7" x2="296.7" y2="684.3" stroke="#222" stroke-width="1"/>
<text x="296.40" y="696.00" font-size="10.8" text-anchor="middle" stroke="#000" stroke-width="0.18" textLength="13.80" lengthAdjust="spacingAndGlyphs">−2</text>
<line x1="251.9" y1="606.4" x2="255.5" y2="606.4" stroke="#222" stroke-width="1"/>
<text x="247.50" y="610.00" font-size="10.8" text-anchor="end" stroke="#000" stroke-width="0.18" textLength="5.70" lengthAdjust="spacingAndGlyphs">0</text>
<line x1="328.7" y1="680.7" x2="328.7" y2="684.3" stroke="#222" stroke-width="1"/>
<text x="328.70" y="696.00" font-size="10.8" text-anchor="middle" stroke="#000" stroke-width="0.18" textLength="5.70" lengthAdjust="spacingAndGlyphs">0</text>
<line x1="251.9" y1="574.4" x2="255.5" y2="574.4" stroke="#222" stroke-width="1"/>
<text x="247.50" y="578.00" font-size="10.8" text-anchor="end" stroke="#000" stroke-width="0.18" textLength="5.70" lengthAdjust="spacingAndGlyphs">2</text>
<line x1="360.7" y1="680.7" x2="360.7" y2="684.3" stroke="#222" stroke-width="1"/>
<text x="360.70" y="696.00" font-size="10.8" text-anchor="middle" stroke="#000" stroke-width="0.18" textLength="5.70" lengthAdjust="spacingAndGlyphs">2</text>
<line x1="251.9" y1="542.4" x2="255.5" y2="542.4" stroke="#222" stroke-width="1"/>
<text x="247.50" y="546.00" font-size="10.8" text-anchor="end" stroke="#000" stroke-width="0.18" textLength="5.70" lengthAdjust="spacingAndGlyphs">4</text>
<line x1="392.7" y1="680.7" x2="392.7" y2="684.3" stroke="#222" stroke-width="1"/>
<text x="392.70" y="696.00" font-size="10.8" text-anchor="middle" stroke="#000" stroke-width="0.18" textLength="5.70" lengthAdjust="spacingAndGlyphs">4</text>
<rect x="255.5" y="532.7" width="148.0" height="148.0" fill="none" stroke="#222" stroke-width="1.1"/>
<text x="278.20" y="706.40" font-size="10.8" stroke="#000" stroke-width="0.18" textLength="101.50" lengthAdjust="spacingAndGlyphs">s/b: 1.21 +/- 0.040</text>
<text x="471.30" y="526.30" font-size="13.2" stroke="#000" stroke-width="0.18" textLength="86.60" lengthAdjust="spacingAndGlyphs">KPNO(24.7) g</text>
<defs><clipPath id="kclip"><rect x="440.9" y="533" width="147.8" height="147.8"/></clipPath></defs>
<rect x="440.9" y="533" width="147.8" height="147.8" fill="rgb(251,251,251)"/>
<g clip-path="url(#kclip)" shape-rendering="crispEdges">
<rect x="448.9" y="573.0" width="4" height="4" fill="rgb(248,248,248)"/>
<rect x="452.9" y="573.0" width="4" height="4" fill="rgb(247,247,247)"/>
<rect x="456.9" y="573.0" width="4" height="4" fill="rgb(246,246,246)"/>
<rect x="460.9" y="573.0" width="4" height="4" fill="rgb(247,247,247)"/>
<rect x="464.9" y="573.0" width="4" height="4" fill="rgb(248,248,248)"/>
<rect x="444.9" y="577.0" width="4" height="4" fill="rgb(248,248,248)"/>
<rect x="448.9" y="577.0" width="4" height="4" fill="rgb(246,246,246)"/>
<rect x="452.9" y="577.0" width="4" height="4" fill="rgb(244,244,244)"/>
<rect x="456.9" y="577.0" width="4" height="4" fill="rgb(244,244,244)"/>
<rect x="460.9" y="577.0" width="4" height="4" fill="rgb(244,244,244)"/>
<rect x="464.9" y="577.0" width="4" height="4" fill="rgb(246,246,246)"/>
<rect x="468.9" y="577.0" width="4" height="4" fill="rgb(248,248,248)"/>
<rect x="440.9" y="581.0" width="4" height="4" fill="rgb(248,248,248)"/>
<rect x="444.9" y="581.0" width="4" height="4" fill="rgb(245,245,245)"/>
<rect x="448.9" y="581.0" width="4" height="4" fill="rgb(243,243,243)"/>
<rect x="452.9" y="581.0" width="4" height="4" fill="rgb(241,241,241)"/>
<rect x="456.9" y="581.0" width="4" height="4" fill="rgb(240,240,240)"/>
<rect x="460.9" y="581.0" width="4" height="4" fill="rgb(241,241,241)"/>
<rect x="464.9" y="581.0" width="4" height="4" fill="rgb(243,243,243)"/>
<rect x="468.9" y="581.0" width="4" height="4" fill="rgb(246,246,246)"/>
<rect x="472.9" y="581.0" width="4" height="4" fill="rgb(247,247,247)"/>
<rect x="476.9" y="581.0" width="4" height="4" fill="rgb(248,248,248)"/>
<rect x="480.9" y="581.0" width="4" height="4" fill="rgb(248,248,248)"/>
<rect x="484.9" y="581.0" width="4" height="4" fill="rgb(248,248,248)"/>
<rect x="440.9" y="585.0" width="4" height="4" fill="rgb(247,247,247)"/>
<rect x="444.9" y="585.0" width="4" height="4" fill="rgb(243,243,243)"/>
<rect x="448.9" y="585.0" width="4" height="4" fill="rgb(240,240,240)"/>
<rect x="452.9" y="585.0" width="4" height="4" fill="rgb(237,237,237)"/>
<rect x="456.9" y="585.0" width="4" height="4" fill="rgb(236,236,236)"/>
<rect x="460.9" y="585.0" width="4" height="4" fill="rgb(238,238,238)"/>
<rect x="464.9" y="585.0" width="4" height="4" fill="rgb(240,240,240)"/>
<rect x="468.9" y="585.0" width="4" height="4" fill="rgb(244,244,244)"/>
<rect x="472.9" y="585.0" width="4" height="4" fill="rgb(245,245,245)"/>
<rect x="476.9" y="585.0" width="4" height="4" fill="rgb(246,246,246)"/>
<rect x="480.9" y="585.0" width="4" height="4" fill="rgb(246,246,246)"/>
<rect x="484.9" y="585.0" width="4" height="4" fill="rgb(247,247,247)"/>
<rect x="488.9" y="585.0" width="4" height="4" fill="rgb(247,247,247)"/>
<rect x="492.9" y="585.0" width="4" height="4" fill="rgb(248,248,248)"/>
<rect x="440.9" y="589.0" width="4" height="4" fill="rgb(245,245,245)"/>
<rect x="444.9" y="589.0" width="4" height="4" fill="rgb(240,240,240)"/>
<rect x="448.9" y="589.0" width="4" height="4" fill="rgb(236,236,236)"/>
<rect x="452.9" y="589.0" width="4" height="4" fill="rgb(233,233,233)"/>
<rect x="456.9" y="589.0" width="4" height="4" fill="rgb(232,232,232)"/>
<rect x="460.9" y="589.0" width="4" height="4" fill="rgb(233,233,233)"/>
<rect x="464.9" y="589.0" width="4" height="4" fill="rgb(237,237,237)"/>
<rect x="468.9" y="589.0" width="4" height="4" fill="rgb(241,241,241)"/>
<rect x="472.9" y="589.0" width="4" height="4" fill="rgb(243,243,243)"/>
<rect x="476.9" y="589.0" width="4" height="4" fill="rgb(243,243,243)"/>
<rect x="480.9" y="589.0" width="4" height="4" fill="rgb(244,244,244)"/>
<rect x="484.9" y="589.0" width="4" height="4" fill="rgb(245,245,245)"/>
<rect x="488.9" y="589.0" width="4" height="4" fill="rgb(245,245,245)"/>
<rect x="492.9" y="589.0" width="4" height="4" fill="rgb(246,246,246)"/>
<rect x="496.9" y="589.0" width="4" height="4" fill="rgb(247,247,247)"/>
<rect x="500.9" y="589.0" width="4" height="4" fill="rgb(248,248,248)"/>
<rect x="440.9" y="593.0" width="4" height="4" fill="rgb(243,243,243)"/>
<rect x="444.9" y="593.0" width="4" height="4" fill="rgb(237,237,237)"/>
<rect x="448.9" y="593.0" width="4" height="4" fill="rgb(232,232,232)"/>
<rect x="452.9" y="593.0" width="4" height="4" fill="rgb(229,229,229)"/>
<rect x="456.9" y="593.0" width="4" height="4" fill="rgb(228,228,228)"/>
<rect x="460.9" y="593.0" width="4" height="4" fill="rgb(229,229,229)"/>
<rect x="464.9" y="593.0" width="4" height="4" fill="rgb(233,233,233)"/>
<rect x="468.9" y="593.0" width="4" height="4" fill="rgb(238,238,238)"/>
<rect x="472.9" y="593.0" width="4" height="4" fill="rgb(240,240,240)"/>
<rect x="476.9" y="593.0" width="4" height="4" fill="rgb(241,241,241)"/>
<rect x="480.9" y="593.0" width="4" height="4" fill="rgb(242,242,242)"/>
<rect x="484.9" y="593.0" width="4" height="4" fill="rgb(242,242,242)"/>
<rect x="488.9" y="593.0" width="4" height="4" fill="rgb(243,243,243)"/>
<rect x="492.9" y="593.0" width="4" height="4" fill="rgb(244,244,244)"/>
<rect x="496.9" y="593.0" width="4" height="4" fill="rgb(246,246,246)"/>
<rect x="500.9" y="593.0" width="4" height="4" fill="rgb(247,247,247)"/>
<rect x="504.9" y="593.0" width="4" height="4" fill="rgb(248,248,248)"/>
<rect x="440.9" y="597.0" width="4" height="4" fill="rgb(240,240,240)"/>
<rect x="444.9" y="597.0" width="4" height="4" fill="rgb(234,234,234)"/>
<rect x="448.9" y="597.0" width="4" height="4" fill="rgb(228,228,228)"/>
<rect x="452.9" y="597.0" width="4" height="4" fill="rgb(224,224,224)"/>
<rect x="456.9" y="597.0" width="4" height="4" fill="rgb(223,223,223)"/>
<rect x="460.9" y="597.0" width="4" height="4" fill="rgb(225,225,225)"/>
<rect x="464.9" y="597.0" width="4" height="4" fill="rgb(229,229,229)"/>
<rect x="468.9" y="597.0" width="4" height="4" fill="rgb(235,235,235)"/>
<rect x="472.9" y="597.0" width="4" height="4" fill="rgb(238,238,238)"/>
<rect x="476.9" y="597.0" width="4" height="4" fill="rgb(238,238,238)"/>
<rect x="480.9" y="597.0" width="4" height="4" fill="rgb(239,239,239)"/>
<rect x="484.9" y="597.0" width="4" height="4" fill="rgb(240,240,240)"/>
<rect x="488.9" y="597.0" width="4" height="4" fill="rgb(241,241,241)"/>
<rect x="492.9" y="597.0" width="4" height="4" fill="rgb(242,242,242)"/>
<rect x="496.9" y="597.0" width="4" height="4" fill="rgb(244,244,244)"/>
<rect x="500.9" y="597.0" width="4" height="4" fill="rgb(245,245,245)"/>
<rect x="504.9" y="597.0" width="4" height="4" fill="rgb(247,247,247)"/>
<rect x="508.9" y="597.0" width="4" height="4" fill="rgb(248,248,248)"/>
<rect x="440.9" y="601.0" width="4" height="4" fill="rgb(238,238,238)"/>
<rect x="444.9" y="601.0" width="4" height="4" fill="rgb(231,231,231)"/>
<rect x="448.9" y="601.0" width="4" height="4" fill="rgb(225,225,225)"/>
<rect x="452.9" y="601.0" width="4" height="4" fill="rgb(220,220,220)"/>
<rect x="456.9" y="601.0" width="4" height="4" fill="rgb(218,218,218)"/>
<rect x="460.9" y="601.0" width="4" height="4" fill="rgb(220,220,220)"/>
<rect x="464.9" y="601.0" width="4" height="4" fill="rgb(226,226,226)"/>
<rect x="468.9" y="601.0" width="4" height="4" fill="rgb(222,222,222)"/>
<rect x="472.9" y="601.0" width="4" height="4" fill="rgb(227,227,227)"/>
<rect x="476.9" y="601.0" width="4" height="4" fill="rgb(235,235,235)"/>
<rect x="480.9" y="601.0" width="4" height="4" fill="rgb(236,236,236)"/>
<rect x="484.9" y="601.0" width="4" height="4" fill="rgb(237,237,237)"/>
<rect x="488.9" y="601.0" width="4" height="4" fill="rgb(239,239,239)"/>
<rect x="492.9" y="601.0" width="4" height="4" fill="rgb(240,240,240)"/>
<rect x="496.9" y="601.0" width="4" height="4" fill="rgb(242,242,242)"/>
<rect x="500.9" y="601.0" width="4" height="4" fill="rgb(243,243,243)"/>
<rect x="504.9" y="601.0" width="4" height="4" fill="rgb(245,245,245)"/>
<rect x="508.9" y="601.0" width="4" height="4" fill="rgb(247,247,247)"/>
<rect x="512.9" y="601.0" width="4" height="4" fill="rgb(248,248,248)"/>
<rect x="440.9" y="605.0" width="4" height="4" fill="rgb(237,237,237)"/>
<rect x="444.9" y="605.0" width="4" height="4" fill="rgb(229,229,229)"/>
<rect x="448.9" y="605.0" width="4" height="4" fill="rgb(221,221,221)"/>
<rect x="452.9" y="605.0" width="4" height="4" fill="rgb(216,216,216)"/>
<rect x="456.9" y="605.0" width="4" height="4" fill="rgb(183,183,183)"/>
<rect x="460.9" y="605.0" width="4" height="4" fill="rgb(152,152,152)"/>
<rect x="464.9" y="605.0" width="4" height="4" fill="rgb(133,133,133)"/>
<rect x="468.9" y="605.0" width="4" height="4" fill="rgb(127,127,127)"/>
<rect x="472.9" y="605.0" width="4" height="4" fill="rgb(135,135,135)"/>
<rect x="476.9" y="605.0" width="4" height="4" fill="rgb(156,156,156)"/>
<rect x="480.9" y="605.0" width="4" height="4" fill="rgb(188,188,188)"/>
<rect x="484.9" y="605.0" width="4" height="4" fill="rgb(224,224,224)"/>
<rect x="488.9" y="605.0" width="4" height="4" fill="rgb(236,236,236)"/>
<rect x="492.9" y="605.0" width="4" height="4" fill="rgb(238,238,238)"/>
<rect x="496.9" y="605.0" width="4" height="4" fill="rgb(240,240,240)"/>
<rect x="500.9" y="605.0" width="4" height="4" fill="rgb(242,242,242)"/>
<rect x="504.9" y="605.0" width="4" height="4" fill="rgb(244,244,244)"/>
<rect x="508.9" y="605.0" width="4" height="4" fill="rgb(245,245,245)"/>
<rect x="512.9" y="605.0" width="4" height="4" fill="rgb(247,247,247)"/>
<rect x="516.9" y="605.0" width="4" height="4" fill="rgb(248,248,248)"/>
<rect x="440.9" y="609.0" width="4" height="4" fill="rgb(235,235,235)"/>
<rect x="444.9" y="609.0" width="4" height="4" fill="rgb(227,227,227)"/>
<rect x="448.9" y="609.0" width="4" height="4" fill="rgb(192,192,192)"/>
<rect x="452.9" y="609.0" width="4" height="4" fill="rgb(135,135,135)"/>
<rect x="456.9" y="609.0" width="4" height="4" fill="rgb(87,87,87)"/>
<rect x="460.9" y="609.0" width="4" height="4" fill="rgb(54,54,54)"/>
<rect x="464.9" y="609.0" width="4" height="4" fill="rgb(37,37,37)"/>
<rect x="468.9" y="609.0" width="4" height="4" fill="rgb(32,32,32)"/>
<rect x="472.9" y="609.0" width="4" height="4" fill="rgb(38,38,38)"/>
<rect x="476.9" y="609.0" width="4" height="4" fill="rgb(58,58,58)"/>
<rect x="480.9" y="609.0" width="4" height="4" fill="rgb(93,93,93)"/>
<rect x="484.9" y="609.0" width="4" height="4" fill="rgb(144,144,144)"/>
<rect x="488.9" y="609.0" width="4" height="4" fill="rgb(200,200,200)"/>
<rect x="492.9" y="609.0" width="4" height="4" fill="rgb(235,235,235)"/>
<rect x="496.9" y="609.0" width="4" height="4" fill="rgb(238,238,238)"/>
<rect x="500.9" y="609.0" width="4" height="4" fill="rgb(240,240,240)"/>
<rect x="504.9" y="609.0" width="4" height="4" fill="rgb(242,242,242)"/>
<rect x="508.9" y="609.0" width="4" height="4" fill="rgb(244,244,244)"/>
<rect x="512.9" y="609.0" width="4" height="4" fill="rgb(246,246,246)"/>
<rect x="516.9" y="609.0" width="4" height="4" fill="rgb(248,248,248)"/>
<rect x="440.9" y="613.0" width="4" height="4" fill="rgb(234,234,234)"/>
<rect x="444.9" y="613.0" width="4" height="4" fill="rgb(184,184,184)"/>
<rect x="448.9" y="613.0" width="4" height="4" fill="rgb(112,112,112)"/>
<rect x="452.9" y="613.0" width="4" height="4" fill="rgb(51,51,51)"/>
<rect x="456.9" y="613.0" width="4" height="4" fill="rgb(14,14,14)"/>
<rect x="460.9" y="613.0" width="4" height="4" fill="rgb(0,0,0)"/>
<rect x="464.9" y="613.0" width="4" height="4" fill="rgb(0,0,0)"/>
<rect x="468.9" y="613.0" width="4" height="4" fill="rgb(0,0,0)"/>
<rect x="472.9" y="613.0" width="4" height="4" fill="rgb(0,0,0)"/>
<rect x="476.9" y="613.0" width="4" height="4" fill="rgb(1,1,1)"/>
<rect x="480.9" y="613.0" width="4" height="4" fill="rgb(18,18,18)"/>
<rect x="484.9" y="613.0" width="4" height="4" fill="rgb(59,59,59)"/>
<rect x="488.9" y="613.0" width="4" height="4" fill="rgb(122,122,122)"/>
<rect x="492.9" y="613.0" width="4" height="4" fill="rgb(194,194,194)"/>
<rect x="496.9" y="613.0" width="4" height="4" fill="rgb(236,236,236)"/>
<rect x="500.9" y="613.0" width="4" height="4" fill="rgb(238,238,238)"/>
<rect x="504.9" y="613.0" width="4" height="4" fill="rgb(241,241,241)"/>
<rect x="508.9" y="613.0" width="4" height="4" fill="rgb(243,243,243)"/>
<rect x="512.9" y="613.0" width="4" height="4" fill="rgb(245,245,245)"/>
<rect x="516.9" y="613.0" width="4" height="4" fill="rgb(247,247,247)"/>
<rect x="520.9" y="613.0" width="4" height="4" fill="rgb(248,248,248)"/>
<rect x="440.9" y="617.0" width="4" height="4" fill="rgb(199,199,199)"/>
<rect x="444.9" y="617.0" width="4" height="4" fill="rgb(116,116,116)"/>
<rect x="448.9" y="617.0" width="4" height="4" fill="rgb(43,43,43)"/>
<rect x="452.9" y="617.0" width="4" height="4" fill="rgb(3,3,3)"/>
<rect x="456.9" y="617.0" width="4" height="4" fill="rgb(0,0,0)"/>
<rect x="460.9" y="617.0" width="4" height="4" fill="rgb(0,0,0)"/>
<rect x="464.9" y="617.0" width="4" height="4" fill="rgb(0,0,0)"/>
<rect x="468.9" y="617.0" width="4" height="4" fill="rgb(0,0,0)"/>
<rect x="472.9" y="617.0" width="4" height="4" fill="rgb(0,0,0)"/>
<rect x="476.9" y="617.0" width="4" height="4" fill="rgb(0,0,0)"/>
<rect x="480.9" y="617.0" width="4" height="4" fill="rgb(0,0,0)"/>
<rect x="484.9" y="617.0" width="4" height="4" fill="rgb(6,6,6)"/>
<rect x="488.9" y="617.0" width="4" height="4" fill="rgb(52,52,52)"/>
<rect x="492.9" y="617.0" width="4" height="4" fill="rgb(129,129,129)"/>
<rect x="496.9" y="617.0" width="4" height="4" fill="rgb(210,210,210)"/>
<rect x="500.9" y="617.0" width="4" height="4" fill="rgb(236,236,236)"/>
<rect x="504.9" y="617.0" width="4" height="4" fill="rgb(239,239,239)"/>
<rect x="508.9" y="617.0" width="4" height="4" fill="rgb(242,242,242)"/>
<rect x="512.9" y="617.0" width="4" height="4" fill="rgb(244,244,244)"/>
<rect x="516.9" y="617.0" width="4" height="4" fill="rgb(246,246,246)"/>
<rect x="520.9" y="617.0" width="4" height="4" fill="rgb(248,248,248)"/>
<rect x="440.9" y="621.0" width="4" height="4" fill="rgb(149,149,149)"/>
<rect x="444.9" y="621.0" width="4" height="4" fill="rgb(59,59,59)"/>
<rect x="448.9" y="621.0" width="4" height="4" fill="rgb(5,5,5)"/>
<rect x="452.9" y="621.0" width="4" height="4" fill="rgb(0,0,0)"/>
<rect x="456.9" y="621.0" width="4" height="4" fill="rgb(0,0,0)"/>
<rect x="460.9" y="621.0" width="4" height="4" fill="rgb(0,0,0)"/>
<rect x="464.9" y="621.0" width="4" height="4" fill="rgb(0,0,0)"/>
<rect x="468.9" y="621.0" width="4" height="4" fill="rgb(0,0,0)"/>
<rect x="472.9" y="621.0" width="4" height="4" fill="rgb(0,0,0)"/>
<rect x="476.9" y="621.0" width="4" height="4" fill="rgb(0,0,0)"/>
<rect x="480.9" y="621.0" width="4" height="4" fill="rgb(0,0,0)"/>
<rect x="484.9" y="621.0" width="4" height="4" fill="rgb(0,0,0)"/>
<rect x="488.9" y="621.0" width="4" height="4" fill="rgb(9,9,9)"/>
<rect x="492.9" y="621.0" width="4" height="4" fill="rgb(71,71,71)"/>
<rect x="496.9" y="621.0" width="4" height="4" fill="rgb(163,163,163)"/>
<rect x="500.9" y="621.0" width="4" height="4" fill="rgb(235,235,235)"/>
<rect x="504.9" y="621.0" width="4" height="4" fill="rgb(238,238,238)"/>
<rect x="508.9" y="621.0" width="4" height="4" fill="rgb(241,241,241)"/>
<rect x="512.9" y="621.0" width="4" height="4" fill="rgb(243,243,243)"/>
<rect x="516.9" y="621.0" width="4" height="4" fill="rgb(245,245,245)"/>
<rect x="520.9" y="621.0" width="4" height="4" fill="rgb(247,247,247)"/>
<rect x="440.9" y="625.0" width="4" height="4" fill="rgb(106,106,106)"/>
<rect x="444.9" y="625.0" width="4" height="4" fill="rgb(23,23,23)"/>
<rect x="448.9" y="625.0" width="4" height="4" fill="rgb(0,0,0)"/>
<rect x="452.9" y="625.0" width="4" height="4" fill="rgb(0,0,0)"/>
<rect x="456.9" y="625.0" width="4" height="4" fill="rgb(0,0,0)"/>
<rect x="460.9" y="625.0" width="4" height="4" fill="rgb(0,0,0)"/>
<rect x="464.9" y="625.0" width="4" height="4" fill="rgb(0,0,0)"/>
<rect x="468.9" y="625.0" width="4" height="4" fill="rgb(0,0,0)"/>
<rect x="472.9" y="625.0" width="4" height="4" fill="rgb(0,0,0)"/>
<rect x="476.9" y="625.0" width="4" height="4" fill="rgb(0,0,0)"/>
<rect x="480.9" y="625.0" width="4" height="4" fill="rgb(0,0,0)"/>
<rect x="484.9" y="625.0" width="4" height="4" fill="rgb(0,0,0)"/>
<rect x="488.9" y="625.0" width="4" height="4" fill="rgb(0,0,0)"/>
<rect x="492.9" y="625.0" width="4" height="4" fill="rgb(32,32,32)"/>
<rect x="496.9" y="625.0" width="4" height="4" fill="rgb(120,120,120)"/>
<rect x="500.9" y="625.0" width="4" height="4" fill="rgb(213,213,213)"/>
<rect x="504.9" y="625.0" width="4" height="4" fill="rgb(237,237,237)"/>
<rect x="508.9" y="625.0" width="4" height="4" fill="rgb(240,240,240)"/>
<rect x="512.9" y="625.0" width="4" height="4" fill="rgb(242,242,242)"/>
<rect x="516.9" y="625.0" width="4" height="4" fill="rgb(245,245,245)"/>
<rect x="520.9" y="625.0" width="4" height="4" fill="rgb(247,247,247)"/>
<rect x="524.9" y="625.0" width="4" height="4" fill="rgb(248,248,248)"/>
<rect x="440.9" y="629.0" width="4" height="4" fill="rgb(76,76,76)"/>
<rect x="444.9" y="629.0" width="4" height="4" fill="rgb(6,6,6)"/>
<rect x="448.9" y="629.0" width="4" height="4" fill="rgb(0,0,0)"/>
<rect x="452.9" y="629.0" width="4" height="4" fill="rgb(0,0,0)"/>
<rect x="456.9" y="629.0" width="4" height="4" fill="rgb(0,0,0)"/>
<rect x="460.9" y="629.0" width="4" height="4" fill="rgb(0,0,0)"/>
<rect x="464.9" y="629.0" width="4" height="4" fill="rgb(0,0,0)"/>
<rect x="468.9" y="629.0" width="4" height="4" fill="rgb(0,0,0)"/>
<rect x="472.9" y="629.0" width="4" height="4" fill="rgb(0,0,0)"/>
<rect x="476.9" y="629.0" width="4" height="4" fill="rgb(0,0,0)"/>
<rect x="480.9" y="629.0" width="4" height="4" fill="rgb(0,0,0)"/>
<rect x="484.9" y="629.0" width="4" height="4" fill="rgb(0,0,0)"/>
<rect x="488.9" y="629.0" width="4" height="4" fill="rgb(0,0,0)"/>
<rect x="492.9" y="629.0" width="4" height="4" fill="rgb(12,12,12)"/>
<rect x="496.9" y="629.0" width="4" height="4" fill="rgb(91,91,91)"/>
<rect x="500.9" y="629.0" width="4" height="4" fill="rgb(191,191,191)"/>
<rect x="504.9" y="629.0" width="4" height="4" fill="rgb(236,236,236)"/>
<rect x="508.9" y="629.0" width="4" height="4" fill="rgb(239,239,239)"/>
<rect x="512.9" y="629.0" width="4" height="4" fill="rgb(242,242,242)"/>
<rect x="516.9" y="629.0" width="4" height="4" fill="rgb(244,244,244)"/>
<rect x="520.9" y="629.0" width="4" height="4" fill="rgb(246,246,246)"/>
<rect x="524.9" y="629.0" width="4" height="4" fill="rgb(248,248,248)"/>
<rect x="440.9" y="633.0" width="4" height="4" fill="rgb(61,61,61)"/>
<rect x="444.9" y="633.0" width="4" height="4" fill="rgb(1,1,1)"/>
<rect x="448.9" y="633.0" width="4" height="4" fill="rgb(0,0,0)"/>
<rect x="452.9" y="633.0" width="4" height="4" fill="rgb(0,0,0)"/>
<rect x="456.9" y="633.0" width="4" height="4" fill="rgb(0,0,0)"/>
<rect x="460.9" y="633.0" width="4" height="4" fill="rgb(0,0,0)"/>
<rect x="464.9" y="633.0" width="4" height="4" fill="rgb(0,0,0)"/>
<rect x="468.9" y="633.0" width="4" height="4" fill="rgb(0,0,0)"/>
<rect x="472.9" y="633.0" width="4" height="4" fill="rgb(0,0,0)"/>
<rect x="476.9" y="633.0" width="4" height="4" fill="rgb(0,0,0)"/>
<rect x="480.9" y="633.0" width="4" height="4" fill="rgb(0,0,0)"/>
<rect x="484.9" y="633.0" width="4" height="4" fill="rgb(0,0,0)"/>
<rect x="488.9" y="633.0" width="4" height="4" fill="rgb(0,0,0)"/>
<rect x="492.9" y="633.0" width="4" height="4" fill="rgb(5,5,5)"/>
<rect x="496.9" y="633.0" width="4" height="4" fill="rgb(75,75,75)"/>
<rect x="500.9" y="633.0" width="4" height="4" fill="rgb(178,178,178)"/>
<rect x="504.9" y="633.0" width="4" height="4" fill="rgb(236,236,236)"/>
<rect x="508.9" y="633.0" width="4" height="4" fill="rgb(239,239,239)"/>
<rect x="512.9" y="633.0" width="4" height="4" fill="rgb(242,242,242)"/>
<rect x="516.9" y="633.0" width="4" height="4" fill="rgb(244,244,244)"/>
<rect x="520.9" y="633.0" width="4" height="4" fill="rgb(246,246,246)"/>
<rect x="524.9" y="633.0" width="4" height="4" fill="rgb(248,248,248)"/>
<rect x="440.9" y="637.0" width="4" height="4" fill="rgb(60,60,60)"/>
<rect x="444.9" y="637.0" width="4" height="4" fill="rgb(1,1,1)"/>
<rect x="448.9" y="637.0" width="4" height="4" fill="rgb(0,0,0)"/>
<rect x="452.9" y="637.0" width="4" height="4" fill="rgb(0,0,0)"/>
<rect x="456.9" y="637.0" width="4" height="4" fill="rgb(0,0,0)"/>
<rect x="460.9" y="637.0" width="4" height="4" fill="rgb(0,0,0)"/>
<rect x="464.9" y="637.0" width="4" height="4" fill="rgb(0,0,0)"/>
<rect x="468.9" y="637.0" width="4" height="4" fill="rgb(0,0,0)"/>
<rect x="472.9" y="637.0" width="4" height="4" fill="rgb(0,0,0)"/>
<rect x="476.9" y="637.0" width="4" height="4" fill="rgb(0,0,0)"/>
<rect x="480.9" y="637.0" width="4" height="4" fill="rgb(0,0,0)"/>
<rect x="484.9" y="637.0" width="4" height="4" fill="rgb(0,0,0)"/>
<rect x="488.9" y="637.0" width="4" height="4" fill="rgb(0,0,0)"/>
<rect x="492.9" y="637.0" width="4" height="4" fill="rgb(4,4,4)"/>
<rect x="496.9" y="637.0" width="4" height="4" fill="rgb(74,74,74)"/>
<rect x="500.9" y="637.0" width="4" height="4" fill="rgb(177,177,177)"/>
<rect x="504.9" y="637.0" width="4" height="4" fill="rgb(236,236,236)"/>
<rect x="508.9" y="637.0" width="4" height="4" fill="rgb(239,239,239)"/>
<rect x="512.9" y="637.0" width="4" height="4" fill="rgb(242,242,242)"/>
<rect x="516.9" y="637.0" width="4" height="4" fill="rgb(244,244,244)"/>
<rect x="520.9" y="637.0" width="4" height="4" fill="rgb(246,246,246)"/>
<rect x="524.9" y="637.0" width="4" height="4" fill="rgb(248,248,248)"/>
<rect x="440.9" y="641.0" width="4" height="4" fill="rgb(72,72,72)"/>
<rect x="444.9" y="641.0" width="4" height="4" fill="rgb(4,4,4)"/>
<rect x="448.9" y="641.0" width="4" height="4" fill="rgb(0,0,0)"/>
<rect x="452.9" y="641.0" width="4" height="4" fill="rgb(0,0,0)"/>
<rect x="456.9" y="641.0" width="4" height="4" fill="rgb(0,0,0)"/>
<rect x="460.9" y="641.0" width="4" height="4" fill="rgb(0,0,0)"/>
<rect x="464.9" y="641.0" width="4" height="4" fill="rgb(0,0,0)"/>
<rect x="468.9" y="641.0" width="4" height="4" fill="rgb(0,0,0)"/>
<rect x="472.9" y="641.0" width="4" height="4" fill="rgb(0,0,0)"/>
<rect x="476.9" y="641.0" width="4" height="4" fill="rgb(0,0,0)"/>
<rect x="480.9" y="641.0" width="4" height="4" fill="rgb(0,0,0)"/>
<rect x="484.9" y="641.0" width="4" height="4" fill="rgb(0,0,0)"/>
<rect x="488.9" y="641.0" width="4" height="4" fill="rgb(0,0,0)"/>
<rect x="492.9" y="641.0" width="4" height="4" fill="rgb(10,10,10)"/>
<rect x="496.9" y="641.0" width="4" height="4" fill="rgb(86,86,86)"/>
<rect x="500.9" y="641.0" width="4" height="4" fill="rgb(188,188,188)"/>
<rect x="504.9" y="641.0" width="4" height="4" fill="rgb(236,236,236)"/>
<rect x="508.9" y="641.0" width="4" height="4" fill="rgb(239,239,239)"/>
<rect x="512.9" y="641.0" width="4" height="4" fill="rgb(242,242,242)"/>
<rect x="516.9" y="641.0" width="4" height="4" fill="rgb(244,244,244)"/>
<rect x="520.9" y="641.0" width="4" height="4" fill="rgb(246,246,246)"/>
<rect x="524.9" y="641.0" width="4" height="4" fill="rgb(248,248,248)"/>
<rect x="440.9" y="645.0" width="4" height="4" fill="rgb(98,98,98)"/>
<rect x="444.9" y="645.0" width="4" height="4" fill="rgb(18,18,18)"/>
<rect x="448.9" y="645.0" width="4" height="4" fill="rgb(0,0,0)"/>
<rect x="452.9" y="645.0" width="4" height="4" fill="rgb(0,0,0)"/>
<rect x="456.9" y="645.0" width="4" height="4" fill="rgb(0,0,0)"/>
<rect x="460.9" y="645.0" width="4" height="4" fill="rgb(0,0,0)"/>
<rect x="464.9" y="645.0" width="4" height="4" fill="rgb(0,0,0)"/>
<rect x="468.9" y="645.0" width="4" height="4" fill="rgb(0,0,0)"/>
<rect x="472.9" y="645.0" width="4" height="4" fill="rgb(0,0,0)"/>
<rect x="476.9" y="645.0" width="4" height="4" fill="rgb(0,0,0)"/>
<rect x="480.9" y="645.0" width="4" height="4" fill="rgb(0,0,0)"/>
<rect x="484.9" y="645.0" width="4" height="4" fill="rgb(0,0,0)"/>
<rect x="488.9" y="645.0" width="4" height="4" fill="rgb(0,0,0)"/>
<rect x="492.9" y="645.0" width="4" height="4" fill="rgb(27,27,27)"/>
<rect x="496.9" y="645.0" width="4" height="4" fill="rgb(113,113,113)"/>
<rect x="500.9" y="645.0" width="4" height="4" fill="rgb(208,208,208)"/>
<rect x="504.9" y="645.0" width="4" height="4" fill="rgb(237,237,237)"/>
<rect x="508.9" y="645.0" width="4" height="4" fill="rgb(240,240,240)"/>
<rect x="512.9" y="645.0" width="4" height="4" fill="rgb(242,242,242)"/>
<rect x="516.9" y="645.0" width="4" height="4" fill="rgb(245,245,245)"/>
<rect x="520.9" y="645.0" width="4" height="4" fill="rgb(247,247,247)"/>
<rect x="524.9" y="645.0" width="4" height="4" fill="rgb(248,248,248)"/>
<rect x="440.9" y="649.0" width="4" height="4" fill="rgb(139,139,139)"/>
<rect x="444.9" y="649.0" width="4" height="4" fill="rgb(50,50,50)"/>
<rect x="448.9" y="649.0" width="4" height="4" fill="rgb(1,1,1)"/>
<rect x="452.9" y="649.0" width="4" height="4" fill="rgb(0,0,0)"/>
<rect x="456.9" y="649.0" width="4" height="4" fill="rgb(0,0,0)"/>
<rect x="460.9" y="649.0" width="4" height="4" fill="rgb(0,0,0)"/>
<rect x="464.9" y="649.0" width="4" height="4" fill="rgb(0,0,0)"/>
<rect x="468.9" y="649.0" width="4" height="4" fill="rgb(0,0,0)"/>
<rect x="472.9" y="649.0" width="4" height="4" fill="rgb(0,0,0)"/>
<rect x="476.9" y="649.0" width="4" height="4" fill="rgb(0,0,0)"/>
<rect x="480.9" y="649.0" width="4" height="4" fill="rgb(0,0,0)"/>
<rect x="484.9" y="649.0" width="4" height="4" fill="rgb(0,0,0)"/>
<rect x="488.9" y="649.0" width="4" height="4" fill="rgb(5,5,5)"/>
<rect x="492.9" y="649.0" width="4" height="4" fill="rgb(62,62,62)"/>
<rect x="496.9" y="649.0" width="4" height="4" fill="rgb(153,153,153)"/>
<rect x="500.9" y="649.0" width="4" height="4" fill="rgb(233,233,233)"/>
<rect x="504.9" y="649.0" width="4" height="4" fill="rgb(238,238,238)"/>
<rect x="508.9" y="649.0" width="4" height="4" fill="rgb(240,240,240)"/>
<rect x="512.9" y="649.0" width="4" height="4" fill="rgb(243,243,243)"/>
<rect x="516.9" y="649.0" width="4" height="4" fill="rgb(245,245,245)"/>
<rect x="520.9" y="649.0" width="4" height="4" fill="rgb(247,247,247)"/>
<rect x="440.9" y="653.0" width="4" height="4" fill="rgb(189,189,189)"/>
<rect x="444.9" y="653.0" width="4" height="4" fill="rgb(104,104,104)"/>
<rect x="448.9" y="653.0" width="4" height="4" fill="rgb(32,32,32)"/>
<rect x="452.9" y="653.0" width="4" height="4" fill="rgb(0,0,0)"/>
<rect x="456.9" y="653.0" width="4" height="4" fill="rgb(0,0,0)"/>
<rect x="460.9" y="653.0" width="4" height="4" fill="rgb(0,0,0)"/>
<rect x="464.9" y="653.0" width="4" height="4" fill="rgb(0,0,0)"/>
<rect x="468.9" y="653.0" width="4" height="4" fill="rgb(0,0,0)"/>
<rect x="472.9" y="653.0" width="4" height="4" fill="rgb(0,0,0)"/>
<rect x="476.9" y="653.0" width="4" height="4" fill="rgb(0,0,0)"/>
<rect x="480.9" y="653.0" width="4" height="4" fill="rgb(0,0,0)"/>
<rect x="484.9" y="653.0" width="4" height="4" fill="rgb(2,2,2)"/>
<rect x="488.9" y="653.0" width="4" height="4" fill="rgb(41,41,41)"/>
<rect x="492.9" y="653.0" width="4" height="4" fill="rgb(116,116,116)"/>
<rect x="496.9" y="653.0" width="4" height="4" fill="rgb(200,200,200)"/>
<rect x="500.9" y="653.0" width="4" height="4" fill="rgb(236,236,236)"/>
<rect x="504.9" y="653.0" width="4" height="4" fill="rgb(239,239,239)"/>
<rect x="508.9" y="653.0" width="4" height="4" fill="rgb(241,241,241)"/>
<rect x="512.9" y="653.0" width="4" height="4" fill="rgb(244,244,244)"/>
<rect x="516.9" y="653.0" width="4" height="4" fill="rgb(246,246,246)"/>
<rect x="520.9" y="653.0" width="4" height="4" fill="rgb(248,248,248)"/>
<rect x="440.9" y="657.0" width="4" height="4" fill="rgb(235,235,235)"/>
<rect x="444.9" y="657.0" width="4" height="4" fill="rgb(170,170,170)"/>
<rect x="448.9" y="657.0" width="4" height="4" fill="rgb(96,96,96)"/>
<rect x="452.9" y="657.0" width="4" height="4" fill="rgb(37,37,37)"/>
<rect x="456.9" y="657.0" width="4" height="4" fill="rgb(6,6,6)"/>
<rect x="460.9" y="657.0" width="4" height="4" fill="rgb(0,0,0)"/>
<rect x="464.9" y="657.0" width="4" height="4" fill="rgb(0,0,0)"/>
<rect x="468.9" y="657.0" width="4" height="4" fill="rgb(0,0,0)"/>
<rect x="472.9" y="657.0" width="4" height="4" fill="rgb(0,0,0)"/>
<rect x="476.9" y="657.0" width="4" height="4" fill="rgb(0,0,0)"/>
<rect x="480.9" y="657.0" width="4" height="4" fill="rgb(9,9,9)"/>
<rect x="484.9" y="657.0" width="4" height="4" fill="rgb(45,45,45)"/>
<rect x="488.9" y="657.0" width="4" height="4" fill="rgb(107,107,107)"/>
<rect x="492.9" y="657.0" width="4" height="4" fill="rgb(181,181,181)"/>
<rect x="496.9" y="657.0" width="4" height="4" fill="rgb(235,235,235)"/>
<rect x="500.9" y="657.0" width="4" height="4" fill="rgb(238,238,238)"/>
<rect x="504.9" y="657.0" width="4" height="4" fill="rgb(240,240,240)"/>
<rect x="508.9" y="657.0" width="4" height="4" fill="rgb(243,243,243)"/>
<rect x="512.9" y="657.0" width="4" height="4" fill="rgb(245,245,245)"/>
<rect x="516.9" y="657.0" width="4" height="4" fill="rgb(247,247,247)"/>
<rect x="520.9" y="657.0" width="4" height="4" fill="rgb(248,248,248)"/>
<rect x="440.9" y="661.0" width="4" height="4" fill="rgb(237,237,237)"/>
<rect x="444.9" y="661.0" width="4" height="4" fill="rgb(231,231,231)"/>
<rect x="448.9" y="661.0" width="4" height="4" fill="rgb(176,176,176)"/>
<rect x="452.9" y="661.0" width="4" height="4" fill="rgb(117,117,117)"/>
<rect x="456.9" y="661.0" width="4" height="4" fill="rgb(69,69,69)"/>
<rect x="460.9" y="661.0" width="4" height="4" fill="rgb(38,38,38)"/>
<rect x="464.9" y="661.0" width="4" height="4" fill="rgb(22,22,22)"/>
<rect x="468.9" y="661.0" width="4" height="4" fill="rgb(18,18,18)"/>
<rect x="472.9" y="661.0" width="4" height="4" fill="rgb(24,24,24)"/>
<rect x="476.9" y="661.0" width="4" height="4" fill="rgb(42,42,42)"/>
<rect x="480.9" y="661.0" width="4" height="4" fill="rgb(75,75,75)"/>
<rect x="484.9" y="661.0" width="4" height="4" fill="rgb(126,126,126)"/>
<rect x="488.9" y="661.0" width="4" height="4" fill="rgb(185,185,185)"/>
<rect x="492.9" y="661.0" width="4" height="4" fill="rgb(235,235,235)"/>
<rect x="496.9" y="661.0" width="4" height="4" fill="rgb(237,237,237)"/>
<rect x="500.9" y="661.0" width="4" height="4" fill="rgb(240,240,240)"/>
<rect x="504.9" y="661.0" width="4" height="4" fill="rgb(242,242,242)"/>
<rect x="508.9" y="661.0" width="4" height="4" fill="rgb(244,244,244)"/>
<rect x="512.9" y="661.0" width="4" height="4" fill="rgb(246,246,246)"/>
<rect x="516.9" y="661.0" width="4" height="4" fill="rgb(247,247,247)"/>
<rect x="440.9" y="665.0" width="4" height="4" fill="rgb(239,239,239)"/>
<rect x="444.9" y="665.0" width="4" height="4" fill="rgb(237,237,237)"/>
<rect x="448.9" y="665.0" width="4" height="4" fill="rgb(235,235,235)"/>
<rect x="452.9" y="665.0" width="4" height="4" fill="rgb(204,204,204)"/>
<rect x="456.9" y="665.0" width="4" height="4" fill="rgb(164,164,164)"/>
<rect x="460.9" y="665.0" width="4" height="4" fill="rgb(132,132,132)"/>
<rect x="464.9" y="665.0" width="4" height="4" fill="rgb(112,112,112)"/>
<rect x="468.9" y="665.0" width="4" height="4" fill="rgb(106,106,106)"/>
<rect x="472.9" y="665.0" width="4" height="4" fill="rgb(114,114,114)"/>
<rect x="476.9" y="665.0" width="4" height="4" fill="rgb(136,136,136)"/>
<rect x="480.9" y="665.0" width="4" height="4" fill="rgb(170,170,170)"/>
<rect x="484.9" y="665.0" width="4" height="4" fill="rgb(210,210,210)"/>
<rect x="488.9" y="665.0" width="4" height="4" fill="rgb(235,235,235)"/>
<rect x="492.9" y="665.0" width="4" height="4" fill="rgb(237,237,237)"/>
<rect x="496.9" y="665.0" width="4" height="4" fill="rgb(239,239,239)"/>
<rect x="500.9" y="665.0" width="4" height="4" fill="rgb(241,241,241)"/>
<rect x="504.9" y="665.0" width="4" height="4" fill="rgb(243,243,243)"/>
<rect x="508.9" y="665.0" width="4" height="4" fill="rgb(245,245,245)"/>
<rect x="512.9" y="665.0" width="4" height="4" fill="rgb(247,247,247)"/>
<rect x="516.9" y="665.0" width="4" height="4" fill="rgb(248,248,248)"/>
<rect x="440.9" y="669.0" width="4" height="4" fill="rgb(241,241,241)"/>
<rect x="444.9" y="669.0" width="4" height="4" fill="rgb(239,239,239)"/>
<rect x="448.9" y="669.0" width="4" height="4" fill="rgb(238,238,238)"/>
<rect x="452.9" y="669.0" width="4" height="4" fill="rgb(236,236,236)"/>
<rect x="456.9" y="669.0" width="4" height="4" fill="rgb(235,235,235)"/>
<rect x="460.9" y="669.0" width="4" height="4" fill="rgb(224,224,224)"/>
<rect x="464.9" y="669.0" width="4" height="4" fill="rgb(211,211,211)"/>
<rect x="468.9" y="669.0" width="4" height="4" fill="rgb(206,206,206)"/>
<rect x="472.9" y="669.0" width="4" height="4" fill="rgb(212,212,212)"/>
<rect x="476.9" y="669.0" width="4" height="4" fill="rgb(226,226,226)"/>
<rect x="480.9" y="669.0" width="4" height="4" fill="rgb(235,235,235)"/>
<rect x="484.9" y="669.0" width="4" height="4" fill="rgb(237,237,237)"/>
<rect x="488.9" y="669.0" width="4" height="4" fill="rgb(238,238,238)"/>
<rect x="492.9" y="669.0" width="4" height="4" fill="rgb(240,240,240)"/>
<rect x="496.9" y="669.0" width="4" height="4" fill="rgb(241,241,241)"/>
<rect x="500.9" y="669.0" width="4" height="4" fill="rgb(243,243,243)"/>
<rect x="504.9" y="669.0" width="4" height="4" fill="rgb(245,245,245)"/>
<rect x="508.9" y="669.0" width="4" height="4" fill="rgb(246,246,246)"/>
<rect x="512.9" y="669.0" width="4" height="4" fill="rgb(248,248,248)"/>
<rect x="440.9" y="673.0" width="4" height="4" fill="rgb(243,243,243)"/>
<rect x="444.9" y="673.0" width="4" height="4" fill="rgb(242,242,242)"/>
<rect x="448.9" y="673.0" width="4" height="4" fill="rgb(240,240,240)"/>
<rect x="452.9" y="673.0" width="4" height="4" fill="rgb(239,239,239)"/>
<rect x="456.9" y="673.0" width="4" height="4" fill="rgb(238,238,238)"/>
<rect x="460.9" y="673.0" width="4" height="4" fill="rgb(237,237,237)"/>
<rect x="464.9" y="673.0" width="4" height="4" fill="rgb(237,237,237)"/>
<rect x="468.9" y="673.0" width="4" height="4" fill="rgb(237,237,237)"/>
<rect x="472.9" y="673.0" width="4" height="4" fill="rgb(237,237,237)"/>
<rect x="476.9" y="673.0" width="4" height="4" fill="rgb(238,238,238)"/>
<rect x="480.9" y="673.0" width="4" height="4" fill="rgb(238,238,238)"/>
<rect x="484.9" y="673.0" width="4" height="4" fill="rgb(239,239,239)"/>
<rect x="488.9" y="673.0" width="4" height="4" fill="rgb(241,241,241)"/>
<rect x="492.9" y="673.0" width="4" height="4" fill="rgb(242,242,242)"/>
<rect x="496.9" y="673.0" width="4" height="4" fill="rgb(243,243,243)"/>
<rect x="500.9" y="673.0" width="4" height="4" fill="rgb(245,245,245)"/>
<rect x="504.9" y="673.0" width="4" height="4" fill="rgb(246,246,246)"/>
<rect x="508.9" y="673.0" width="4" height="4" fill="rgb(248,248,248)"/>
<rect x="440.9" y="677.0" width="4" height="4" fill="rgb(245,245,245)"/>
<rect x="444.9" y="677.0" width="4" height="4" fill="rgb(244,244,244)"/>
<rect x="448.9" y="677.0" width="4" height="4" fill="rgb(243,243,243)"/>
<rect x="452.9" y="677.0" width="4" height="4" fill="rgb(242,242,242)"/>
<rect x="456.9" y="677.0" width="4" height="4" fill="rgb(241,241,241)"/>
<rect x="460.9" y="677.0" width="4" height="4" fill="rgb(240,240,240)"/>
<rect x="464.9" y="677.0" width="4" height="4" fill="rgb(240,240,240)"/>
<rect x="468.9" y="677.0" width="4" height="4" fill="rgb(240,240,240)"/>
<rect x="472.9" y="677.0" width="4" height="4" fill="rgb(240,240,240)"/>
<rect x="476.9" y="677.0" width="4" height="4" fill="rgb(240,240,240)"/>
<rect x="480.9" y="677.0" width="4" height="4" fill="rgb(241,241,241)"/>
<rect x="484.9" y="677.0" width="4" height="4" fill="rgb(242,242,242)"/>
<rect x="488.9" y="677.0" width="4" height="4" fill="rgb(243,243,243)"/>
<rect x="492.9" y="677.0" width="4" height="4" fill="rgb(244,244,244)"/>
<rect x="496.9" y="677.0" width="4" height="4" fill="rgb(245,245,245)"/>
<rect x="500.9" y="677.0" width="4" height="4" fill="rgb(246,246,246)"/>
<rect x="504.9" y="677.0" width="4" height="4" fill="rgb(248,248,248)"/>
</g>
<g clip-path="url(#kclip)"><circle cx="468.4" cy="636.8" r="39.4" fill="none" stroke="#f0d020" stroke-width="1.3"/></g>
<rect x="466.3" y="558.5" width="96" height="96" fill="none" stroke="#ff0000" stroke-width="1.1"/>
<text x="514.30" y="547.30" font-size="11" text-anchor="middle" fill="#ff0000" stroke="#ff0000" stroke-width="0.18" textLength="8.00" lengthAdjust="spacingAndGlyphs">N</text>
<text x="452.00" y="609.90" font-size="11" text-anchor="middle" fill="#ff0000" stroke="#ff0000" stroke-width="0.18" textLength="6.60" lengthAdjust="spacingAndGlyphs">E</text>
<line x1="514.3" y1="599.3" x2="514.3" y2="569.7" stroke="#ff0000" stroke-width="1.2"/>
<line x1="521.5" y1="606.5" x2="551.1" y2="606.5" stroke="#ff0000" stroke-width="1.2"/>
<line x1="514.3" y1="643.3" x2="514.3" y2="613.7" stroke="#ff0000" stroke-width="1.2"/>
<line x1="477.5" y1="606.5" x2="507.1" y2="606.5" stroke="#ff0000" stroke-width="1.2"/>
<line x1="437.3" y1="670.5" x2="440.9" y2="670.5" stroke="#222" stroke-width="1"/>
<text x="432.90" y="674.10" font-size="10.8" text-anchor="end" stroke="#000" stroke-width="0.18" textLength="14.20" lengthAdjust="spacingAndGlyphs">−4</text>
<line x1="450.3" y1="680.8" x2="450.3" y2="684.4" stroke="#222" stroke-width="1"/>
<text x="450.00" y="696.00" font-size="10.8" text-anchor="middle" stroke="#000" stroke-width="0.18" textLength="13.80" lengthAdjust="spacingAndGlyphs">−4</text>
<line x1="437.3" y1="638.5" x2="440.9" y2="638.5" stroke="#222" stroke-width="1"/>
<text x="432.90" y="642.10" font-size="10.8" text-anchor="end" stroke="#000" stroke-width="0.18" textLength="14.20" lengthAdjust="spacingAndGlyphs">−2</text>
<line x1="482.3" y1="680.8" x2="482.3" y2="684.4" stroke="#222" stroke-width="1"/>
<text x="482.00" y="696.00" font-size="10.8" text-anchor="middle" stroke="#000" stroke-width="0.18" textLength="13.80" lengthAdjust="spacingAndGlyphs">−2</text>
<line x1="437.3" y1="606.5" x2="440.9" y2="606.5" stroke="#222" stroke-width="1"/>
<text x="432.90" y="610.10" font-size="10.8" text-anchor="end" stroke="#000" stroke-width="0.18" textLength="5.70" lengthAdjust="spacingAndGlyphs">0</text>
<line x1="514.3" y1="680.8" x2="514.3" y2="684.4" stroke="#222" stroke-width="1"/>
<text x="514.30" y="696.00" font-size="10.8" text-anchor="middle" stroke="#000" stroke-width="0.18" textLength="5.70" lengthAdjust="spacingAndGlyphs">0</text>
<line x1="437.3" y1="574.5" x2="440.9" y2="574.5" stroke="#222" stroke-width="1"/>
<text x="432.90" y="578.10" font-size="10.8" text-anchor="end" stroke="#000" stroke-width="0.18" textLength="5.70" lengthAdjust="spacingAndGlyphs">2</text>
<line x1="546.3" y1="680.8" x2="546.3" y2="684.4" stroke="#222" stroke-width="1"/>
<text x="546.30" y="696.00" font-size="10.8" text-anchor="middle" stroke="#000" stroke-width="0.18" textLength="5.70" lengthAdjust="spacingAndGlyphs">2</text>
<line x1="437.3" y1="542.5" x2="440.9" y2="542.5" stroke="#222" stroke-width="1"/>
<text x="432.90" y="546.10" font-size="10.8" text-anchor="end" stroke="#000" stroke-width="0.18" textLength="5.70" lengthAdjust="spacingAndGlyphs">4</text>
<line x1="578.3" y1="680.8" x2="578.3" y2="684.4" stroke="#222" stroke-width="1"/>
<text x="578.30" y="696.00" font-size="10.8" text-anchor="middle" stroke="#000" stroke-width="0.18" textLength="5.70" lengthAdjust="spacingAndGlyphs">4</text>
<rect x="440.9" y="533.0" width="147.8" height="147.8" fill="none" stroke="#222" stroke-width="1.1"/>
<text x="454.50" y="706.00" font-size="10.8" stroke="#000" stroke-width="0.18" textLength="119.30" lengthAdjust="spacingAndGlyphs">m:14.5  re:2.4"  s:3.3"</text>
<text x="465.00" y="717.70" font-size="10.8" stroke="#000" stroke-width="0.18" textLength="102.00" lengthAdjust="spacingAndGlyphs">EWr: 0, PLAE: 1000</text>
<defs><linearGradient id="g1" x1="0" y1="0" x2="0" y2="1"><stop offset="0.000" stop-color="rgb(200,200,200)"/><stop offset="0.220" stop-color="rgb(185,185,185)"/><stop offset="0.420" stop-color="rgb(135,135,135)"/><stop offset="0.600" stop-color="rgb(130,130,130)"/><stop offset="0.750" stop-color="rgb(180,180,180)"/><stop offset="0.840" stop-color="rgb(150,150,150)"/><stop offset="0.920" stop-color="rgb(45,45,45)"/><stop offset="1.000" stop-color="rgb(20,20,20)"/></linearGradient><filter id="f2" x="0" y="0" width="1" height="1" color-interpolation-filters="sRGB"><feTurbulence type="fractalNoise" baseFrequency="0.55" numOctaves="2" seed="3" result="n1"/><feColorMatrix in="n1" type="matrix" values="1 0 0 0 0 1 0 0 0 0 1 0 0 0 0 0 0 0 0 1" result="n2"/><feComponentTransfer in="n2" result="n3"><feFuncR type="linear" slope="2.3" intercept="-0.650"/><feFuncG type="linear" slope="2.3" intercept="-0.650"/><feFuncB type="linear" slope="2.3" intercept="-0.650"/></feComponentTransfer><feComposite in="SourceGraphic" in2="n3" operator="arithmetic" k1="0" k2="1" k3="0.42" k4="-0.210"/></filter><filter id="sblur" x="-10%" y="-30%" width="120%" height="160%"><feGaussianBlur stdDeviation="1.8"/></filter><clipPath id="wsc"><rect x="657.7" y="47.7" width="86.9" height="36.6"/></clipPath><linearGradient id="g3" x1="0" y1="0" x2="0" y2="1"><stop offset="0.000" stop-color="rgb(172,172,172)"/><stop offset="0.300" stop-color="rgb(160,160,160)"/><stop offset="0.450" stop-color="rgb(118,118,118)"/><stop offset="0.550" stop-color="rgb(108,108,108)"/><stop offset="0.680" stop-color="rgb(140,140,140)"/><stop offset="0.800" stop-color="rgb(125,125,125)"/><stop offset="1.000" stop-color="rgb(110,110,110)"/></linearGradient><filter id="f4" x="0" y="0" width="1" height="1" color-interpolation-filters="sRGB"><feTurbulence type="fractalNoise" baseFrequency="0.12 0.05" numOctaves="1" seed="5" result="n1"/><feColorMatrix in="n1" type="matrix" values="1 0 0 0 0 1 0 0 0 0 1 0 0 0 0 0 0 0 0 1" result="n2"/><feComponentTransfer in="n2" result="n3"><feFuncR type="linear" slope="2" intercept="-0.500"/><feFuncG type="linear" slope="2" intercept="-0.500"/><feFuncB type="linear" slope="2" intercept="-0.500"/></feComponentTransfer><feComposite in="SourceGraphic" in2="n3" operator="arithmetic" k1="0" k2="1" k3="0.22" k4="-0.110"/></filter><linearGradient id="g5" x1="0" y1="0" x2="0" y2="1"><stop offset="0.000" stop-color="rgb(130,130,130)"/><stop offset="1.000" stop-color="rgb(125,125,125)"/></linearGradient><filter id="f6" x="0" y="0" width="1" height="1" color-interpolation-filters="sRGB"><feTurbulence type="fractalNoise" baseFrequency="0.55" numOctaves="2" seed="11" result="n1"/><feColorMatrix in="n1" type="matrix" values="1 0 0 0 0 1 0 0 0 0 1 0 0 0 0 0 0 0 0 1" result="n2"/><feComponentTransfer in="n2" result="n3"><feFuncR type="linear" slope="2.5" intercept="-0.750"/><feFuncG type="linear" slope="2.5" intercept="-0.750"/><feFuncB type="linear" slope="2.5" intercept="-0.750"/></feComponentTransfer><feComposite in="SourceGraphic" in2="n3" operator="arithmetic" k1="0" k2="1" k3="0.55" k4="-0.275"/></filter><clipPath id="rsc0"><rect x="656.6" y="95.8" width="89.1" height="36.4"/></clipPath><linearGradient id="g7" x1="0" y1="0" x2="0" y2="1"><stop offset="0.000" stop-color="rgb(132,132,132)"/><stop offset="0.600" stop-color="rgb(122,122,122)"/><stop offset="0.850" stop-color="rgb(105,105,105)"/><stop offset="1.000" stop-color="rgb(75,75,75)"/></linearGradient><filter id="f8" x="0" y="0" width="1" height="1" color-interpolation-filters="sRGB"><feTurbulence type="fractalNoise" baseFrequency="0.07 0.05" numOctaves="2" seed="21" result="n1"/><feColorMatrix in="n1" type="matrix" values="1 0 0 0 0 1 0 0 0 0 1 0 0 0 0 0 0 0 0 1" result="n2"/><feComponentTransfer in="n2" result="n3"><feFuncR type="linear" slope="2.2" intercept="-0.600"/><feFuncG type="linear" slope="2.2" intercept="-0.600"/><feFuncB type="linear" slope="2.2" intercept="-0.600"/></feComponentTransfer><feComposite in="SourceGraphic" in2="n3" operator="arithmetic" k1="0" k2="1" k3="0.3" k4="-0.150"/></filter><linearGradient id="g9" x1="0" y1="0" x2="0" y2="1"><stop offset="0.000" stop-color="rgb(155,155,155)"/><stop offset="0.800" stop-color="rgb(140,140,140)"/><stop offset="0.920" stop-color="rgb(70,70,70)"/><stop offset="1.000" stop-color="rgb(110,110,110)"/></linearGradient><filter id="f10" x="0" y="0" width="1" height="1" color-interpolation-filters="sRGB"><feTurbulence type="fractalNoise" baseFrequency="0.55" numOctaves="2" seed="12" result="n1"/><feColorMatrix in="n1" type="matrix" values="1 0 0 0 0 1 0 0 0 0 1 0 0 0 0 0 0 0 0 1" result="n2"/><feComponentTransfer in="n2" result="n3"><feFuncR type="linear" slope="2.5" intercept="-0.750"/><feFuncG type="linear" slope="2.5" intercept="-0.750"/><feFuncB type="linear" slope="2.5" intercept="-0.750"/></feComponentTransfer><feComposite in="SourceGraphic" in2="n3" operator="arithmetic" k1="0" k2="1" k3="0.55" k4="-0.275"/></filter><clipPath id="rsc1"><rect x="656.6" y="135.8" width="89.1" height="36.4"/></clipPath><linearGradient id="g11" x1="0" y1="0" x2="0" y2="1"><stop offset="0.000" stop-color="rgb(158,158,158)"/><stop offset="0.500" stop-color="rgb(148,148,148)"/><stop offset="0.750" stop-color="rgb(120,120,120)"/><stop offset="1.000" stop-color="rgb(100,100,100)"/></linearGradient><filter id="f12" x="0" y="0" width="1" height="1" color-interpolation-filters="sRGB"><feTurbulence type="fractalNoise" baseFrequency="0.07 0.05" numOctaves="2" seed="22" result="n1"/><feColorMatrix in="n1" type="matrix" values="1 0 0 0 0 1 0 0 0 0 1 0 0 0 0 0 0 0 0 1" result="n2"/><feComponentTransfer in="n2" result="n3"><feFuncR type="linear" slope="2.2" intercept="-0.600"/><feFuncG type="linear" slope="2.2" intercept="-0.600"/><feFuncB type="linear" slope="2.2" intercept="-0.600"/></feComponentTransfer><feComposite in="SourceGraphic" in2="n3" operator="arithmetic" k1="0" k2="1" k3="0.3" k4="-0.150"/></filter><linearGradient id="g13" x1="0" y1="0" x2="0" y2="1"><stop offset="0.000" stop-color="rgb(115,115,115)"/><stop offset="1.000" stop-color="rgb(105,105,105)"/></linearGradient><filter id="f14" x="0" y="0" width="1" height="1" color-interpolation-filters="sRGB"><feTurbulence type="fractalNoise" baseFrequency="0.55" numOctaves="2" seed="13" result="n1"/><feColorMatrix in="n1" type="matrix" values="1 0 0 0 0 1 0 0 0 0 1 0 0 0 0 0 0 0 0 1" result="n2"/><feComponentTransfer in="n2" result="n3"><feFuncR type="linear" slope="2.5" intercept="-0.750"/><feFuncG type="linear" slope="2.5" intercept="-0.750"/><feFuncB type="linear" slope="2.5" intercept="-0.750"/></feComponentTransfer><feComposite in="SourceGraphic" in2="n3" operator="arithmetic" k1="0" k2="1" k3="0.55" k4="-0.275"/></filter><clipPath id="rsc2"><rect x="656.6" y="175.8" width="89.1" height="36.4"/></clipPath><linearGradient id="g15" x1="0" y1="0" x2="0" y2="1"><stop offset="0.000" stop-color="rgb(128,128,128)"/><stop offset="0.700" stop-color="rgb(118,118,118)"/><stop offset="1.000" stop-color="rgb(105,105,105)"/></linearGradient><filter id="f16" x="0" y="0" width="1" height="1" color-interpolation-filters="sRGB"><feTurbulence type="fractalNoise" baseFrequency="0.07 0.05" numOctaves="2" seed="23" result="n1"/><feColorMatrix in="n1" type="matrix" values="1 0 0 0 0 1 0 0 0 0 1 0 0 0 0 0 0 0 0 1" result="n2"/><feComponentTransfer in="n2" result="n3"><feFuncR type="linear" slope="2.2" intercept="-0.600"/><feFuncG type="linear" slope="2.2" intercept="-0.600"/><feFuncB type="linear" slope="2.2" intercept="-0.600"/></feComponentTransfer><feComposite in="SourceGraphic" in2="n3" operator="arithmetic" k1="0" k2="1" k3="0.3" k4="-0.150"/></filter><linearGradient id="g17" x1="0" y1="0" x2="0" y2="1"><stop offset="0.000" stop-color="rgb(205,205,205)"/><stop offset="0.250" stop-color="rgb(190,190,190)"/><stop offset="0.450" stop-color="rgb(120,120,120)"/><stop offset="0.580" stop-color="rgb(125,125,125)"/><stop offset="0.720" stop-color="rgb(190,190,190)"/><stop offset="0.820" stop-color="rgb(160,160,160)"/><stop offset="0.900" stop-color="rgb(45,45,45)"/><stop offset="1.000" stop-color="rgb(15,15,15)"/></linearGradient><filter id="f18" x="0" y="0" width="1" height="1" color-interpolation-filters="sRGB"><feTurbulence type="fractalNoise" baseFrequency="0.55" numOctaves="2" seed="14" result="n1"/><feColorMatrix in="n1" type="matrix" values="1 0 0 0 0 1 0 0 0 0 1 0 0 0 0 0 0 0 0 1" result="n2"/><feComponentTransfer in="n2" result="n3"><feFuncR type="linear" slope="2.5" intercept="-0.750"/><feFuncG type="linear" slope="2.5" intercept="-0.750"/><feFuncB type="linear" slope="2.5" intercept="-0.750"/></feComponentTransfer><feComposite in="SourceGraphic" in2="n3" operator="arithmetic" k1="0" k2="1" k3="0.55" k4="-0.275"/></filter><clipPath id="rsc3"><rect x="656.6" y="215.8" width="89.1" height="36.4"/></clipPath><linearGradient id="g19" x1="0" y1="0" x2="0" y2="1"><stop offset="0.000" stop-color="rgb(185,185,185)"/><stop offset="0.300" stop-color="rgb(170,170,170)"/><stop offset="0.450" stop-color="rgb(112,112,112)"/><stop offset="0.580" stop-color="rgb(115,115,115)"/><stop offset="0.720" stop-color="rgb(150,150,150)"/><stop offset="1.000" stop-color="rgb(120,120,120)"/></linearGradient><filter id="f20" x="0" y="0" width="1" height="1" color-interpolation-filters="sRGB"><feTurbulence type="fractalNoise" baseFrequency="0.07 0.05" numOctaves="2" seed="24" result="n1"/><feColorMatrix in="n1" type="matrix" values="1 0 0 0 0 1 0 0 0 0 1 0 0 0 0 0 0 0 0 1" result="n2"/><feComponentTransfer in="n2" result="n3"><feFuncR type="linear" slope="2.2" intercept="-0.600"/><feFuncG type="linear" slope="2.2" intercept="-0.600"/><feFuncB type="linear" slope="2.2" intercept="-0.600"/></feComponentTransfer><feComposite in="SourceGraphic" in2="n3" operator="arithmetic" k1="0" k2="1" k3="0.3" k4="-0.150"/></filter><linearGradient id="skyg" gradientUnits="userSpaceOnUse" x1="0" y1="68" x2="0" y2="80.5" spreadMethod="repeat"><stop offset="0" stop-color="rgb(212,212,212)"/><stop offset="0.22" stop-color="rgb(200,200,200)"/><stop offset="0.36" stop-color="rgb(115,115,115)"/><stop offset="0.5" stop-color="rgb(80,80,80)"/><stop offset="0.64" stop-color="rgb(115,115,115)"/><stop offset="0.78" stop-color="rgb(200,200,200)"/><stop offset="1" stop-color="rgb(212,212,212)"/></linearGradient><filter id="f21" x="0" y="0" width="1" height="1" color-interpolation-filters="sRGB"><feTurbulence type="fractalNoise" baseFrequency="0.7" numOctaves="2" seed="31" result="n1"/><feColorMatrix in="n1" type="matrix" values="1 0 0 0 0 1 0 0 0 0 1 0 0 0 0 0 0 0 0 1" result="n2"/><feComponentTransfer in="n2" result="n3"><feFuncR type="linear" slope="2.2" intercept="-0.600"/><feFuncG type="linear" slope="2.2" intercept="-0.600"/><feFuncB type="linear" slope="2.2" intercept="-0.600"/></feComponentTransfer><feComposite in="SourceGraphic" in2="n3" operator="arithmetic" k1="0" k2="1" k3="0.55" k4="-0.275"/></filter><linearGradient id="g22" x1="0" y1="0" x2="0" y2="1"><stop offset="0.000" stop-color="rgb(150,150,150)"/><stop offset="0.400" stop-color="rgb(140,140,140)"/><stop offset="0.550" stop-color="rgb(120,120,120)"/><stop offset="0.700" stop-color="rgb(138,138,138)"/><stop offset="1.000" stop-color="rgb(145,145,145)"/></linearGradient><filter id="f23" x="0" y="0" width="1" height="1" color-interpolation-filters="sRGB"><feTurbulence type="fractalNoise" baseFrequency="0.7" numOctaves="2" seed="37" result="n1"/><feColorMatrix in="n1" type="matrix" values="1 0 0 0 0 1 0 0 0 0 1 0 0 0 0 0 0 0 0 1" result="n2"/><feComponentTransfer in="n2" result="n3"><feFuncR type="linear" slope="2.3" intercept="-0.650"/><feFuncG type="linear" slope="2.3" intercept="-0.650"/><feFuncB type="linear" slope="2.3" intercept="-0.650"/></feComponentTransfer><feComposite in="SourceGraphic" in2="n3" operator="arithmetic" k1="0" k2="1" k3="0.55" k4="-0.275"/></filter></defs>
</svg>
</body></html>
